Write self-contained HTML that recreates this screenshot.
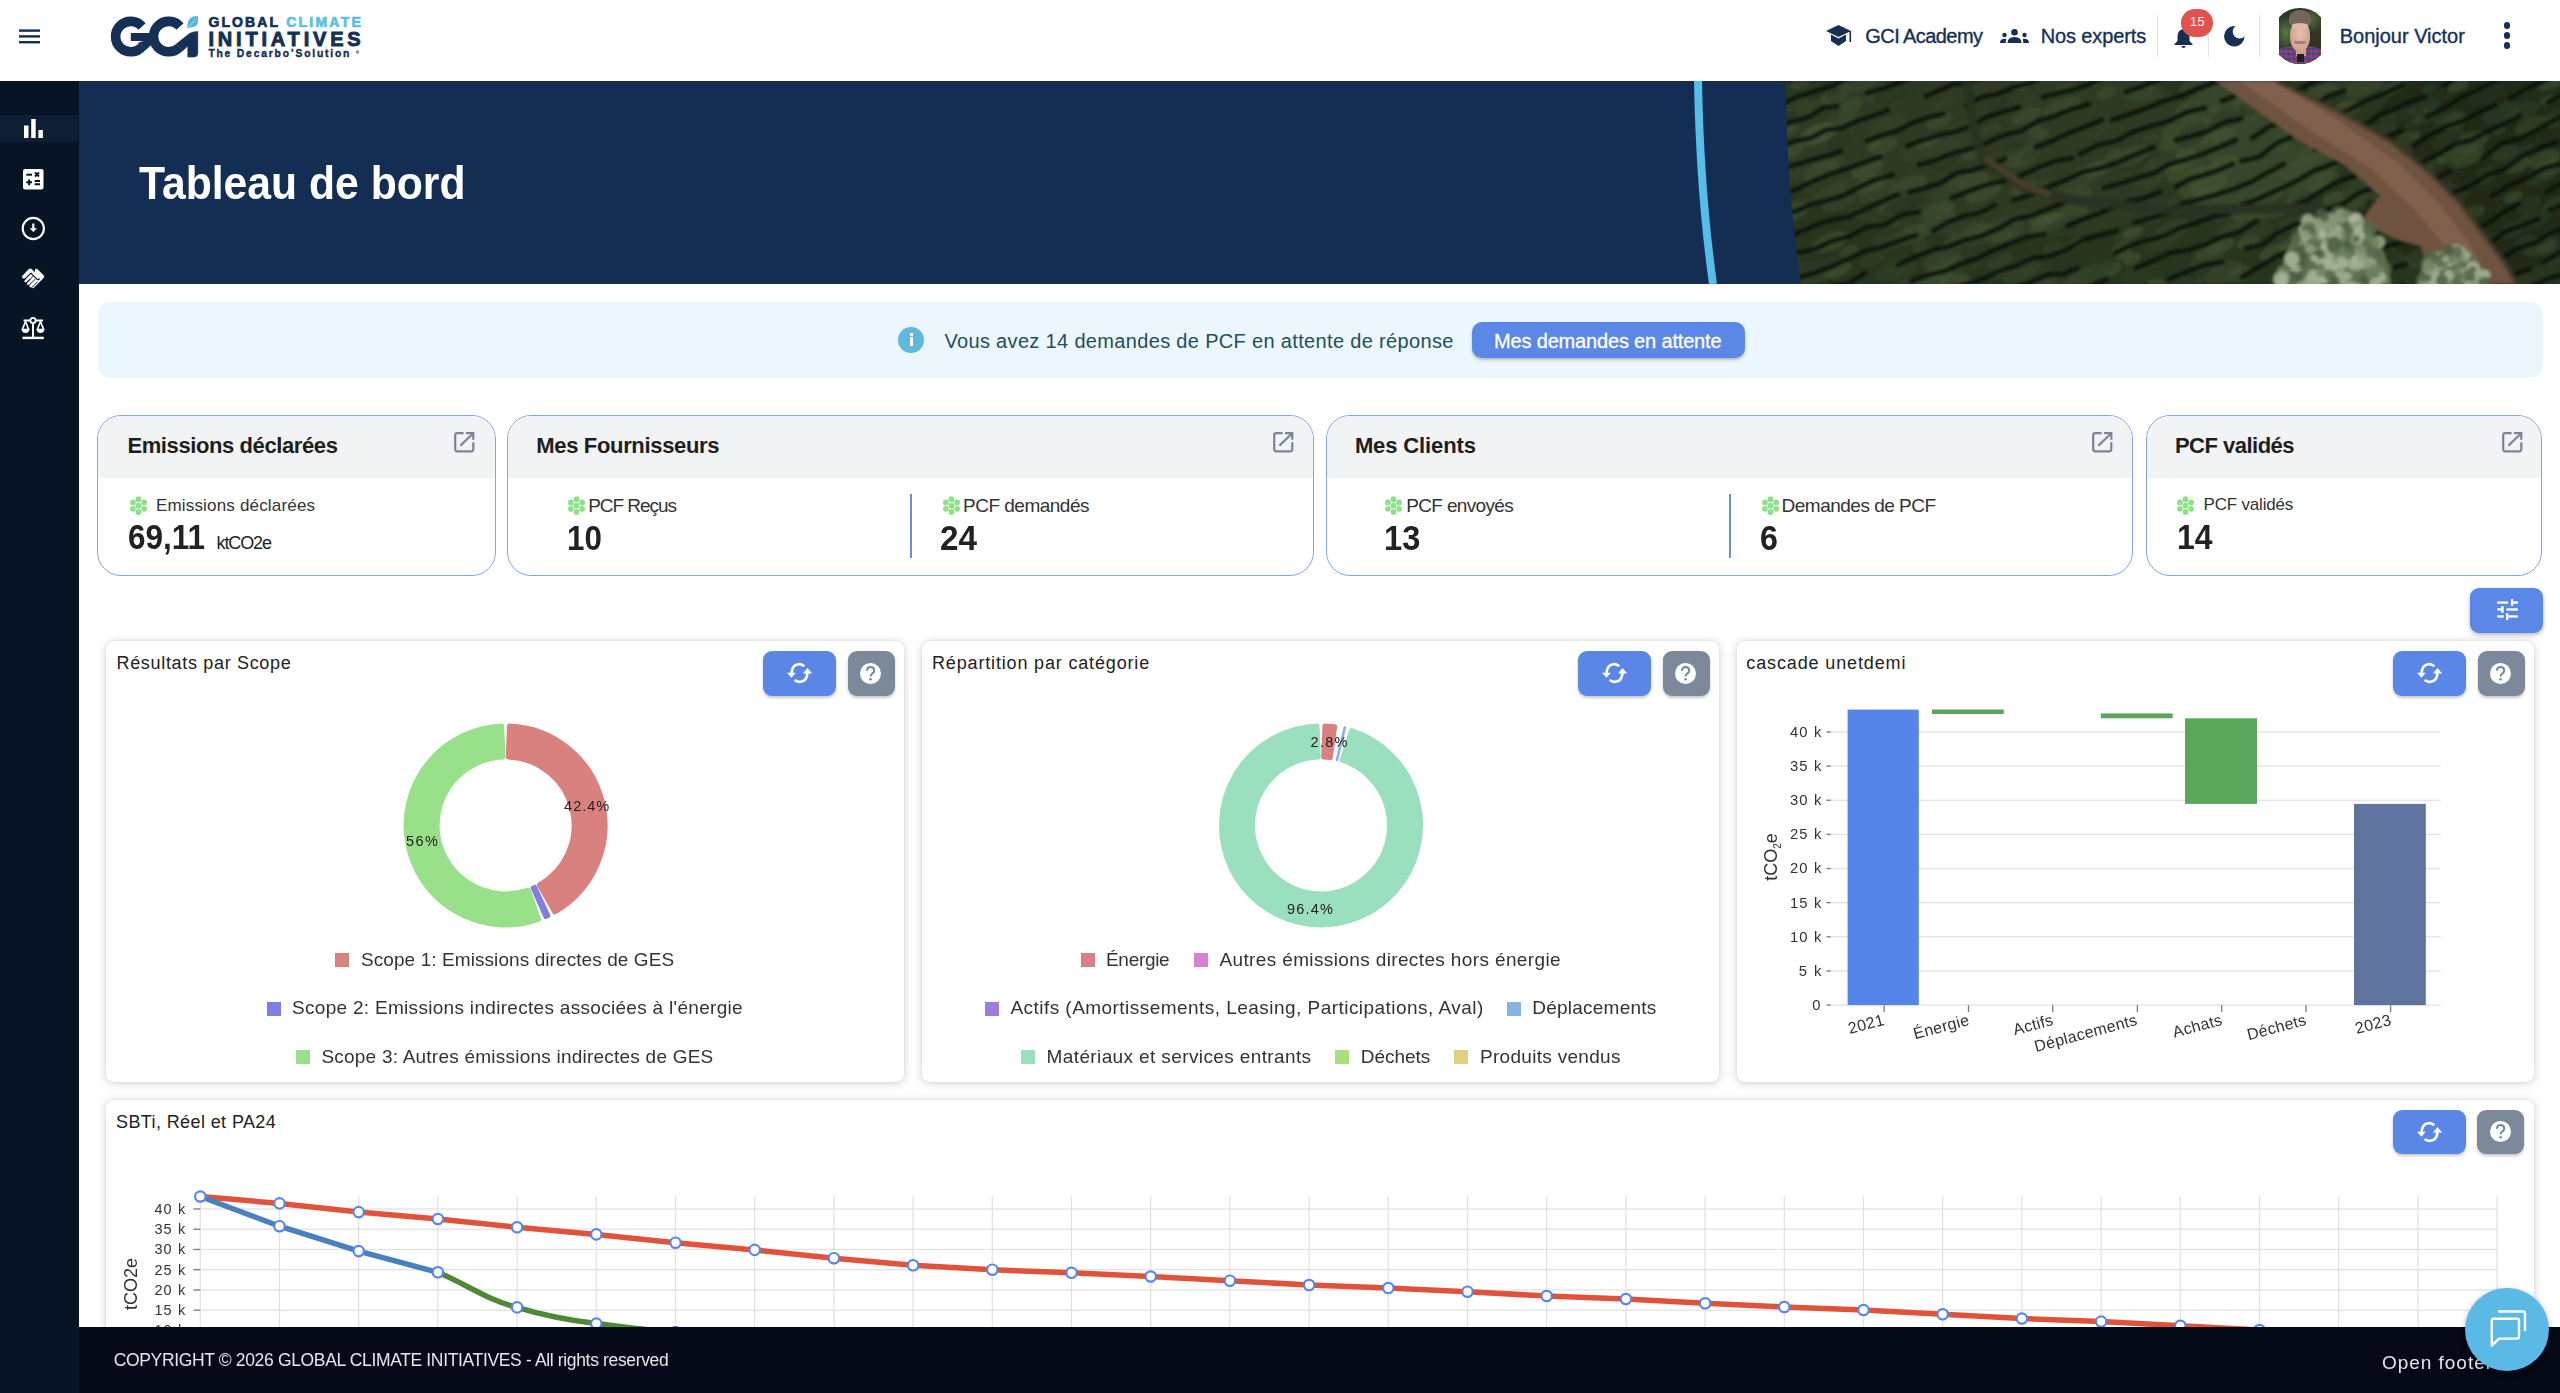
<!DOCTYPE html><html><head><meta charset="utf-8"><style>
*{box-sizing:border-box;margin:0;padding:0}
html,body{width:2560px;height:1393px;overflow:hidden;background:#fff;font-family:"Liberation Sans",sans-serif}
.t{position:absolute;white-space:nowrap;line-height:1}
.a{position:absolute}
svg{position:absolute;overflow:visible}
</style></head><body><div class="a" style="left:0;top:0;width:2560px;height:81px;background:#fff"></div>
<svg style="left:19px;top:29px" width="21" height="15"><rect x="0" y="0.4" width="21" height="2.4" fill="#152f55"/><rect x="0" y="6.2" width="21" height="2.4" fill="#152f55"/><rect x="0" y="12" width="21" height="2.4" fill="#152f55"/></svg>
<svg style="left:105px;top:10px" width="100" height="52" viewBox="0 0 100 52">
<g fill="none" stroke="#152f55" stroke-width="9.6">
<path d="M37.10,16.43 A15.2,15.2 0 1 0 37.44,36.37"/>
<path d="M75.00,16.43 A15.2,15.2 0 1 0 74.45,37.35"/>
</g>
<rect x="25.8" y="23" width="18.5" height="8" fill="#152f55"/>
<path d="M33.5,33 L44.5,29 L45.6,35.2 L41,39.5 Z" fill="#152f55" stroke="#152f55" stroke-width="0.6"/>
<path d="M71.2,34.1 L83.6,24.2 Q87,21.5 92.8,21.5 L92.8,43 Q92.8,47 88.8,47 L82.8,47 L82.8,36 L77.8,40.7 Z" fill="#152f55" stroke="#152f55" stroke-width="0.6" stroke-linejoin="round"/>
<path d="M82.3,18 Q82,9 88,6.5 L93,6 L93,11 Q93,16.5 88,17 Q85,17.3 82.3,18 Z" fill="#55b6de"/>
<path d="M83.5,17 L90.5,9.5" stroke="#fff" stroke-width="0.7" opacity="0.8"/>
</svg>
<div class="t" style="left:208.4px;top:14.5px;font-size:14px;font-weight:700;color:#152f55;letter-spacing:2.098px;-webkit-text-stroke:0.7px #152f55">GLOBAL</div>
<div class="t" style="left:286.2px;top:14.5px;font-size:14px;font-weight:700;color:#5bbfe6;letter-spacing:2.235px;-webkit-text-stroke:0.7px #5bbfe6">CLIMATE</div>
<div class="t" style="left:208.4px;top:29.0px;font-size:20px;font-weight:700;color:#152f55;letter-spacing:3.821px;-webkit-text-stroke:0.9px #152f55">INITIATIVES</div>
<div class="t" style="left:208.4px;top:49.3px;font-size:10.3px;font-weight:700;color:#152f55;letter-spacing:1.820px;-webkit-text-stroke:0.4px #152f55">The Decarbo’Solution</div>
<div class="a" style="left:355.5px;top:50px;width:3.6px;height:3.6px;border-radius:50%;background:#8a97aa"></div>
<svg style="left:1826px;top:25px" width="26" height="22" viewBox="0 0 26 22">
<path d="M12.5,0 L25,6 L12.5,12 L0,6 Z" fill="#152f55"/>
<path d="M5,9.5 L5,16 L12.5,21 L20,16 L20,9.5 L12.5,13.5 Z" fill="#152f55"/>
<rect x="23.5" y="6" width="1.6" height="11" fill="#152f55"/>
</svg>
<div class="t" style="left:1865.3px;top:26.1px;font-size:20px;font-weight:400;color:#152f55;letter-spacing:-0.569px;-webkit-text-stroke:0.35px #152f55">GCI Academy</div>
<svg style="left:2000px;top:29px" width="29" height="14" viewBox="0 0 29 14">
<circle cx="14.5" cy="3.3" r="3.3" fill="#152f55"/>
<path d="M7.5,14 Q7.5,8 14.5,8 Q21.5,8 21.5,14 Z" fill="#152f55"/>
<circle cx="4.5" cy="6" r="2.2" fill="#152f55"/><path d="M0,14 Q0,9.8 5,9.8 L6.2,10 Q5.6,11.5 5.8,14 Z" fill="#152f55"/>
<circle cx="24.5" cy="6" r="2.2" fill="#152f55"/><path d="M29,14 Q29,9.8 24,9.8 L22.8,10 Q23.4,11.5 23.2,14 Z" fill="#152f55"/>
</svg>
<div class="t" style="left:2040.7px;top:26.1px;font-size:20px;font-weight:400;color:#152f55;letter-spacing:-0.122px;-webkit-text-stroke:0.35px #152f55">Nos experts</div>
<div class="a" style="left:2156.9px;top:15px;width:1.2px;height:42px;background:#e3e3e3"></div>
<div class="a" style="left:2208.2px;top:15px;width:1.2px;height:42px;background:#e3e3e3"></div>
<div class="a" style="left:2259.1px;top:15px;width:1.2px;height:42px;background:#e3e3e3"></div>
<svg style="left:2174px;top:28px" width="19" height="20" viewBox="0 0 19 20">
<path d="M9.5,1 Q15,1.5 15.5,8 L15.5,13 L18.5,16 L18.5,17 L0.5,17 L0.5,16 L3.5,13 L3.5,8 Q4,1.5 9.5,1 Z" fill="#152f55"/>
<path d="M7.3,18 L11.7,18 Q11.5,20 9.5,20 Q7.5,20 7.3,18 Z" fill="#152f55"/>
</svg>
<div class="a" style="left:2181px;top:9px;width:32px;height:28px;border-radius:14px;background:#e0524b"></div>
<div class="t" style="left:2190.0px;top:16.1px;font-size:12.6px;font-weight:400;color:#fff;letter-spacing:0.384px;">15</div>
<svg style="left:2224px;top:26.4px" width="21" height="20.5" viewBox="0 0 21 20.5">
<defs><mask id="mm"><rect x="-2" y="-2" width="25" height="25" fill="#fff"/><circle cx="15.6" cy="5.6" r="6.9" fill="#000"/></mask></defs>
<circle cx="10.3" cy="10.25" r="10.25" fill="#152f55" mask="url(#mm)"/>
</svg>
<div class="a" style="left:2278.9px;top:7.9px;width:42px;height:55.8px;overflow:hidden">
<div class="a" style="left:-6.9px;top:0;width:55.8px;height:55.8px;border-radius:50%;overflow:hidden;background:#2b3a24;filter:blur(0.5px)">
<div class="a" style="left:0;top:0;width:56px;height:56px;background:radial-gradient(ellipse 22% 30% at 25% 45%,#5a7a45 0%,rgba(0,0,0,0) 100%),radial-gradient(ellipse 25% 25% at 70% 20%,#4d6a3a 0%,rgba(0,0,0,0) 100%),radial-gradient(ellipse 25% 40% at 80% 55%,#3a3024 0%,rgba(0,0,0,0) 100%)"></div>
<div class="a" style="left:-2px;top:38px;width:60px;height:22px;border-radius:50% 50% 0 0;background:repeating-linear-gradient(90deg,#8a4562 0 2.5px,#434a8a 2.5px 5px)"></div>
<div class="a" style="left:-2px;top:38px;width:60px;height:22px;border-radius:50% 50% 0 0;background:repeating-linear-gradient(0deg,rgba(170,60,100,0.45) 0 2.5px,rgba(50,60,150,0.45) 2.5px 5px)"></div>
<div class="a" style="left:24px;top:38px;width:10px;height:10px;background:#c9a08c"></div>
<div class="a" style="left:25px;top:46px;width:7px;height:8px;background:#1c1c22"></div>
<div class="a" style="left:17.5px;top:13px;width:20px;height:31px;border-radius:45% 45% 50% 50%;background:radial-gradient(ellipse at 50% 40%,#e4c2b2 0%,#c89c88 85%)"></div>
<div class="a" style="left:16.5px;top:2.5px;width:22px;height:17px;border-radius:50% 50% 30% 30%;background:#74665a"></div><div class="a" style="left:19.5px;top:15px;width:16px;height:5px;border-radius:50% 50% 0 0;background:#ddb9a8"></div>
<div class="a" style="left:21.5px;top:33.5px;width:12px;height:3px;border-radius:0 0 6px 6px;background:#b07a70"></div>
</div></div>
<div class="t" style="left:2339.8px;top:26.3px;font-size:20px;font-weight:400;color:#152f55;letter-spacing:-0.020px;-webkit-text-stroke:0.35px #152f55">Bonjour Victor</div>
<div class="a" style="left:2503.6px;top:22.45px;width:6.7px;height:6.7px;border-radius:50%;background:#152f55"></div>
<div class="a" style="left:2503.6px;top:32.25px;width:6.7px;height:6.7px;border-radius:50%;background:#152f55"></div>
<div class="a" style="left:2503.6px;top:42.05px;width:6.7px;height:6.7px;border-radius:50%;background:#152f55"></div>
<div class="a" style="left:0;top:81px;width:79px;height:1312px;background:#061426"></div>
<div class="a" style="left:0;top:115.3px;width:78px;height:27.2px;background:#0c1f35"></div>
<svg style="left:23.7px;top:119.2px" width="19" height="19"><rect x="0" y="6.5" width="4.5" height="12.5" fill="#fff"/><rect x="7.2" y="0" width="4.5" height="19" fill="#fff"/><rect x="14.4" y="11" width="4.5" height="8" fill="#fff"/></svg>
<svg style="left:22.8px;top:168.7px" width="20.5" height="20.5" viewBox="0 0 20.5 20.5">
<rect x="0" y="0" width="20.5" height="20.5" rx="2" fill="#fff"/>
<g stroke="#061426" stroke-width="2">
<path d="M3.3,5.7 L9,5.7"/><path d="M12,3.5 L16,7.5 M16,3.5 L12,7.5"/>
<path d="M3.3,13.3 L9,13.3 M6.15,10.5 L6.15,16.2"/><path d="M11.7,12 L17,12 M11.7,15.3 L17,15.3"/>
</g></svg>
<svg style="left:21.5px;top:216.6px" width="23.3" height="23" viewBox="0 0 23.3 23">
<circle cx="11.3" cy="11.5" r="10.6" fill="none" stroke="#fff" stroke-width="2.1"/>
<path d="M10.2,6.6 L12.4,6.6 L12.4,11.2 L15,11.2 L11.3,15 L7.6,11.2 L10.2,11.2 Z" fill="#fff"/>
</svg>
<svg style="left:15px;top:260px" width="35" height="35" viewBox="15 260 35 35">
<g fill="#fff">
<path d="M22.6,278.2 Q21.2,276.8 22.6,275.4 L28.9,269.1 Q30.3,267.7 31.7,269.1 L38.9,276.3 Q40.3,277.7 38.9,279.1 L37.5,280.5 Z"/>
<path d="M35,269.3 Q36.3,268 37.6,269.3 L43.6,275.3 Q45,276.7 43.6,278.1 L34.2,287.5 Q32.8,288.9 31.4,287.5 L29,285 Z"/>
</g>
<g stroke="#fff" stroke-width="2.5" stroke-linecap="round">
<path d="M25.6,281.2 L31.6,275.2"/><path d="M28.1,283.7 L34.1,277.7"/><path d="M30.6,286.2 L36.4,280.4"/>
</g>
<g stroke="#061426" fill="none" stroke-linecap="round">
<path d="M24.2,279.8 L30.9,273.1 L36.9,279.1 Q38,280.2 39.2,279" stroke-width="1.2" stroke-linejoin="round"/>
<path d="M26.9,282.5 L32.6,276.8" stroke-width="1"/>
<path d="M29.4,285 L35.1,279.3" stroke-width="1"/>
<path d="M31.9,287.5 L37.5,281.9" stroke-width="1"/>
<path d="M34.4,268.9 L34.4,271.2" stroke-width="1.2"/>
</g>
</svg>
<svg style="left:15px;top:305px" width="35" height="40" viewBox="15 305 35 40">
<g stroke="#fff" fill="none">
<circle cx="33" cy="320.4" r="2.6" stroke-width="1.8"/>
<path d="M23.6,320.6 L30.3,320.6 M35.7,320.6 L43,320.6" stroke-width="2"/>
<path d="M33,323 L33,337" stroke-width="2"/>
<path d="M22.5,337.9 L43.8,337.9" stroke-width="2.4"/>
<path d="M25.5,321.5 L22.3,329.6 L28.7,329.6 Z M40.5,321.5 L37.3,329.6 L43.7,329.6 Z" stroke-width="1.6" stroke-linejoin="round"/>
</g>
<path d="M21.6,329.2 Q21.8,332.9 25.5,332.9 Q29.2,332.9 29.4,329.2 Z M36.6,329.2 Q36.8,332.9 40.5,332.9 Q44.2,332.9 44.4,329.2 Z" fill="#fff"/>
</svg>
<div class="a" style="left:79px;top:81px;width:2481px;height:203px;background:#142d53;overflow:hidden">
<div class="t" style="left:60.0px;top:77.7px;font-size:47px;font-weight:700;color:#fff;letter-spacing:0.000px;transform:scaleX(0.9082);transform-origin:0 0;">Tableau de bord</div>
<svg style="left:0;top:0" width="2481" height="203" viewBox="79 81 2481 203">
<defs><clipPath id="ph"><path d="M1785.6,81 Q1787,191 1801,284 L2560,284 L2560,81 Z"/></clipPath>
<filter id="bl" x="-2%" y="-5%" width="104%" height="110%"><feGaussianBlur stdDeviation="1.4"/></filter></defs>
<g clip-path="url(#ph)"><g filter="url(#bl)"><rect x="1780" y="81" width="780" height="203" fill="#28361f"/><ellipse cx="2000" cy="150" rx="220" ry="90" fill="#333f29" opacity="0.5"/><ellipse cx="2250" cy="150" rx="90" ry="70" fill="#3d5230" opacity="0.6"/><ellipse cx="2480" cy="170" rx="120" ry="110" fill="#1a2716" opacity="0.6"/><ellipse cx="2133" cy="195" rx="20" ry="9" transform="rotate(-22 2133 195)" fill="#2e3b25" opacity="0.45"/><ellipse cx="2132" cy="259" rx="10" ry="5" transform="rotate(-22 2132 259)" fill="#4a5e38" opacity="0.45"/><ellipse cx="2151" cy="207" rx="10" ry="5" transform="rotate(-22 2151 207)" fill="#2e3b25" opacity="0.45"/><ellipse cx="2017" cy="94" rx="18" ry="9" transform="rotate(-22 2017 94)" fill="#25321f" opacity="0.45"/><ellipse cx="2275" cy="203" rx="13" ry="6" transform="rotate(-22 2275 203)" fill="#2e3b25" opacity="0.45"/><ellipse cx="2290" cy="207" rx="10" ry="5" transform="rotate(-22 2290 207)" fill="#3a4a2e" opacity="0.45"/><ellipse cx="2429" cy="89" rx="8" ry="4" transform="rotate(-22 2429 89)" fill="#34432a" opacity="0.45"/><ellipse cx="2248" cy="242" rx="12" ry="6" transform="rotate(-22 2248 242)" fill="#4a5e38" opacity="0.45"/><ellipse cx="2437" cy="187" rx="16" ry="8" transform="rotate(-22 2437 187)" fill="#2e3b25" opacity="0.45"/><ellipse cx="1784" cy="93" rx="16" ry="8" transform="rotate(-22 1784 93)" fill="#2e3b25" opacity="0.45"/><ellipse cx="2558" cy="289" rx="19" ry="9" transform="rotate(-22 2558 289)" fill="#25321f" opacity="0.45"/><ellipse cx="1978" cy="238" rx="15" ry="7" transform="rotate(-22 1978 238)" fill="#3a4a2e" opacity="0.45"/><ellipse cx="1835" cy="240" rx="13" ry="6" transform="rotate(-22 1835 240)" fill="#425433" opacity="0.45"/><ellipse cx="2081" cy="281" rx="19" ry="9" transform="rotate(-22 2081 281)" fill="#3a4a2e" opacity="0.45"/><ellipse cx="1947" cy="274" rx="9" ry="4" transform="rotate(-22 1947 274)" fill="#2e3b25" opacity="0.45"/><ellipse cx="2545" cy="160" rx="9" ry="4" transform="rotate(-22 2545 160)" fill="#25321f" opacity="0.45"/><ellipse cx="1935" cy="220" rx="12" ry="6" transform="rotate(-22 1935 220)" fill="#425433" opacity="0.45"/><ellipse cx="2039" cy="282" rx="18" ry="8" transform="rotate(-22 2039 282)" fill="#3a4a2e" opacity="0.45"/><ellipse cx="1885" cy="227" rx="8" ry="4" transform="rotate(-22 1885 227)" fill="#2e3b25" opacity="0.45"/><ellipse cx="2402" cy="113" rx="15" ry="7" transform="rotate(-22 2402 113)" fill="#2e3b25" opacity="0.45"/><ellipse cx="2177" cy="287" rx="18" ry="8" transform="rotate(-22 2177 287)" fill="#2e3b25" opacity="0.45"/><ellipse cx="2282" cy="100" rx="13" ry="6" transform="rotate(-22 2282 100)" fill="#34432a" opacity="0.45"/><ellipse cx="1780" cy="261" rx="20" ry="10" transform="rotate(-22 1780 261)" fill="#4a5e38" opacity="0.45"/><ellipse cx="2017" cy="265" rx="11" ry="5" transform="rotate(-22 2017 265)" fill="#2e3b25" opacity="0.45"/><ellipse cx="2557" cy="204" rx="15" ry="7" transform="rotate(-22 2557 204)" fill="#3a4a2e" opacity="0.45"/><ellipse cx="2552" cy="121" rx="11" ry="5" transform="rotate(-22 2552 121)" fill="#4a5e38" opacity="0.45"/><ellipse cx="2037" cy="139" rx="9" ry="4" transform="rotate(-22 2037 139)" fill="#3a4a2e" opacity="0.45"/><ellipse cx="1943" cy="212" rx="8" ry="4" transform="rotate(-22 1943 212)" fill="#425433" opacity="0.45"/><ellipse cx="2070" cy="172" rx="20" ry="10" transform="rotate(-22 2070 172)" fill="#2e3b25" opacity="0.45"/><ellipse cx="2429" cy="104" rx="13" ry="6" transform="rotate(-22 2429 104)" fill="#25321f" opacity="0.45"/><ellipse cx="1900" cy="270" rx="18" ry="9" transform="rotate(-22 1900 270)" fill="#34432a" opacity="0.45"/><ellipse cx="2346" cy="109" rx="16" ry="8" transform="rotate(-22 2346 109)" fill="#4a5e38" opacity="0.45"/><ellipse cx="1933" cy="279" rx="19" ry="9" transform="rotate(-22 1933 279)" fill="#4a5e38" opacity="0.45"/><ellipse cx="1841" cy="85" rx="9" ry="4" transform="rotate(-22 1841 85)" fill="#4a5e38" opacity="0.45"/><ellipse cx="2531" cy="126" rx="17" ry="8" transform="rotate(-22 2531 126)" fill="#425433" opacity="0.45"/><ellipse cx="2108" cy="270" rx="14" ry="7" transform="rotate(-22 2108 270)" fill="#4a5e38" opacity="0.45"/><ellipse cx="1917" cy="230" rx="9" ry="4" transform="rotate(-22 1917 230)" fill="#34432a" opacity="0.45"/><ellipse cx="2154" cy="216" rx="16" ry="7" transform="rotate(-22 2154 216)" fill="#3a4a2e" opacity="0.45"/><ellipse cx="1999" cy="272" rx="11" ry="5" transform="rotate(-22 1999 272)" fill="#3a4a2e" opacity="0.45"/><ellipse cx="1834" cy="163" rx="11" ry="5" transform="rotate(-22 1834 163)" fill="#3a4a2e" opacity="0.45"/><ellipse cx="1917" cy="154" rx="15" ry="7" transform="rotate(-22 1917 154)" fill="#34432a" opacity="0.45"/><ellipse cx="1852" cy="105" rx="14" ry="6" transform="rotate(-22 1852 105)" fill="#425433" opacity="0.45"/><ellipse cx="2292" cy="224" rx="15" ry="7" transform="rotate(-22 2292 224)" fill="#34432a" opacity="0.45"/><ellipse cx="2240" cy="274" rx="14" ry="7" transform="rotate(-22 2240 274)" fill="#425433" opacity="0.45"/><ellipse cx="2327" cy="282" rx="8" ry="4" transform="rotate(-22 2327 282)" fill="#25321f" opacity="0.45"/><ellipse cx="1838" cy="89" rx="12" ry="6" transform="rotate(-22 1838 89)" fill="#34432a" opacity="0.45"/><ellipse cx="2559" cy="91" rx="15" ry="7" transform="rotate(-22 2559 91)" fill="#25321f" opacity="0.45"/><ellipse cx="1815" cy="276" rx="17" ry="8" transform="rotate(-22 1815 276)" fill="#34432a" opacity="0.45"/><ellipse cx="2399" cy="272" rx="13" ry="6" transform="rotate(-22 2399 272)" fill="#25321f" opacity="0.45"/><ellipse cx="2149" cy="92" rx="19" ry="9" transform="rotate(-22 2149 92)" fill="#3a4a2e" opacity="0.45"/><ellipse cx="2454" cy="198" rx="16" ry="7" transform="rotate(-22 2454 198)" fill="#2e3b25" opacity="0.45"/><ellipse cx="2076" cy="78" rx="9" ry="4" transform="rotate(-22 2076 78)" fill="#3a4a2e" opacity="0.45"/><ellipse cx="2279" cy="289" rx="19" ry="9" transform="rotate(-22 2279 289)" fill="#25321f" opacity="0.45"/><ellipse cx="2038" cy="276" rx="17" ry="8" transform="rotate(-22 2038 276)" fill="#2e3b25" opacity="0.45"/><ellipse cx="2124" cy="255" rx="9" ry="4" transform="rotate(-22 2124 255)" fill="#4a5e38" opacity="0.45"/><ellipse cx="1803" cy="204" rx="14" ry="7" transform="rotate(-22 1803 204)" fill="#34432a" opacity="0.45"/><ellipse cx="2527" cy="99" rx="18" ry="8" transform="rotate(-22 2527 99)" fill="#25321f" opacity="0.45"/><ellipse cx="2498" cy="130" rx="8" ry="4" transform="rotate(-22 2498 130)" fill="#425433" opacity="0.45"/><ellipse cx="1892" cy="207" rx="15" ry="7" transform="rotate(-22 1892 207)" fill="#425433" opacity="0.45"/><ellipse cx="2295" cy="170" rx="19" ry="9" transform="rotate(-22 2295 170)" fill="#425433" opacity="0.45"/><ellipse cx="2096" cy="129" rx="16" ry="8" transform="rotate(-22 2096 129)" fill="#34432a" opacity="0.45"/><ellipse cx="2467" cy="158" rx="15" ry="7" transform="rotate(-22 2467 158)" fill="#425433" opacity="0.45"/><ellipse cx="1944" cy="104" rx="12" ry="6" transform="rotate(-22 1944 104)" fill="#3a4a2e" opacity="0.45"/><ellipse cx="2335" cy="279" rx="12" ry="5" transform="rotate(-22 2335 279)" fill="#34432a" opacity="0.45"/><ellipse cx="1868" cy="176" rx="20" ry="9" transform="rotate(-22 1868 176)" fill="#2e3b25" opacity="0.45"/><ellipse cx="2078" cy="187" rx="17" ry="8" transform="rotate(-22 2078 187)" fill="#25321f" opacity="0.45"/><ellipse cx="2435" cy="286" rx="14" ry="6" transform="rotate(-22 2435 286)" fill="#3a4a2e" opacity="0.45"/><ellipse cx="2426" cy="135" rx="16" ry="7" transform="rotate(-22 2426 135)" fill="#25321f" opacity="0.45"/><ellipse cx="2333" cy="198" rx="12" ry="6" transform="rotate(-22 2333 198)" fill="#4a5e38" opacity="0.45"/><ellipse cx="1795" cy="104" rx="14" ry="6" transform="rotate(-22 1795 104)" fill="#3a4a2e" opacity="0.45"/><ellipse cx="2380" cy="132" rx="18" ry="8" transform="rotate(-22 2380 132)" fill="#3a4a2e" opacity="0.45"/><ellipse cx="2548" cy="100" rx="9" ry="4" transform="rotate(-22 2548 100)" fill="#4a5e38" opacity="0.45"/><ellipse cx="2291" cy="249" rx="20" ry="10" transform="rotate(-22 2291 249)" fill="#25321f" opacity="0.45"/><ellipse cx="1934" cy="252" rx="11" ry="5" transform="rotate(-22 1934 252)" fill="#25321f" opacity="0.45"/><ellipse cx="1788" cy="177" rx="17" ry="8" transform="rotate(-22 1788 177)" fill="#34432a" opacity="0.45"/><ellipse cx="1957" cy="242" rx="15" ry="7" transform="rotate(-22 1957 242)" fill="#4a5e38" opacity="0.45"/><ellipse cx="2170" cy="289" rx="10" ry="5" transform="rotate(-22 2170 289)" fill="#25321f" opacity="0.45"/><ellipse cx="2487" cy="94" rx="20" ry="9" transform="rotate(-22 2487 94)" fill="#25321f" opacity="0.45"/><ellipse cx="2083" cy="172" rx="11" ry="5" transform="rotate(-22 2083 172)" fill="#3a4a2e" opacity="0.45"/><ellipse cx="2074" cy="197" rx="19" ry="9" transform="rotate(-22 2074 197)" fill="#425433" opacity="0.45"/><ellipse cx="2142" cy="215" rx="11" ry="5" transform="rotate(-22 2142 215)" fill="#25321f" opacity="0.45"/><ellipse cx="2456" cy="247" rx="20" ry="9" transform="rotate(-22 2456 247)" fill="#3a4a2e" opacity="0.45"/><ellipse cx="1946" cy="268" rx="21" ry="10" transform="rotate(-22 1946 268)" fill="#425433" opacity="0.45"/><ellipse cx="2199" cy="245" rx="12" ry="6" transform="rotate(-22 2199 245)" fill="#25321f" opacity="0.45"/><ellipse cx="2448" cy="150" rx="9" ry="4" transform="rotate(-22 2448 150)" fill="#2e3b25" opacity="0.45"/><ellipse cx="2047" cy="166" rx="12" ry="5" transform="rotate(-22 2047 166)" fill="#3a4a2e" opacity="0.45"/><ellipse cx="1950" cy="262" rx="13" ry="6" transform="rotate(-22 1950 262)" fill="#3a4a2e" opacity="0.45"/><ellipse cx="1915" cy="147" rx="18" ry="8" transform="rotate(-22 1915 147)" fill="#34432a" opacity="0.45"/><ellipse cx="2147" cy="290" rx="20" ry="9" transform="rotate(-22 2147 290)" fill="#4a5e38" opacity="0.45"/><ellipse cx="2435" cy="223" rx="20" ry="9" transform="rotate(-22 2435 223)" fill="#2e3b25" opacity="0.45"/><ellipse cx="2232" cy="223" rx="18" ry="8" transform="rotate(-22 2232 223)" fill="#2e3b25" opacity="0.45"/><ellipse cx="2191" cy="137" rx="17" ry="8" transform="rotate(-22 2191 137)" fill="#25321f" opacity="0.45"/><ellipse cx="1908" cy="186" rx="20" ry="9" transform="rotate(-22 1908 186)" fill="#425433" opacity="0.45"/><ellipse cx="2023" cy="157" rx="19" ry="9" transform="rotate(-22 2023 157)" fill="#4a5e38" opacity="0.45"/><ellipse cx="1942" cy="258" rx="20" ry="10" transform="rotate(-22 1942 258)" fill="#4a5e38" opacity="0.45"/><ellipse cx="1993" cy="182" rx="13" ry="6" transform="rotate(-22 1993 182)" fill="#3a4a2e" opacity="0.45"/><ellipse cx="2172" cy="205" rx="8" ry="4" transform="rotate(-22 2172 205)" fill="#3a4a2e" opacity="0.45"/><ellipse cx="2182" cy="161" rx="18" ry="9" transform="rotate(-22 2182 161)" fill="#4a5e38" opacity="0.45"/><ellipse cx="1875" cy="95" rx="10" ry="5" transform="rotate(-22 1875 95)" fill="#4a5e38" opacity="0.45"/><ellipse cx="2138" cy="273" rx="18" ry="9" transform="rotate(-22 2138 273)" fill="#2e3b25" opacity="0.45"/><ellipse cx="1990" cy="177" rx="10" ry="5" transform="rotate(-22 1990 177)" fill="#2e3b25" opacity="0.45"/><ellipse cx="2483" cy="276" rx="20" ry="9" transform="rotate(-22 2483 276)" fill="#4a5e38" opacity="0.45"/><ellipse cx="2027" cy="116" rx="16" ry="7" transform="rotate(-22 2027 116)" fill="#425433" opacity="0.45"/><ellipse cx="1881" cy="243" rx="8" ry="4" transform="rotate(-22 1881 243)" fill="#34432a" opacity="0.45"/><ellipse cx="1901" cy="78" rx="12" ry="5" transform="rotate(-22 1901 78)" fill="#25321f" opacity="0.45"/><ellipse cx="2057" cy="208" rx="9" ry="4" transform="rotate(-22 2057 208)" fill="#25321f" opacity="0.45"/><ellipse cx="2234" cy="258" rx="16" ry="7" transform="rotate(-22 2234 258)" fill="#25321f" opacity="0.45"/><ellipse cx="1934" cy="189" rx="14" ry="6" transform="rotate(-22 1934 189)" fill="#2e3b25" opacity="0.45"/><ellipse cx="2274" cy="252" rx="16" ry="7" transform="rotate(-22 2274 252)" fill="#4a5e38" opacity="0.45"/><ellipse cx="1939" cy="211" rx="16" ry="8" transform="rotate(-22 1939 211)" fill="#4a5e38" opacity="0.45"/><ellipse cx="1949" cy="192" rx="16" ry="7" transform="rotate(-22 1949 192)" fill="#34432a" opacity="0.45"/><ellipse cx="1961" cy="234" rx="18" ry="9" transform="rotate(-22 1961 234)" fill="#34432a" opacity="0.45"/><ellipse cx="2026" cy="143" rx="20" ry="9" transform="rotate(-22 2026 143)" fill="#34432a" opacity="0.45"/><ellipse cx="2387" cy="117" rx="9" ry="4" transform="rotate(-22 2387 117)" fill="#34432a" opacity="0.45"/><ellipse cx="1883" cy="94" rx="13" ry="6" transform="rotate(-22 1883 94)" fill="#2e3b25" opacity="0.45"/><ellipse cx="2429" cy="166" rx="18" ry="8" transform="rotate(-22 2429 166)" fill="#34432a" opacity="0.45"/><ellipse cx="1937" cy="210" rx="18" ry="9" transform="rotate(-22 1937 210)" fill="#3a4a2e" opacity="0.45"/><ellipse cx="1937" cy="222" rx="20" ry="9" transform="rotate(-22 1937 222)" fill="#425433" opacity="0.45"/><ellipse cx="1870" cy="184" rx="18" ry="8" transform="rotate(-22 1870 184)" fill="#4a5e38" opacity="0.45"/><ellipse cx="2559" cy="254" rx="18" ry="9" transform="rotate(-22 2559 254)" fill="#2e3b25" opacity="0.45"/><ellipse cx="1863" cy="83" rx="15" ry="7" transform="rotate(-22 1863 83)" fill="#4a5e38" opacity="0.45"/><ellipse cx="2486" cy="178" rx="10" ry="5" transform="rotate(-22 2486 178)" fill="#3a4a2e" opacity="0.45"/><ellipse cx="1939" cy="256" rx="21" ry="10" transform="rotate(-22 1939 256)" fill="#25321f" opacity="0.45"/><ellipse cx="1854" cy="88" rx="20" ry="9" transform="rotate(-22 1854 88)" fill="#2e3b25" opacity="0.45"/><ellipse cx="1841" cy="96" rx="13" ry="6" transform="rotate(-22 1841 96)" fill="#2e3b25" opacity="0.45"/><ellipse cx="2182" cy="167" rx="16" ry="7" transform="rotate(-22 2182 167)" fill="#3a4a2e" opacity="0.45"/><ellipse cx="2275" cy="84" rx="11" ry="5" transform="rotate(-22 2275 84)" fill="#2e3b25" opacity="0.45"/><ellipse cx="2134" cy="234" rx="13" ry="6" transform="rotate(-22 2134 234)" fill="#34432a" opacity="0.45"/><ellipse cx="2252" cy="95" rx="18" ry="9" transform="rotate(-22 2252 95)" fill="#425433" opacity="0.45"/><ellipse cx="2477" cy="247" rx="17" ry="8" transform="rotate(-22 2477 247)" fill="#25321f" opacity="0.45"/><ellipse cx="2513" cy="197" rx="10" ry="5" transform="rotate(-22 2513 197)" fill="#4a5e38" opacity="0.45"/><ellipse cx="2546" cy="248" rx="11" ry="5" transform="rotate(-22 2546 248)" fill="#3a4a2e" opacity="0.45"/><ellipse cx="2361" cy="242" rx="18" ry="9" transform="rotate(-22 2361 242)" fill="#2e3b25" opacity="0.45"/><ellipse cx="1884" cy="146" rx="15" ry="7" transform="rotate(-22 1884 146)" fill="#425433" opacity="0.45"/><ellipse cx="2378" cy="240" rx="13" ry="6" transform="rotate(-22 2378 240)" fill="#25321f" opacity="0.45"/><ellipse cx="1924" cy="246" rx="12" ry="6" transform="rotate(-22 1924 246)" fill="#3a4a2e" opacity="0.45"/><ellipse cx="1788" cy="151" rx="16" ry="8" transform="rotate(-22 1788 151)" fill="#4a5e38" opacity="0.45"/><ellipse cx="1819" cy="134" rx="20" ry="10" transform="rotate(-22 1819 134)" fill="#425433" opacity="0.45"/><ellipse cx="2043" cy="217" rx="15" ry="7" transform="rotate(-22 2043 217)" fill="#4a5e38" opacity="0.45"/><ellipse cx="1840" cy="186" rx="14" ry="7" transform="rotate(-22 1840 186)" fill="#34432a" opacity="0.45"/><ellipse cx="2327" cy="239" rx="21" ry="10" transform="rotate(-22 2327 239)" fill="#3a4a2e" opacity="0.45"/><ellipse cx="1870" cy="98" rx="11" ry="5" transform="rotate(-22 1870 98)" fill="#2e3b25" opacity="0.45"/><ellipse cx="2093" cy="86" rx="11" ry="5" transform="rotate(-22 2093 86)" fill="#2e3b25" opacity="0.45"/><ellipse cx="1788" cy="131" rx="12" ry="5" transform="rotate(-22 1788 131)" fill="#425433" opacity="0.45"/><ellipse cx="2209" cy="184" rx="20" ry="10" transform="rotate(-22 2209 184)" fill="#4a5e38" opacity="0.45"/><ellipse cx="2440" cy="96" rx="14" ry="6" transform="rotate(-22 2440 96)" fill="#25321f" opacity="0.45"/><ellipse cx="1839" cy="203" rx="18" ry="8" transform="rotate(-22 1839 203)" fill="#3a4a2e" opacity="0.45"/><ellipse cx="2081" cy="277" rx="13" ry="6" transform="rotate(-22 2081 277)" fill="#34432a" opacity="0.45"/><ellipse cx="2447" cy="192" rx="16" ry="7" transform="rotate(-22 2447 192)" fill="#2e3b25" opacity="0.45"/><ellipse cx="2517" cy="165" rx="15" ry="7" transform="rotate(-22 2517 165)" fill="#4a5e38" opacity="0.45"/><ellipse cx="2024" cy="189" rx="14" ry="7" transform="rotate(-22 2024 189)" fill="#425433" opacity="0.45"/><ellipse cx="2217" cy="136" rx="17" ry="8" transform="rotate(-22 2217 136)" fill="#425433" opacity="0.45"/><ellipse cx="1801" cy="241" rx="15" ry="7" transform="rotate(-22 1801 241)" fill="#25321f" opacity="0.45"/><ellipse cx="1902" cy="237" rx="13" ry="6" transform="rotate(-22 1902 237)" fill="#425433" opacity="0.45"/><ellipse cx="2364" cy="86" rx="21" ry="10" transform="rotate(-22 2364 86)" fill="#425433" opacity="0.45"/><ellipse cx="1837" cy="270" rx="13" ry="6" transform="rotate(-22 1837 270)" fill="#2e3b25" opacity="0.45"/><ellipse cx="1976" cy="237" rx="9" ry="4" transform="rotate(-22 1976 237)" fill="#3a4a2e" opacity="0.45"/><ellipse cx="2511" cy="230" rx="14" ry="7" transform="rotate(-22 2511 230)" fill="#34432a" opacity="0.45"/><ellipse cx="2251" cy="100" rx="16" ry="7" transform="rotate(-22 2251 100)" fill="#2e3b25" opacity="0.45"/><ellipse cx="1872" cy="260" rx="13" ry="6" transform="rotate(-22 1872 260)" fill="#34432a" opacity="0.45"/><ellipse cx="1877" cy="170" rx="17" ry="8" transform="rotate(-22 1877 170)" fill="#2e3b25" opacity="0.45"/><ellipse cx="2249" cy="213" rx="17" ry="8" transform="rotate(-22 2249 213)" fill="#425433" opacity="0.45"/><ellipse cx="2387" cy="189" rx="21" ry="10" transform="rotate(-22 2387 189)" fill="#425433" opacity="0.45"/><ellipse cx="2353" cy="126" rx="9" ry="4" transform="rotate(-22 2353 126)" fill="#425433" opacity="0.45"/><ellipse cx="2392" cy="209" rx="13" ry="6" transform="rotate(-22 2392 209)" fill="#425433" opacity="0.45"/><ellipse cx="2256" cy="231" rx="17" ry="8" transform="rotate(-22 2256 231)" fill="#34432a" opacity="0.45"/><ellipse cx="2274" cy="237" rx="10" ry="5" transform="rotate(-22 2274 237)" fill="#34432a" opacity="0.45"/><ellipse cx="2172" cy="215" rx="11" ry="5" transform="rotate(-22 2172 215)" fill="#25321f" opacity="0.45"/><ellipse cx="1811" cy="88" rx="11" ry="5" transform="rotate(-22 1811 88)" fill="#2e3b25" opacity="0.45"/><ellipse cx="1801" cy="83" rx="11" ry="5" transform="rotate(-22 1801 83)" fill="#425433" opacity="0.45"/><ellipse cx="1837" cy="94" rx="17" ry="8" transform="rotate(-22 1837 94)" fill="#4a5e38" opacity="0.45"/><ellipse cx="1963" cy="286" rx="14" ry="7" transform="rotate(-22 1963 286)" fill="#425433" opacity="0.45"/><ellipse cx="1944" cy="149" rx="18" ry="8" transform="rotate(-22 1944 149)" fill="#3a4a2e" opacity="0.45"/><ellipse cx="2406" cy="171" rx="19" ry="9" transform="rotate(-22 2406 171)" fill="#34432a" opacity="0.45"/><ellipse cx="2127" cy="236" rx="13" ry="6" transform="rotate(-22 2127 236)" fill="#34432a" opacity="0.45"/><ellipse cx="2068" cy="216" rx="21" ry="10" transform="rotate(-22 2068 216)" fill="#425433" opacity="0.45"/><ellipse cx="2007" cy="238" rx="19" ry="9" transform="rotate(-22 2007 238)" fill="#34432a" opacity="0.45"/><ellipse cx="2114" cy="154" rx="9" ry="4" transform="rotate(-22 2114 154)" fill="#425433" opacity="0.45"/><ellipse cx="1841" cy="93" rx="15" ry="7" transform="rotate(-22 1841 93)" fill="#2e3b25" opacity="0.45"/><ellipse cx="2416" cy="175" rx="19" ry="9" transform="rotate(-22 2416 175)" fill="#3a4a2e" opacity="0.45"/><ellipse cx="1839" cy="121" rx="16" ry="8" transform="rotate(-22 1839 121)" fill="#3a4a2e" opacity="0.45"/><ellipse cx="2322" cy="181" rx="18" ry="8" transform="rotate(-22 2322 181)" fill="#425433" opacity="0.45"/><ellipse cx="2001" cy="106" rx="13" ry="6" transform="rotate(-22 2001 106)" fill="#25321f" opacity="0.45"/><ellipse cx="2035" cy="270" rx="12" ry="6" transform="rotate(-22 2035 270)" fill="#2e3b25" opacity="0.45"/><ellipse cx="2224" cy="272" rx="20" ry="9" transform="rotate(-22 2224 272)" fill="#425433" opacity="0.45"/><ellipse cx="2122" cy="248" rx="12" ry="6" transform="rotate(-22 2122 248)" fill="#425433" opacity="0.45"/><ellipse cx="1953" cy="283" rx="17" ry="8" transform="rotate(-22 1953 283)" fill="#4a5e38" opacity="0.45"/><ellipse cx="1974" cy="153" rx="13" ry="6" transform="rotate(-22 1974 153)" fill="#425433" opacity="0.45"/><ellipse cx="2308" cy="201" rx="18" ry="9" transform="rotate(-22 2308 201)" fill="#25321f" opacity="0.45"/><ellipse cx="2220" cy="246" rx="15" ry="7" transform="rotate(-22 2220 246)" fill="#4a5e38" opacity="0.45"/><ellipse cx="2219" cy="113" rx="18" ry="8" transform="rotate(-22 2219 113)" fill="#425433" opacity="0.45"/><ellipse cx="2413" cy="123" rx="9" ry="4" transform="rotate(-22 2413 123)" fill="#34432a" opacity="0.45"/><ellipse cx="2223" cy="283" rx="16" ry="8" transform="rotate(-22 2223 283)" fill="#2e3b25" opacity="0.45"/><ellipse cx="1830" cy="193" rx="18" ry="8" transform="rotate(-22 1830 193)" fill="#3a4a2e" opacity="0.45"/><ellipse cx="2041" cy="134" rx="9" ry="4" transform="rotate(-22 2041 134)" fill="#425433" opacity="0.45"/><ellipse cx="1846" cy="211" rx="10" ry="5" transform="rotate(-22 1846 211)" fill="#25321f" opacity="0.45"/><ellipse cx="2417" cy="166" rx="17" ry="8" transform="rotate(-22 2417 166)" fill="#2e3b25" opacity="0.45"/><ellipse cx="2377" cy="187" rx="18" ry="8" transform="rotate(-22 2377 187)" fill="#2e3b25" opacity="0.45"/><ellipse cx="2053" cy="249" rx="12" ry="6" transform="rotate(-22 2053 249)" fill="#34432a" opacity="0.45"/><ellipse cx="2165" cy="191" rx="17" ry="8" transform="rotate(-22 2165 191)" fill="#25321f" opacity="0.45"/><ellipse cx="2262" cy="85" rx="18" ry="8" transform="rotate(-22 2262 85)" fill="#25321f" opacity="0.45"/><ellipse cx="2052" cy="76" rx="13" ry="6" transform="rotate(-22 2052 76)" fill="#3a4a2e" opacity="0.45"/><ellipse cx="2473" cy="281" rx="16" ry="8" transform="rotate(-22 2473 281)" fill="#4a5e38" opacity="0.45"/><ellipse cx="2062" cy="77" rx="9" ry="4" transform="rotate(-22 2062 77)" fill="#2e3b25" opacity="0.45"/><ellipse cx="2494" cy="128" rx="10" ry="5" transform="rotate(-22 2494 128)" fill="#25321f" opacity="0.45"/><ellipse cx="2073" cy="111" rx="11" ry="5" transform="rotate(-22 2073 111)" fill="#2e3b25" opacity="0.45"/><ellipse cx="2193" cy="134" rx="19" ry="9" transform="rotate(-22 2193 134)" fill="#2e3b25" opacity="0.45"/><ellipse cx="2021" cy="100" rx="16" ry="8" transform="rotate(-22 2021 100)" fill="#34432a" opacity="0.45"/><ellipse cx="2492" cy="237" rx="8" ry="4" transform="rotate(-22 2492 237)" fill="#2e3b25" opacity="0.45"/><ellipse cx="2489" cy="83" rx="9" ry="4" transform="rotate(-22 2489 83)" fill="#34432a" opacity="0.45"/><ellipse cx="2060" cy="201" rx="16" ry="7" transform="rotate(-22 2060 201)" fill="#2e3b25" opacity="0.45"/><ellipse cx="2244" cy="123" rx="10" ry="5" transform="rotate(-22 2244 123)" fill="#425433" opacity="0.45"/><ellipse cx="2094" cy="271" rx="20" ry="9" transform="rotate(-22 2094 271)" fill="#25321f" opacity="0.45"/><ellipse cx="2208" cy="251" rx="14" ry="7" transform="rotate(-22 2208 251)" fill="#425433" opacity="0.45"/><ellipse cx="2158" cy="162" rx="20" ry="9" transform="rotate(-22 2158 162)" fill="#25321f" opacity="0.45"/><ellipse cx="2207" cy="281" rx="14" ry="7" transform="rotate(-22 2207 281)" fill="#34432a" opacity="0.45"/><ellipse cx="2092" cy="122" rx="10" ry="5" transform="rotate(-22 2092 122)" fill="#2e3b25" opacity="0.45"/><ellipse cx="2541" cy="246" rx="18" ry="8" transform="rotate(-22 2541 246)" fill="#3a4a2e" opacity="0.45"/><ellipse cx="2293" cy="126" rx="8" ry="4" transform="rotate(-22 2293 126)" fill="#2e3b25" opacity="0.45"/><ellipse cx="2486" cy="172" rx="11" ry="5" transform="rotate(-22 2486 172)" fill="#2e3b25" opacity="0.45"/><ellipse cx="2253" cy="109" rx="10" ry="5" transform="rotate(-22 2253 109)" fill="#425433" opacity="0.45"/><ellipse cx="1893" cy="270" rx="18" ry="9" transform="rotate(-22 1893 270)" fill="#34432a" opacity="0.45"/><ellipse cx="2277" cy="289" rx="11" ry="5" transform="rotate(-22 2277 289)" fill="#4a5e38" opacity="0.45"/><ellipse cx="1821" cy="198" rx="10" ry="5" transform="rotate(-22 1821 198)" fill="#34432a" opacity="0.45"/><ellipse cx="2421" cy="257" rx="19" ry="9" transform="rotate(-22 2421 257)" fill="#3a4a2e" opacity="0.45"/><ellipse cx="2054" cy="207" rx="15" ry="7" transform="rotate(-22 2054 207)" fill="#2e3b25" opacity="0.45"/><ellipse cx="2321" cy="93" rx="18" ry="8" transform="rotate(-22 2321 93)" fill="#4a5e38" opacity="0.45"/><ellipse cx="2449" cy="140" rx="18" ry="8" transform="rotate(-22 2449 140)" fill="#2e3b25" opacity="0.45"/><ellipse cx="1931" cy="222" rx="18" ry="8" transform="rotate(-22 1931 222)" fill="#2e3b25" opacity="0.45"/><ellipse cx="1943" cy="192" rx="15" ry="7" transform="rotate(-22 1943 192)" fill="#34432a" opacity="0.45"/><ellipse cx="2518" cy="282" rx="12" ry="6" transform="rotate(-22 2518 282)" fill="#2e3b25" opacity="0.45"/><ellipse cx="1839" cy="141" rx="14" ry="7" transform="rotate(-22 1839 141)" fill="#25321f" opacity="0.45"/><ellipse cx="1832" cy="91" rx="10" ry="5" transform="rotate(-22 1832 91)" fill="#25321f" opacity="0.45"/><ellipse cx="2088" cy="174" rx="20" ry="10" transform="rotate(-22 2088 174)" fill="#3a4a2e" opacity="0.45"/><ellipse cx="2290" cy="78" rx="13" ry="6" transform="rotate(-22 2290 78)" fill="#25321f" opacity="0.45"/><ellipse cx="2151" cy="138" rx="9" ry="4" transform="rotate(-22 2151 138)" fill="#3a4a2e" opacity="0.45"/><ellipse cx="2448" cy="257" rx="17" ry="8" transform="rotate(-22 2448 257)" fill="#4a5e38" opacity="0.45"/><ellipse cx="1899" cy="210" rx="20" ry="9" transform="rotate(-22 1899 210)" fill="#25321f" opacity="0.45"/><ellipse cx="2013" cy="148" rx="13" ry="6" transform="rotate(-22 2013 148)" fill="#25321f" opacity="0.45"/><ellipse cx="1848" cy="116" rx="13" ry="6" transform="rotate(-22 1848 116)" fill="#3a4a2e" opacity="0.45"/><ellipse cx="2037" cy="278" rx="15" ry="7" transform="rotate(-22 2037 278)" fill="#25321f" opacity="0.45"/><ellipse cx="2279" cy="171" rx="13" ry="6" transform="rotate(-22 2279 171)" fill="#3a4a2e" opacity="0.45"/><ellipse cx="1890" cy="95" rx="17" ry="8" transform="rotate(-22 1890 95)" fill="#25321f" opacity="0.45"/><ellipse cx="1920" cy="117" rx="8" ry="4" transform="rotate(-22 1920 117)" fill="#2e3b25" opacity="0.45"/><ellipse cx="2242" cy="94" rx="11" ry="5" transform="rotate(-22 2242 94)" fill="#34432a" opacity="0.45"/><ellipse cx="2550" cy="168" rx="18" ry="8" transform="rotate(-22 2550 168)" fill="#425433" opacity="0.45"/><ellipse cx="2498" cy="167" rx="15" ry="7" transform="rotate(-22 2498 167)" fill="#25321f" opacity="0.45"/><ellipse cx="1940" cy="107" rx="17" ry="8" transform="rotate(-22 1940 107)" fill="#2e3b25" opacity="0.45"/><ellipse cx="2039" cy="164" rx="8" ry="4" transform="rotate(-22 2039 164)" fill="#2e3b25" opacity="0.45"/><ellipse cx="2258" cy="143" rx="18" ry="8" transform="rotate(-22 2258 143)" fill="#34432a" opacity="0.45"/><ellipse cx="2295" cy="206" rx="8" ry="4" transform="rotate(-22 2295 206)" fill="#425433" opacity="0.45"/><ellipse cx="1927" cy="141" rx="14" ry="6" transform="rotate(-22 1927 141)" fill="#4a5e38" opacity="0.45"/><ellipse cx="2075" cy="185" rx="18" ry="8" transform="rotate(-22 2075 185)" fill="#3a4a2e" opacity="0.45"/><ellipse cx="2257" cy="109" rx="18" ry="8" transform="rotate(-22 2257 109)" fill="#425433" opacity="0.45"/><ellipse cx="2208" cy="151" rx="14" ry="7" transform="rotate(-22 2208 151)" fill="#34432a" opacity="0.45"/><ellipse cx="2228" cy="118" rx="20" ry="9" transform="rotate(-22 2228 118)" fill="#25321f" opacity="0.45"/><ellipse cx="2331" cy="276" rx="15" ry="7" transform="rotate(-22 2331 276)" fill="#3a4a2e" opacity="0.45"/><ellipse cx="2269" cy="118" rx="9" ry="4" transform="rotate(-22 2269 118)" fill="#34432a" opacity="0.45"/><ellipse cx="2153" cy="165" rx="12" ry="6" transform="rotate(-22 2153 165)" fill="#3a4a2e" opacity="0.45"/><ellipse cx="2505" cy="153" rx="14" ry="7" transform="rotate(-22 2505 153)" fill="#3a4a2e" opacity="0.45"/><ellipse cx="2133" cy="232" rx="11" ry="5" transform="rotate(-22 2133 232)" fill="#4a5e38" opacity="0.45"/><ellipse cx="2204" cy="196" rx="15" ry="7" transform="rotate(-22 2204 196)" fill="#425433" opacity="0.45"/><ellipse cx="1911" cy="235" rx="19" ry="9" transform="rotate(-22 1911 235)" fill="#425433" opacity="0.45"/><ellipse cx="2249" cy="101" rx="19" ry="9" transform="rotate(-22 2249 101)" fill="#425433" opacity="0.45"/><ellipse cx="2314" cy="153" rx="18" ry="8" transform="rotate(-22 2314 153)" fill="#425433" opacity="0.45"/><ellipse cx="2428" cy="115" rx="15" ry="7" transform="rotate(-22 2428 115)" fill="#3a4a2e" opacity="0.45"/><ellipse cx="2134" cy="162" rx="18" ry="8" transform="rotate(-22 2134 162)" fill="#25321f" opacity="0.45"/><ellipse cx="1888" cy="238" rx="19" ry="9" transform="rotate(-22 1888 238)" fill="#2e3b25" opacity="0.45"/><ellipse cx="2260" cy="213" rx="18" ry="8" transform="rotate(-22 2260 213)" fill="#34432a" opacity="0.45"/><ellipse cx="1936" cy="176" rx="10" ry="5" transform="rotate(-22 1936 176)" fill="#2e3b25" opacity="0.45"/><ellipse cx="1872" cy="162" rx="12" ry="6" transform="rotate(-22 1872 162)" fill="#34432a" opacity="0.45"/><ellipse cx="1986" cy="197" rx="12" ry="6" transform="rotate(-22 1986 197)" fill="#25321f" opacity="0.45"/><ellipse cx="2392" cy="230" rx="18" ry="8" transform="rotate(-22 2392 230)" fill="#2e3b25" opacity="0.45"/><ellipse cx="2528" cy="204" rx="14" ry="7" transform="rotate(-22 2528 204)" fill="#2e3b25" opacity="0.45"/><ellipse cx="2479" cy="271" rx="15" ry="7" transform="rotate(-22 2479 271)" fill="#2e3b25" opacity="0.45"/><ellipse cx="2366" cy="179" rx="21" ry="10" transform="rotate(-22 2366 179)" fill="#25321f" opacity="0.45"/><ellipse cx="2099" cy="168" rx="15" ry="7" transform="rotate(-22 2099 168)" fill="#4a5e38" opacity="0.45"/><ellipse cx="2038" cy="187" rx="13" ry="6" transform="rotate(-22 2038 187)" fill="#3a4a2e" opacity="0.45"/><ellipse cx="2030" cy="87" rx="17" ry="8" transform="rotate(-22 2030 87)" fill="#2e3b25" opacity="0.45"/><ellipse cx="2351" cy="203" rx="18" ry="8" transform="rotate(-22 2351 203)" fill="#425433" opacity="0.45"/><ellipse cx="2468" cy="264" rx="11" ry="5" transform="rotate(-22 2468 264)" fill="#2e3b25" opacity="0.45"/><ellipse cx="1969" cy="263" rx="20" ry="10" transform="rotate(-22 1969 263)" fill="#2e3b25" opacity="0.45"/><ellipse cx="2322" cy="188" rx="11" ry="5" transform="rotate(-22 2322 188)" fill="#425433" opacity="0.45"/><ellipse cx="2292" cy="277" rx="19" ry="9" transform="rotate(-22 2292 277)" fill="#25321f" opacity="0.45"/><ellipse cx="2534" cy="218" rx="19" ry="9" transform="rotate(-22 2534 218)" fill="#2e3b25" opacity="0.45"/><ellipse cx="2220" cy="110" rx="16" ry="8" transform="rotate(-22 2220 110)" fill="#2e3b25" opacity="0.45"/><ellipse cx="2222" cy="269" rx="9" ry="4" transform="rotate(-22 2222 269)" fill="#34432a" opacity="0.45"/><ellipse cx="1877" cy="191" rx="20" ry="9" transform="rotate(-22 1877 191)" fill="#3a4a2e" opacity="0.45"/><ellipse cx="2011" cy="232" rx="8" ry="4" transform="rotate(-22 2011 232)" fill="#34432a" opacity="0.45"/><ellipse cx="1829" cy="267" rx="18" ry="9" transform="rotate(-22 1829 267)" fill="#2e3b25" opacity="0.45"/><ellipse cx="1890" cy="224" rx="11" ry="5" transform="rotate(-22 1890 224)" fill="#425433" opacity="0.45"/><ellipse cx="1804" cy="268" rx="12" ry="6" transform="rotate(-22 1804 268)" fill="#2e3b25" opacity="0.45"/><ellipse cx="1892" cy="242" rx="18" ry="8" transform="rotate(-22 1892 242)" fill="#34432a" opacity="0.45"/><ellipse cx="1938" cy="260" rx="17" ry="8" transform="rotate(-22 1938 260)" fill="#3a4a2e" opacity="0.45"/><ellipse cx="1932" cy="255" rx="13" ry="6" transform="rotate(-22 1932 255)" fill="#2e3b25" opacity="0.45"/><ellipse cx="1793" cy="212" rx="17" ry="8" transform="rotate(-22 1793 212)" fill="#4a5e38" opacity="0.45"/><ellipse cx="1938" cy="211" rx="10" ry="5" transform="rotate(-22 1938 211)" fill="#3a4a2e" opacity="0.45"/><ellipse cx="2287" cy="141" rx="18" ry="9" transform="rotate(-22 2287 141)" fill="#425433" opacity="0.45"/><ellipse cx="2458" cy="228" rx="10" ry="5" transform="rotate(-22 2458 228)" fill="#25321f" opacity="0.45"/><ellipse cx="2526" cy="242" rx="13" ry="6" transform="rotate(-22 2526 242)" fill="#34432a" opacity="0.45"/><ellipse cx="1954" cy="141" rx="17" ry="8" transform="rotate(-22 1954 141)" fill="#34432a" opacity="0.45"/><ellipse cx="1990" cy="230" rx="14" ry="7" transform="rotate(-22 1990 230)" fill="#425433" opacity="0.45"/><ellipse cx="2397" cy="155" rx="16" ry="8" transform="rotate(-22 2397 155)" fill="#3a4a2e" opacity="0.45"/><ellipse cx="2240" cy="124" rx="12" ry="6" transform="rotate(-22 2240 124)" fill="#34432a" opacity="0.45"/><ellipse cx="2300" cy="135" rx="16" ry="8" transform="rotate(-22 2300 135)" fill="#3a4a2e" opacity="0.45"/><ellipse cx="2141" cy="91" rx="20" ry="9" transform="rotate(-22 2141 91)" fill="#3a4a2e" opacity="0.45"/><ellipse cx="2194" cy="85" rx="16" ry="7" transform="rotate(-22 2194 85)" fill="#425433" opacity="0.45"/><ellipse cx="2199" cy="166" rx="15" ry="7" transform="rotate(-22 2199 166)" fill="#34432a" opacity="0.45"/><ellipse cx="2002" cy="237" rx="11" ry="5" transform="rotate(-22 2002 237)" fill="#425433" opacity="0.45"/><ellipse cx="2353" cy="81" rx="18" ry="8" transform="rotate(-22 2353 81)" fill="#34432a" opacity="0.45"/><ellipse cx="2550" cy="82" rx="14" ry="7" transform="rotate(-22 2550 82)" fill="#4a5e38" opacity="0.45"/><ellipse cx="2080" cy="275" rx="14" ry="7" transform="rotate(-22 2080 275)" fill="#34432a" opacity="0.45"/><ellipse cx="1830" cy="242" rx="20" ry="9" transform="rotate(-22 1830 242)" fill="#425433" opacity="0.45"/><ellipse cx="2293" cy="243" rx="15" ry="7" transform="rotate(-22 2293 243)" fill="#4a5e38" opacity="0.45"/><ellipse cx="2425" cy="211" rx="21" ry="10" transform="rotate(-22 2425 211)" fill="#25321f" opacity="0.45"/><ellipse cx="2522" cy="112" rx="18" ry="8" transform="rotate(-22 2522 112)" fill="#34432a" opacity="0.45"/><ellipse cx="1867" cy="169" rx="17" ry="8" transform="rotate(-22 1867 169)" fill="#4a5e38" opacity="0.45"/><ellipse cx="2383" cy="244" rx="18" ry="8" transform="rotate(-22 2383 244)" fill="#34432a" opacity="0.45"/><ellipse cx="1983" cy="192" rx="19" ry="9" transform="rotate(-22 1983 192)" fill="#4a5e38" opacity="0.45"/><ellipse cx="2169" cy="83" rx="16" ry="7" transform="rotate(-22 2169 83)" fill="#25321f" opacity="0.45"/><ellipse cx="1821" cy="171" rx="19" ry="9" transform="rotate(-22 1821 171)" fill="#425433" opacity="0.45"/><ellipse cx="1898" cy="79" rx="14" ry="7" transform="rotate(-22 1898 79)" fill="#2e3b25" opacity="0.45"/><ellipse cx="2173" cy="230" rx="19" ry="9" transform="rotate(-22 2173 230)" fill="#3a4a2e" opacity="0.45"/><ellipse cx="1837" cy="270" rx="15" ry="7" transform="rotate(-22 1837 270)" fill="#4a5e38" opacity="0.45"/><ellipse cx="2232" cy="230" rx="16" ry="7" transform="rotate(-22 2232 230)" fill="#3a4a2e" opacity="0.45"/><ellipse cx="2023" cy="84" rx="12" ry="6" transform="rotate(-22 2023 84)" fill="#4a5e38" opacity="0.45"/><ellipse cx="2356" cy="243" rx="18" ry="8" transform="rotate(-22 2356 243)" fill="#2e3b25" opacity="0.45"/><ellipse cx="1849" cy="251" rx="10" ry="5" transform="rotate(-22 1849 251)" fill="#425433" opacity="0.45"/><ellipse cx="1974" cy="182" rx="16" ry="8" transform="rotate(-22 1974 182)" fill="#4a5e38" opacity="0.45"/><ellipse cx="2394" cy="88" rx="13" ry="6" transform="rotate(-22 2394 88)" fill="#425433" opacity="0.45"/><ellipse cx="2325" cy="226" rx="20" ry="9" transform="rotate(-22 2325 226)" fill="#34432a" opacity="0.45"/><ellipse cx="2162" cy="239" rx="21" ry="10" transform="rotate(-22 2162 239)" fill="#34432a" opacity="0.45"/><ellipse cx="2361" cy="187" rx="21" ry="10" transform="rotate(-22 2361 187)" fill="#3a4a2e" opacity="0.45"/><ellipse cx="1968" cy="266" rx="10" ry="5" transform="rotate(-22 1968 266)" fill="#2e3b25" opacity="0.45"/><ellipse cx="2214" cy="176" rx="20" ry="9" transform="rotate(-22 2214 176)" fill="#3a4a2e" opacity="0.45"/><ellipse cx="2310" cy="229" rx="20" ry="10" transform="rotate(-22 2310 229)" fill="#4a5e38" opacity="0.45"/><ellipse cx="1959" cy="129" rx="15" ry="7" transform="rotate(-22 1959 129)" fill="#34432a" opacity="0.45"/><ellipse cx="2106" cy="93" rx="11" ry="5" transform="rotate(-22 2106 93)" fill="#425433" opacity="0.45"/><ellipse cx="2043" cy="286" rx="16" ry="7" transform="rotate(-22 2043 286)" fill="#3a4a2e" opacity="0.45"/><ellipse cx="1905" cy="201" rx="21" ry="10" transform="rotate(-22 1905 201)" fill="#25321f" opacity="0.45"/><ellipse cx="2048" cy="224" rx="19" ry="9" transform="rotate(-22 2048 224)" fill="#4a5e38" opacity="0.45"/><ellipse cx="2501" cy="113" rx="19" ry="9" transform="rotate(-22 2501 113)" fill="#34432a" opacity="0.45"/><ellipse cx="2077" cy="243" rx="11" ry="5" transform="rotate(-22 2077 243)" fill="#425433" opacity="0.45"/><ellipse cx="1972" cy="246" rx="18" ry="9" transform="rotate(-22 1972 246)" fill="#2e3b25" opacity="0.45"/><ellipse cx="1939" cy="121" rx="14" ry="7" transform="rotate(-22 1939 121)" fill="#425433" opacity="0.45"/><ellipse cx="2149" cy="180" rx="16" ry="8" transform="rotate(-22 2149 180)" fill="#34432a" opacity="0.45"/><ellipse cx="2453" cy="119" rx="13" ry="6" transform="rotate(-22 2453 119)" fill="#3a4a2e" opacity="0.45"/><ellipse cx="1817" cy="134" rx="20" ry="9" transform="rotate(-22 1817 134)" fill="#4a5e38" opacity="0.45"/><ellipse cx="1794" cy="114" rx="11" ry="5" transform="rotate(-22 1794 114)" fill="#2e3b25" opacity="0.45"/><ellipse cx="2223" cy="215" rx="11" ry="5" transform="rotate(-22 2223 215)" fill="#3a4a2e" opacity="0.45"/><ellipse cx="2062" cy="108" rx="20" ry="9" transform="rotate(-22 2062 108)" fill="#425433" opacity="0.45"/><ellipse cx="1887" cy="127" rx="19" ry="9" transform="rotate(-22 1887 127)" fill="#3a4a2e" opacity="0.45"/><ellipse cx="1796" cy="144" rx="13" ry="6" transform="rotate(-22 1796 144)" fill="#3a4a2e" opacity="0.45"/><ellipse cx="2447" cy="157" rx="11" ry="5" transform="rotate(-22 2447 157)" fill="#4a5e38" opacity="0.45"/><ellipse cx="2302" cy="140" rx="16" ry="7" transform="rotate(-22 2302 140)" fill="#2e3b25" opacity="0.45"/><ellipse cx="1812" cy="107" rx="16" ry="7" transform="rotate(-22 1812 107)" fill="#3a4a2e" opacity="0.45"/><ellipse cx="1943" cy="163" rx="14" ry="7" transform="rotate(-22 1943 163)" fill="#25321f" opacity="0.45"/><ellipse cx="1886" cy="227" rx="11" ry="5" transform="rotate(-22 1886 227)" fill="#25321f" opacity="0.45"/><ellipse cx="2132" cy="156" rx="19" ry="9" transform="rotate(-22 2132 156)" fill="#425433" opacity="0.45"/><ellipse cx="2197" cy="172" rx="10" ry="5" transform="rotate(-22 2197 172)" fill="#4a5e38" opacity="0.45"/><ellipse cx="2455" cy="124" rx="12" ry="6" transform="rotate(-22 2455 124)" fill="#425433" opacity="0.45"/><ellipse cx="2257" cy="105" rx="19" ry="9" transform="rotate(-22 2257 105)" fill="#25321f" opacity="0.45"/><ellipse cx="2272" cy="197" rx="18" ry="9" transform="rotate(-22 2272 197)" fill="#25321f" opacity="0.45"/><ellipse cx="2013" cy="219" rx="20" ry="9" transform="rotate(-22 2013 219)" fill="#34432a" opacity="0.45"/><ellipse cx="2215" cy="151" rx="10" ry="4" transform="rotate(-22 2215 151)" fill="#425433" opacity="0.45"/><ellipse cx="1963" cy="211" rx="9" ry="4" transform="rotate(-22 1963 211)" fill="#2e3b25" opacity="0.45"/><ellipse cx="1873" cy="181" rx="14" ry="7" transform="rotate(-22 1873 181)" fill="#425433" opacity="0.45"/><ellipse cx="2002" cy="226" rx="11" ry="5" transform="rotate(-22 2002 226)" fill="#2e3b25" opacity="0.45"/><ellipse cx="1937" cy="240" rx="12" ry="6" transform="rotate(-22 1937 240)" fill="#25321f" opacity="0.45"/><ellipse cx="1967" cy="95" rx="12" ry="6" transform="rotate(-22 1967 95)" fill="#2e3b25" opacity="0.45"/><ellipse cx="2407" cy="178" rx="11" ry="5" transform="rotate(-22 2407 178)" fill="#4a5e38" opacity="0.45"/><ellipse cx="2021" cy="272" rx="20" ry="9" transform="rotate(-22 2021 272)" fill="#3a4a2e" opacity="0.45"/><ellipse cx="2064" cy="89" rx="13" ry="6" transform="rotate(-22 2064 89)" fill="#3a4a2e" opacity="0.45"/><ellipse cx="2074" cy="257" rx="12" ry="6" transform="rotate(-22 2074 257)" fill="#25321f" opacity="0.45"/><ellipse cx="2034" cy="129" rx="8" ry="4" transform="rotate(-22 2034 129)" fill="#425433" opacity="0.45"/><ellipse cx="2032" cy="155" rx="12" ry="6" transform="rotate(-22 2032 155)" fill="#25321f" opacity="0.45"/><ellipse cx="2472" cy="213" rx="13" ry="6" transform="rotate(-22 2472 213)" fill="#425433" opacity="0.45"/><ellipse cx="2525" cy="153" rx="15" ry="7" transform="rotate(-22 2525 153)" fill="#34432a" opacity="0.45"/><ellipse cx="2382" cy="210" rx="16" ry="7" transform="rotate(-22 2382 210)" fill="#2e3b25" opacity="0.45"/><ellipse cx="2258" cy="89" rx="9" ry="4" transform="rotate(-22 2258 89)" fill="#2e3b25" opacity="0.45"/><ellipse cx="2466" cy="157" rx="20" ry="9" transform="rotate(-22 2466 157)" fill="#3a4a2e" opacity="0.45"/><ellipse cx="2407" cy="222" rx="11" ry="5" transform="rotate(-22 2407 222)" fill="#2e3b25" opacity="0.45"/><ellipse cx="2061" cy="285" rx="10" ry="5" transform="rotate(-22 2061 285)" fill="#34432a" opacity="0.45"/><ellipse cx="1990" cy="131" rx="11" ry="5" transform="rotate(-22 1990 131)" fill="#4a5e38" opacity="0.45"/><ellipse cx="1781" cy="192" rx="13" ry="6" transform="rotate(-22 1781 192)" fill="#34432a" opacity="0.45"/><ellipse cx="2207" cy="258" rx="18" ry="8" transform="rotate(-22 2207 258)" fill="#3a4a2e" opacity="0.45"/><ellipse cx="2267" cy="196" rx="19" ry="9" transform="rotate(-22 2267 196)" fill="#425433" opacity="0.45"/><ellipse cx="1986" cy="97" rx="8" ry="4" transform="rotate(-22 1986 97)" fill="#25321f" opacity="0.45"/><ellipse cx="1942" cy="160" rx="10" ry="5" transform="rotate(-22 1942 160)" fill="#34432a" opacity="0.45"/><ellipse cx="2423" cy="109" rx="16" ry="7" transform="rotate(-22 2423 109)" fill="#2e3b25" opacity="0.45"/><ellipse cx="2408" cy="138" rx="13" ry="6" transform="rotate(-22 2408 138)" fill="#425433" opacity="0.45"/><ellipse cx="2364" cy="190" rx="11" ry="5" transform="rotate(-22 2364 190)" fill="#34432a" opacity="0.45"/><ellipse cx="2063" cy="227" rx="20" ry="9" transform="rotate(-22 2063 227)" fill="#25321f" opacity="0.45"/><ellipse cx="1878" cy="89" rx="9" ry="4" transform="rotate(-22 1878 89)" fill="#3a4a2e" opacity="0.45"/><ellipse cx="2471" cy="142" rx="19" ry="9" transform="rotate(-22 2471 142)" fill="#4a5e38" opacity="0.45"/><ellipse cx="2382" cy="178" rx="10" ry="5" transform="rotate(-22 2382 178)" fill="#2e3b25" opacity="0.45"/><ellipse cx="2458" cy="86" rx="11" ry="5" transform="rotate(-22 2458 86)" fill="#4a5e38" opacity="0.45"/><ellipse cx="2357" cy="224" rx="11" ry="5" transform="rotate(-22 2357 224)" fill="#25321f" opacity="0.45"/><ellipse cx="1976" cy="229" rx="12" ry="6" transform="rotate(-22 1976 229)" fill="#425433" opacity="0.45"/><ellipse cx="2448" cy="119" rx="15" ry="7" transform="rotate(-22 2448 119)" fill="#34432a" opacity="0.45"/><ellipse cx="2223" cy="165" rx="17" ry="8" transform="rotate(-22 2223 165)" fill="#4a5e38" opacity="0.45"/><ellipse cx="2357" cy="133" rx="10" ry="5" transform="rotate(-22 2357 133)" fill="#34432a" opacity="0.45"/><ellipse cx="2074" cy="219" rx="11" ry="5" transform="rotate(-22 2074 219)" fill="#34432a" opacity="0.45"/><ellipse cx="2540" cy="176" rx="17" ry="8" transform="rotate(-22 2540 176)" fill="#34432a" opacity="0.45"/><ellipse cx="1989" cy="133" rx="11" ry="5" transform="rotate(-22 1989 133)" fill="#25321f" opacity="0.45"/><ellipse cx="2089" cy="276" rx="21" ry="10" transform="rotate(-22 2089 276)" fill="#3a4a2e" opacity="0.45"/><ellipse cx="1903" cy="289" rx="19" ry="9" transform="rotate(-22 1903 289)" fill="#34432a" opacity="0.45"/><ellipse cx="2003" cy="232" rx="21" ry="10" transform="rotate(-22 2003 232)" fill="#3a4a2e" opacity="0.45"/><ellipse cx="2096" cy="270" rx="19" ry="9" transform="rotate(-22 2096 270)" fill="#2e3b25" opacity="0.45"/><ellipse cx="1914" cy="89" rx="14" ry="6" transform="rotate(-22 1914 89)" fill="#25321f" opacity="0.45"/><ellipse cx="2001" cy="159" rx="16" ry="7" transform="rotate(-22 2001 159)" fill="#34432a" opacity="0.45"/><ellipse cx="2545" cy="159" rx="17" ry="8" transform="rotate(-22 2545 159)" fill="#4a5e38" opacity="0.45"/><ellipse cx="2000" cy="261" rx="14" ry="6" transform="rotate(-22 2000 261)" fill="#3a4a2e" opacity="0.45"/><ellipse cx="2214" cy="268" rx="19" ry="9" transform="rotate(-22 2214 268)" fill="#2e3b25" opacity="0.45"/><ellipse cx="1874" cy="145" rx="8" ry="4" transform="rotate(-22 1874 145)" fill="#4a5e38" opacity="0.45"/><ellipse cx="2224" cy="134" rx="13" ry="6" transform="rotate(-22 2224 134)" fill="#425433" opacity="0.45"/><ellipse cx="1957" cy="179" rx="13" ry="6" transform="rotate(-22 1957 179)" fill="#425433" opacity="0.45"/><ellipse cx="2216" cy="108" rx="8" ry="4" transform="rotate(-22 2216 108)" fill="#425433" opacity="0.45"/><ellipse cx="2303" cy="76" rx="12" ry="6" transform="rotate(-22 2303 76)" fill="#34432a" opacity="0.45"/><ellipse cx="2558" cy="118" rx="19" ry="9" transform="rotate(-22 2558 118)" fill="#2e3b25" opacity="0.45"/><g fill="none" stroke="#0b120a" stroke-width="5.2" stroke-linecap="round" opacity="0.9"><path d="M1780,-595 L1798,-600 L1816,-607 L1834,-615"/><path d="M1862,-625 L1878,-631 L1895,-636 L1911,-643 L1928,-646 L1945,-653 L1961,-657 L1978,-667 L1994,-669 L2011,-675"/><path d="M2036,-687 L2052,-694 L2069,-698 L2085,-706 L2102,-710 L2118,-714 L2134,-724 L2151,-728 L2167,-732"/><path d="M2184,-737 L2199,-745 L2215,-752 L2231,-756 L2247,-761 L2263,-768"/><path d="M2296,-786 L2312,-792 L2328,-803 L2344,-808 L2360,-818 L2377,-829 L2393,-836 L2409,-844 L2425,-850 L2442,-859 L2458,-868"/><path d="M2498,-887 L2516,-897 L2533,-907 L2551,-913 L2569,-922 L2587,-933 L2605,-942 L2623,-951"/><path d="M1780,-572 L1796,-579 L1813,-584 L1829,-591 L1846,-596"/><path d="M1860,-601 L1877,-609 L1895,-615 L1912,-617"/><path d="M1947,-634 L1965,-640 L1982,-647 L2000,-650 L2018,-657 L2035,-664 L2053,-670 L2071,-674 L2088,-683"/><path d="M2121,-693 L2139,-703 L2156,-707 L2174,-711 L2191,-718 L2208,-724 L2226,-732 L2243,-741 L2261,-745 L2278,-754"/><path d="M2315,-773 L2329,-781 L2343,-788 L2358,-793 L2372,-802"/><path d="M2411,-823 L2429,-829 L2447,-838 L2464,-848 L2482,-857 L2500,-864 L2518,-875 L2536,-884 L2554,-892 L2572,-904"/><path d="M1780,-549 L1796,-556 L1812,-563 L1829,-569 L1845,-573 L1861,-578 L1877,-585 L1893,-591"/><path d="M1921,-600 L1936,-605 L1950,-613 L1965,-613 L1979,-620 L1994,-624"/><path d="M2005,-628 L2020,-634 L2034,-642 L2049,-648 L2063,-653 L2078,-657"/><path d="M2094,-664 L2109,-668 L2123,-672 L2138,-678 L2152,-684 L2166,-691"/><path d="M2188,-694 L2204,-703 L2219,-709 L2235,-713 L2250,-717 L2266,-724 L2281,-736 L2297,-742"/><path d="M2307,-744 L2324,-757 L2341,-761 L2358,-771 L2375,-782 L2392,-790 L2410,-796 L2427,-804 L2444,-817 L2461,-825"/><path d="M2482,-837 L2500,-842 L2518,-852 L2535,-861 L2553,-872 L2571,-878 L2588,-887 L2606,-897"/><path d="M1780,-526 L1797,-530 L1813,-539 L1830,-543 L1847,-549 L1863,-555 L1880,-560 L1896,-568 L1913,-576 L1930,-582 L1946,-585"/><path d="M1960,-594 L1977,-599 L1994,-605 L2011,-611 L2028,-615 L2045,-623 L2062,-631 L2080,-637"/><path d="M2094,-638 L2111,-644 L2128,-653 L2145,-660 L2162,-665 L2179,-671 L2196,-676 L2213,-684 L2230,-690"/><path d="M2242,-693 L2258,-700 L2273,-707 L2288,-717 L2304,-724"/><path d="M2340,-743 L2356,-748 L2373,-758 L2389,-765 L2405,-775 L2422,-782 L2438,-791 L2455,-797 L2471,-807 L2488,-815 L2504,-822"/><path d="M2533,-836 L2549,-848 L2566,-853 L2582,-864 L2599,-871 L2615,-878"/><path d="M1780,-505 L1796,-512 L1812,-514 L1828,-520 L1844,-529 L1860,-532 L1877,-539"/><path d="M1891,-546 L1907,-552 L1923,-555 L1940,-560 L1956,-565 L1972,-571 L1988,-577 L2004,-584 L2020,-592 L2036,-598"/><path d="M2050,-601 L2065,-606 L2081,-615 L2097,-619 L2113,-626 L2129,-628 L2144,-636 L2160,-642"/><path d="M2186,-652 L2201,-653 L2217,-661 L2233,-666 L2249,-671"/><path d="M2273,-685 L2290,-692 L2308,-702 L2325,-713 L2342,-718 L2359,-730 L2376,-734 L2393,-744"/><path d="M2427,-761 L2444,-768 L2462,-779 L2480,-786 L2497,-797 L2515,-807 L2532,-815 L2550,-824 L2568,-830 L2585,-839"/><path d="M1780,-481 L1797,-485 L1813,-492 L1830,-501 L1846,-503 L1863,-511 L1880,-520"/><path d="M1895,-523 L1911,-530 L1928,-535 L1944,-542 L1960,-546 L1976,-552 L1992,-555 L2008,-563 L2025,-571"/><path d="M2036,-572 L2053,-578 L2069,-586 L2086,-593 L2103,-597"/><path d="M2116,-600 L2134,-608 L2152,-617 L2169,-620 L2187,-629 L2205,-633 L2223,-643 L2240,-646"/><path d="M2260,-655 L2277,-665 L2294,-673 L2311,-679 L2329,-690 L2346,-697"/><path d="M2378,-716 L2395,-724 L2411,-731 L2427,-738 L2443,-748 L2459,-753 L2475,-765"/><path d="M2515,-785 L2532,-789 L2548,-798 L2565,-810 L2582,-816 L2599,-826 L2615,-833 L2632,-843"/><path d="M1780,-460 L1796,-464 L1812,-471 L1828,-478 L1844,-483 L1861,-488 L1877,-495 L1893,-500 L1909,-506 L1925,-510"/><path d="M1955,-524 L1972,-529 L1988,-532 L2005,-540 L2022,-546 L2039,-551 L2056,-559 L2073,-564 L2090,-573"/><path d="M2120,-583 L2136,-585 L2151,-592 L2167,-596 L2182,-605 L2198,-608 L2213,-617"/><path d="M2227,-619 L2243,-626 L2259,-631 L2275,-642 L2291,-648"/><path d="M2325,-665 L2341,-674 L2358,-684 L2374,-690 L2390,-700 L2407,-707 L2423,-716 L2439,-724 L2456,-733 L2472,-741 L2488,-749"/><path d="M2505,-753 L2522,-764 L2539,-773 L2556,-783 L2572,-791 L2589,-799"/><path d="M1780,-436 L1798,-444 L1815,-449 L1833,-454 L1851,-462 L1869,-469 L1886,-474 L1904,-479"/><path d="M1938,-496 L1956,-499 L1974,-508 L1991,-511 L2009,-518"/><path d="M2043,-529 L2060,-536 L2077,-542 L2094,-547 L2112,-557 L2129,-560 L2146,-567"/><path d="M2177,-578 L2193,-584 L2209,-593 L2225,-595 L2242,-605 L2258,-611 L2274,-620"/><path d="M2313,-638 L2330,-646 L2347,-652 L2364,-661 L2381,-673"/><path d="M2412,-687 L2427,-693 L2443,-702 L2458,-710 L2474,-718 L2490,-724 L2505,-732 L2521,-742"/><path d="M2529,-745 L2546,-754 L2562,-760 L2579,-769 L2596,-779 L2612,-786 L2629,-795 L2645,-802 L2662,-813 L2678,-819"/><path d="M1780,-414 L1795,-419 L1810,-426 L1826,-431 L1841,-438"/><path d="M1878,-451 L1895,-457 L1911,-463 L1927,-465 L1943,-475 L1960,-480 L1976,-485 L1992,-490 L2008,-497 L2025,-504"/><path d="M2039,-506 L2056,-513 L2074,-522 L2092,-524 L2110,-533 L2127,-541 L2145,-546 L2163,-552"/><path d="M2185,-561 L2202,-567 L2219,-573 L2235,-580 L2252,-582 L2269,-591 L2285,-600 L2302,-610 L2319,-619 L2335,-627 L2352,-636"/><path d="M2392,-655 L2407,-664 L2423,-668 L2439,-676 L2455,-685 L2470,-692 L2486,-699"/><path d="M2497,-709 L2513,-713 L2528,-722 L2544,-731 L2559,-738 L2575,-747 L2590,-756"/><path d="M1780,-389 L1796,-399 L1812,-404 L1828,-407 L1845,-415 L1861,-422 L1877,-428 L1893,-431 L1909,-440 L1925,-443"/><path d="M1956,-454 L1973,-462 L1990,-468 L2007,-472 L2025,-479 L2042,-486 L2059,-492 L2076,-497"/><path d="M2095,-504 L2111,-512 L2126,-515 L2141,-520 L2156,-529 L2171,-532"/><path d="M2198,-541 L2216,-549 L2234,-557 L2252,-559 L2269,-568 L2287,-581 L2305,-589 L2323,-598 L2341,-608 L2359,-613"/><path d="M2388,-630 L2405,-640 L2422,-645 L2438,-653 L2455,-661"/><path d="M2493,-682 L2509,-689 L2525,-701 L2542,-706 L2558,-714 L2575,-721 L2591,-729 L2608,-742"/><path d="M1780,-368 L1795,-377 L1809,-377 L1824,-383 L1839,-392 L1853,-393"/><path d="M1869,-402 L1885,-408 L1900,-412 L1915,-416 L1930,-425 L1946,-429"/><path d="M1979,-439 L1997,-445 L2014,-453 L2032,-458 L2049,-467 L2067,-474 L2085,-477 L2102,-487"/><path d="M2139,-499 L2155,-505 L2171,-507 L2187,-516 L2202,-523"/><path d="M2216,-524 L2234,-531 L2251,-538 L2269,-550 L2286,-557 L2304,-563 L2321,-575 L2339,-583"/><path d="M2354,-592 L2370,-599 L2385,-604 L2400,-615 L2416,-623 L2431,-629 L2446,-635"/><path d="M2471,-648 L2487,-654 L2502,-665 L2517,-673 L2533,-681 L2548,-687 L2563,-696"/><path d="M1780,-346 L1794,-351 L1809,-356 L1823,-362 L1838,-367 L1852,-375"/><path d="M1870,-379 L1885,-383 L1899,-391 L1914,-397 L1928,-401"/><path d="M1939,-404 L1956,-410 L1972,-418 L1989,-421 L2005,-429 L2022,-433 L2038,-442 L2055,-448 L2071,-450"/><path d="M2111,-465 L2128,-473 L2145,-475 L2161,-485 L2178,-488 L2195,-495 L2211,-500"/><path d="M2222,-503 L2238,-514 L2255,-521 L2272,-524 L2288,-535 L2305,-545 L2322,-554 L2338,-562 L2355,-568 L2372,-578 L2389,-586"/><path d="M2401,-590 L2418,-600 L2434,-610 L2451,-617 L2467,-623"/><path d="M2483,-630 L2500,-640 L2517,-650 L2534,-656 L2550,-664 L2567,-676 L2584,-681 L2601,-689 L2618,-699 L2635,-707"/><path d="M1780,-324 L1798,-332 L1815,-337 L1833,-342 L1851,-350 L1869,-354"/><path d="M1885,-361 L1900,-370 L1915,-371 L1931,-376 L1946,-382"/><path d="M1976,-392 L1990,-399 L2005,-407 L2019,-410 L2034,-413 L2048,-420"/><path d="M2067,-427 L2084,-436 L2101,-441 L2118,-446 L2135,-451 L2152,-458 L2169,-464 L2186,-470 L2203,-477 L2220,-485 L2237,-489"/><path d="M2271,-506 L2288,-512 L2304,-518 L2321,-528 L2337,-539 L2354,-548 L2370,-554 L2387,-563 L2403,-568 L2420,-579 L2437,-585"/><path d="M2463,-601 L2479,-607 L2496,-618 L2512,-626 L2529,-632 L2545,-640 L2562,-650 L2578,-657 L2595,-667"/><path d="M1780,-301 L1796,-306 L1811,-311 L1827,-318 L1842,-324 L1858,-329 L1873,-333 L1889,-339"/><path d="M1927,-354 L1944,-361 L1962,-366 L1979,-374 L1997,-379 L2014,-385"/><path d="M2023,-391 L2041,-394 L2058,-400 L2076,-407 L2094,-414 L2112,-420 L2130,-428"/><path d="M2154,-436 L2171,-444 L2188,-449 L2205,-454 L2221,-463 L2238,-468 L2255,-476 L2272,-481 L2289,-492 L2306,-500"/><path d="M2315,-504 L2332,-514 L2350,-522 L2367,-528 L2384,-540 L2401,-547 L2418,-557 L2435,-565"/><path d="M2471,-582 L2488,-589 L2505,-598 L2522,-605 L2539,-614"/><path d="M1780,-280 L1797,-284 L1815,-293 L1832,-299 L1849,-303 L1866,-311 L1884,-317"/><path d="M1920,-329 L1936,-334 L1952,-343 L1968,-345 L1984,-350"/><path d="M2013,-362 L2031,-368 L2048,-376 L2066,-380 L2084,-387 L2102,-392 L2119,-403"/><path d="M2136,-408 L2153,-414 L2170,-419 L2186,-424 L2203,-433 L2220,-436"/><path d="M2249,-447 L2267,-457 L2284,-466 L2302,-474 L2319,-481 L2336,-494 L2354,-501 L2371,-509 L2389,-516"/><path d="M2404,-528 L2421,-532 L2438,-542 L2455,-548 L2472,-560 L2489,-567 L2506,-578 L2523,-586 L2539,-593"/><path d="M1780,-259 L1797,-264 L1813,-267 L1830,-276 L1846,-281 L1863,-289 L1880,-295 L1896,-298 L1913,-304"/><path d="M1931,-313 L1948,-319 L1966,-325 L1983,-327 L2001,-338 L2019,-344 L2036,-348"/><path d="M2046,-352 L2064,-360 L2081,-363 L2099,-372 L2116,-378 L2134,-384 L2151,-391 L2169,-394 L2187,-404"/><path d="M2222,-416 L2239,-423 L2256,-427 L2273,-436 L2290,-444 L2307,-456 L2324,-463 L2341,-471 L2358,-480 L2375,-488"/><path d="M2409,-505 L2427,-512 L2445,-523 L2463,-532 L2480,-543 L2498,-552 L2516,-560 L2534,-565 L2552,-576 L2570,-587"/><path d="M1780,-234 L1796,-238 L1812,-247 L1828,-250 L1844,-259 L1860,-265 L1876,-271 L1892,-272 L1908,-278 L1924,-288"/><path d="M1941,-292 L1958,-301 L1976,-305 L1993,-310 L2011,-315 L2029,-321 L2046,-330 L2064,-335 L2081,-344 L2099,-347"/><path d="M2115,-355 L2132,-363 L2149,-366 L2166,-374 L2183,-379 L2200,-386 L2217,-392 L2234,-396 L2251,-403 L2268,-412"/><path d="M2283,-419 L2299,-425 L2315,-434 L2331,-441 L2347,-451 L2362,-460"/><path d="M2371,-463 L2388,-472 L2405,-479 L2421,-487 L2438,-499 L2455,-508 L2471,-516 L2488,-523 L2505,-532 L2521,-538"/><path d="M2536,-548 L2553,-557 L2570,-561 L2587,-571 L2604,-582 L2621,-588 L2638,-597"/><path d="M1780,-211 L1796,-217 L1812,-222 L1828,-227 L1845,-233 L1861,-243 L1877,-248 L1893,-254 L1909,-257"/><path d="M1936,-268 L1953,-275 L1970,-281 L1987,-286 L2004,-294 L2021,-298 L2038,-303 L2055,-310 L2072,-317 L2089,-321 L2106,-330"/><path d="M2127,-337 L2143,-340 L2158,-349 L2173,-351 L2188,-357"/><path d="M2210,-369 L2226,-373 L2242,-377 L2257,-386 L2273,-390 L2289,-399 L2304,-409 L2320,-416"/><path d="M2343,-426 L2359,-436 L2376,-445 L2392,-454 L2408,-458 L2424,-467"/><path d="M2458,-487 L2474,-491 L2490,-501 L2506,-506 L2521,-517 L2537,-522 L2553,-531 L2569,-540"/><path d="M1780,-187 L1798,-194 L1815,-204 L1833,-210 L1851,-215 L1868,-220 L1886,-227 L1903,-236 L1921,-241 L1939,-246"/><path d="M1948,-249 L1965,-257 L1982,-263 L1999,-269"/><path d="M2030,-279 L2047,-285 L2064,-291 L2081,-298 L2098,-304"/><path d="M2131,-314 L2149,-321 L2167,-330 L2184,-337 L2202,-339 L2220,-347 L2238,-356 L2256,-363"/><path d="M2265,-365 L2279,-372 L2293,-381 L2307,-388 L2322,-393"/><path d="M2341,-402 L2359,-411 L2377,-420 L2394,-429 L2412,-442 L2430,-446"/><path d="M2463,-465 L2480,-474 L2497,-481 L2513,-489 L2530,-499 L2547,-506"/><path d="M1780,-165 L1796,-174 L1812,-180 L1828,-183 L1844,-188 L1860,-196 L1876,-201 L1892,-208 L1908,-211 L1925,-219"/><path d="M1960,-233 L1978,-238 L1996,-243 L2014,-249 L2032,-256 L2049,-262 L2067,-269"/><path d="M2105,-285 L2123,-290 L2141,-295 L2158,-303"/><path d="M2183,-310 L2200,-318 L2216,-321 L2232,-329 L2248,-335 L2264,-345 L2280,-352"/><path d="M2310,-364 L2324,-374 L2338,-382 L2352,-388 L2366,-396"/><path d="M2404,-415 L2421,-422 L2438,-430 L2455,-440 L2472,-449 L2490,-457"/><path d="M2501,-463 L2517,-469 L2533,-476 L2550,-484 L2566,-492 L2583,-502 L2599,-509 L2616,-520 L2632,-525"/><path d="M1780,-144 L1796,-150 L1813,-153 L1829,-160 L1845,-166 L1862,-175"/><path d="M1879,-179 L1896,-188 L1912,-192 L1928,-197 L1944,-204 L1960,-207 L1976,-214"/><path d="M1999,-221 L2015,-231 L2031,-234 L2046,-241 L2062,-245 L2078,-250 L2094,-255"/><path d="M2108,-262 L2124,-269 L2140,-274 L2155,-279 L2171,-287"/><path d="M2188,-289 L2204,-296 L2219,-304 L2235,-306 L2250,-312 L2266,-320 L2281,-328"/><path d="M2303,-338 L2320,-348 L2337,-357 L2354,-367 L2371,-373 L2388,-384 L2405,-389 L2422,-400 L2438,-407 L2455,-414 L2472,-424"/><path d="M2506,-439 L2523,-449 L2540,-461 L2557,-466 L2574,-473 L2591,-483 L2607,-493 L2624,-501 L2641,-510 L2658,-515 L2675,-526"/><path d="M1780,-123 L1794,-125 L1809,-133 L1823,-139 L1838,-143 L1852,-146"/><path d="M1883,-158 L1899,-163 L1915,-168 L1931,-175 L1947,-179 L1963,-186 L1980,-191 L1996,-198 L2012,-206 L2028,-213"/><path d="M2036,-212 L2053,-221 L2069,-224 L2086,-231 L2102,-238 L2119,-243 L2135,-250 L2152,-255 L2168,-264"/><path d="M2195,-272 L2212,-279 L2228,-284 L2245,-288 L2261,-297 L2278,-302"/><path d="M2307,-318 L2323,-326 L2339,-334 L2355,-341 L2371,-352"/><path d="M2380,-355 L2396,-366 L2413,-373 L2429,-382 L2446,-389 L2462,-396 L2479,-405"/><path d="M2499,-415 L2516,-423 L2532,-433 L2548,-442 L2564,-447 L2581,-455 L2597,-464 L2613,-473 L2630,-481 L2646,-491 L2662,-497"/><path d="M1780,-100 L1796,-106 L1813,-111 L1829,-117 L1846,-124"/><path d="M1865,-130 L1882,-138 L1900,-143 L1917,-148 L1934,-153 L1951,-162 L1969,-166 L1986,-175 L2003,-178 L2020,-187"/><path d="M2039,-191 L2056,-198 L2073,-206 L2090,-212 L2107,-217 L2124,-223 L2140,-231 L2157,-235 L2174,-243 L2191,-245 L2208,-252"/><path d="M2229,-259 L2245,-268 L2261,-276 L2277,-282 L2293,-287 L2308,-300 L2324,-304"/><path d="M2362,-323 L2379,-331 L2396,-342 L2413,-351 L2429,-357 L2446,-368 L2463,-373"/><path d="M2499,-395 L2517,-401 L2535,-412 L2553,-421 L2571,-430 L2589,-435 L2607,-448 L2624,-454 L2642,-464 L2660,-473"/><path d="M1780,-78 L1795,-82 L1810,-89 L1826,-93 L1841,-97 L1856,-103 L1871,-108"/><path d="M1897,-117 L1915,-126 L1932,-133 L1949,-138 L1967,-145 L1984,-150 L2001,-157 L2019,-162 L2036,-171 L2053,-173"/><path d="M2082,-185 L2099,-193 L2116,-195 L2133,-204 L2150,-211 L2167,-215 L2184,-220"/><path d="M2193,-225 L2208,-230 L2222,-235 L2237,-242 L2251,-247 L2266,-253"/><path d="M2297,-268 L2313,-277 L2329,-285 L2345,-293 L2361,-301"/><path d="M2370,-304 L2387,-313 L2404,-324 L2421,-331 L2438,-340 L2455,-347 L2472,-358"/><path d="M2498,-368 L2513,-376 L2529,-385 L2545,-393 L2561,-399 L2576,-408"/><path d="M1780,-54 L1796,-59 L1813,-66 L1829,-70 L1845,-77"/><path d="M1859,-83 L1876,-88 L1892,-95 L1908,-98 L1925,-108 L1941,-111 L1957,-119 L1974,-125 L1990,-130"/><path d="M2025,-144 L2041,-147 L2057,-154 L2074,-162 L2090,-165 L2106,-170 L2123,-179 L2139,-184 L2155,-191 L2171,-194 L2188,-199"/><path d="M2225,-214 L2241,-221 L2257,-227 L2273,-234 L2288,-244 L2304,-252 L2320,-258"/><path d="M2338,-268 L2356,-276 L2373,-286 L2390,-294 L2407,-300 L2424,-311 L2442,-317"/><path d="M2455,-325 L2471,-334 L2487,-343 L2504,-352 L2520,-356 L2537,-365"/><path d="M2547,-372 L2565,-382 L2582,-387 L2600,-397 L2617,-405 L2635,-415 L2652,-423 L2670,-435"/><path d="M1780,-31 L1797,-35 L1814,-41 L1830,-50 L1847,-55 L1864,-64 L1881,-69 L1897,-76 L1914,-79"/><path d="M1932,-84 L1948,-91 L1964,-100 L1980,-105 L1996,-111 L2012,-117 L2028,-123"/><path d="M2064,-134 L2082,-142 L2099,-147 L2116,-154 L2133,-156 L2151,-166 L2168,-173 L2185,-176 L2202,-184"/><path d="M2213,-185 L2229,-194 L2246,-200 L2263,-205 L2279,-214 L2296,-222 L2312,-230 L2329,-242"/><path d="M2353,-253 L2370,-259 L2388,-267 L2405,-279 L2422,-289 L2440,-296"/><path d="M2453,-303 L2468,-307 L2482,-314 L2496,-322 L2511,-332"/><path d="M2546,-348 L2562,-358 L2578,-366 L2594,-372 L2610,-379 L2626,-388 L2642,-398 L2658,-406"/><path d="M1780,-7 L1797,-17 L1814,-24 L1831,-27 L1849,-35 L1866,-41 L1883,-46 L1900,-50 L1917,-58 L1934,-66"/><path d="M1945,-68 L1960,-75 L1976,-81 L1991,-85 L2006,-90 L2022,-94"/><path d="M2056,-107 L2072,-115 L2089,-121 L2105,-123 L2121,-130 L2137,-136 L2153,-145 L2169,-150 L2185,-155 L2201,-160"/><path d="M2218,-168 L2235,-174 L2251,-178 L2268,-189 L2284,-196 L2301,-203 L2318,-210 L2334,-222 L2351,-226"/><path d="M2378,-241 L2393,-248 L2409,-258 L2425,-265 L2441,-273 L2457,-280 L2472,-289 L2488,-299 L2504,-307"/><path d="M2534,-319 L2551,-326 L2567,-335 L2583,-346 L2600,-353 L2616,-363 L2632,-369 L2649,-376 L2665,-386 L2681,-396 L2697,-402"/><path d="M1780,14 L1797,6 L1815,1 L1832,-5 L1850,-13 L1867,-18 L1885,-25 L1902,-32 L1920,-39"/><path d="M1948,-46 L1965,-55 L1983,-60 L2001,-65 L2018,-74 L2036,-78 L2053,-85 L2071,-93 L2089,-97"/><path d="M2106,-105 L2124,-111 L2141,-119 L2159,-123 L2177,-132 L2194,-137"/><path d="M2212,-142 L2228,-146 L2244,-152 L2260,-160 L2277,-167"/><path d="M2304,-181 L2321,-191 L2337,-198 L2354,-206 L2370,-214 L2387,-222 L2403,-231 L2420,-242 L2436,-251 L2453,-259"/><path d="M2479,-270 L2497,-281 L2515,-289 L2533,-297 L2551,-306 L2569,-316 L2586,-322 L2604,-334"/><path d="M1780,37 L1796,32 L1812,23 L1828,18 L1844,14 L1860,7 L1876,-1 L1892,-6 L1908,-10"/><path d="M1933,-19 L1951,-25 L1968,-32 L1985,-36 L2003,-46 L2020,-50 L2037,-56 L2055,-63"/><path d="M2084,-72 L2101,-78 L2118,-86 L2135,-92 L2153,-97 L2170,-105 L2187,-111"/><path d="M2224,-126 L2239,-128 L2254,-133 L2270,-145 L2285,-152"/><path d="M2320,-169 L2336,-174 L2353,-187 L2369,-191 L2385,-199 L2402,-209 L2418,-215 L2434,-224"/><path d="M2474,-247 L2490,-253 L2507,-261 L2524,-268 L2540,-278 L2557,-285 L2574,-294 L2591,-305 L2607,-313"/><path d="M1780,57 L1795,54 L1811,45 L1826,43 L1841,37 L1857,30"/><path d="M1871,26 L1886,22 L1901,13 L1916,11 L1931,6 L1947,-3 L1962,-8"/><path d="M1985,-14 L2000,-23 L2015,-26 L2030,-34 L2046,-39"/><path d="M2085,-53 L2101,-58 L2117,-64 L2133,-69 L2149,-77 L2166,-79 L2182,-87 L2198,-90 L2214,-99 L2230,-104 L2247,-107"/><path d="M2257,-115 L2274,-125 L2292,-132 L2309,-139 L2326,-151 L2343,-158 L2360,-164 L2378,-173"/><path d="M2398,-183 L2413,-193 L2428,-200 L2443,-208 L2458,-214"/><path d="M2480,-224 L2495,-234 L2511,-242 L2527,-250 L2542,-255 L2558,-265 L2574,-273 L2590,-281"/><path d="M1780,82 L1797,73 L1814,69 L1831,60 L1848,58 L1866,48 L1883,43 L1900,39"/><path d="M1927,26 L1944,19 L1961,16 L1979,8 L1996,3 L2013,-3 L2030,-7 L2048,-15 L2065,-24"/><path d="M2085,-29 L2102,-32 L2118,-40 L2135,-45 L2151,-54 L2168,-60"/><path d="M2206,-71 L2224,-79 L2241,-83 L2259,-91 L2276,-100 L2294,-109 L2311,-119 L2329,-127 L2346,-134 L2364,-145"/><path d="M2376,-151 L2393,-158 L2410,-169 L2427,-175"/><path d="M2459,-192 L2475,-199 L2491,-209 L2507,-218 L2523,-223"/><path d="M2543,-233 L2560,-241 L2576,-252 L2593,-260 L2610,-266 L2626,-276 L2643,-284 L2659,-295 L2676,-302"/><path d="M1780,104 L1798,97 L1815,91 L1833,86 L1850,76"/><path d="M1876,67 L1892,63 L1908,58 L1923,52 L1939,44 L1955,40 L1971,32 L1986,30"/><path d="M2022,18 L2038,9 L2054,7 L2070,-1 L2087,-6 L2103,-12 L2119,-20 L2135,-24"/><path d="M2148,-26 L2165,-33 L2183,-40 L2201,-47 L2219,-57 L2237,-63 L2255,-71 L2273,-76 L2291,-86 L2309,-96"/><path d="M2326,-103 L2344,-115 L2362,-122 L2379,-128 L2397,-138 L2414,-146 L2432,-156 L2450,-165 L2467,-173 L2485,-185"/><path d="M2501,-193 L2518,-198 L2534,-210 L2551,-218 L2567,-223 L2583,-233 L2600,-240 L2616,-250 L2633,-256 L2649,-263 L2665,-271"/><path d="M1780,125 L1794,121 L1809,117 L1823,108 L1837,106"/><path d="M1867,93 L1884,88 L1901,82 L1918,74 L1935,73 L1952,65 L1969,57 L1986,53 L2003,45 L2020,42"/><path d="M2032,37 L2050,30 L2067,21 L2084,19 L2101,12 L2118,6 L2135,-4"/><path d="M2174,-16 L2191,-24 L2207,-26 L2224,-33 L2240,-39 L2257,-48 L2273,-56 L2290,-65 L2306,-73 L2323,-79"/><path d="M2342,-87 L2359,-97 L2376,-108 L2393,-115 L2410,-123 L2426,-134 L2443,-138 L2460,-147 L2477,-157 L2494,-164 L2511,-173"/><path d="M2538,-186 L2556,-197 L2573,-207 L2591,-213 L2608,-223"/><path d="M1780,147 L1795,141 L1811,138 L1826,130 L1842,128 L1857,121 L1873,116 L1888,110"/><path d="M1926,96 L1940,90 L1954,84 L1968,83 L1983,76"/><path d="M2015,62 L2032,58 L2049,51 L2067,43 L2084,40 L2102,34 L2119,27 L2137,19 L2154,13"/><path d="M2179,6 L2195,-2 L2212,-5 L2229,-12 L2245,-18 L2262,-27 L2279,-35"/><path d="M2315,-52 L2332,-60 L2348,-67 L2365,-80 L2381,-87 L2397,-95 L2414,-103 L2430,-112 L2447,-121 L2463,-126 L2479,-135"/><path d="M2507,-151 L2524,-158 L2540,-166 L2557,-175 L2574,-183 L2590,-188 L2607,-201 L2623,-208 L2640,-214 L2656,-223"/><path d="M1780,169 L1795,165 L1811,160 L1826,156 L1841,151"/><path d="M1867,141 L1882,135 L1897,131 L1912,123 L1927,118 L1943,114"/><path d="M1966,105 L1982,97 L1998,94 L2014,87 L2030,83 L2046,74 L2062,71 L2077,65"/><path d="M2109,53 L2126,46 L2143,39 L2160,35 L2177,26 L2194,22 L2211,18 L2228,9 L2245,2 L2262,-5"/><path d="M2293,-21 L2310,-28 L2326,-35 L2343,-43 L2360,-52 L2377,-63 L2393,-72 L2410,-79 L2427,-88 L2444,-93"/><path d="M2455,-98 L2470,-107 L2485,-116 L2501,-124 L2516,-129"/><path d="M2546,-147 L2562,-151 L2577,-163 L2592,-171 L2607,-179 L2622,-182 L2637,-193"/><path d="M1780,194 L1797,189 L1813,181 L1830,174 L1846,169 L1863,163 L1880,157"/><path d="M1907,146 L1923,140 L1939,135 L1955,132 L1971,126 L1987,117 L2003,112 L2019,107"/><path d="M2043,97 L2059,93 L2075,89 L2090,84 L2106,75"/><path d="M2119,69 L2136,67 L2152,61 L2169,55 L2185,45 L2202,44 L2218,34 L2235,32 L2251,22"/><path d="M2271,12 L2288,3 L2305,-2 L2322,-12 L2339,-22 L2357,-29"/><path d="M2391,-46 L2407,-55 L2424,-64 L2440,-71 L2456,-81 L2473,-87"/><path d="M2512,-105 L2528,-116 L2545,-121 L2561,-131 L2577,-140"/><path d="M1780,214 L1796,211 L1812,204 L1829,200 L1845,195 L1861,186 L1877,179 L1893,175"/><path d="M1919,165 L1936,160 L1953,153 L1970,149 L1987,143 L2004,135 L2021,131 L2038,121 L2055,116 L2072,109 L2089,104"/><path d="M2126,92 L2143,86 L2160,79 L2177,73 L2194,67 L2211,62 L2228,53 L2245,51 L2262,42 L2279,34 L2296,22"/><path d="M2320,14 L2337,2 L2354,-7 L2371,-14 L2388,-23 L2406,-31 L2423,-41 L2440,-49 L2457,-55"/><path d="M2496,-78 L2513,-83 L2530,-91 L2547,-103 L2564,-110 L2581,-116"/><path d="M1780,239 L1797,233 L1814,226 L1831,220 L1848,217 L1865,209 L1881,202 L1898,194"/><path d="M1909,192 L1925,188 L1941,183 L1957,173 L1973,170 L1989,165 L2005,159"/><path d="M2036,147 L2052,141 L2069,133 L2085,127 L2102,120"/><path d="M2112,120 L2130,114 L2147,108 L2164,101 L2181,96 L2199,88 L2216,82"/><path d="M2225,76 L2240,74 L2255,65 L2270,57 L2286,50 L2301,42 L2316,35"/><path d="M2351,19 L2367,9 L2383,2 L2399,-7 L2415,-12 L2431,-22 L2447,-28 L2463,-38"/><path d="M2482,-48 L2496,-51 L2511,-61 L2525,-67 L2540,-75 L2554,-84"/><path d="M1780,263 L1797,253 L1815,249 L1832,241 L1850,236 L1867,227 L1884,225 L1902,215 L1919,212"/><path d="M1952,198 L1969,191 L1986,185 L2003,181 L2020,176 L2037,168 L2055,161 L2072,158"/><path d="M2080,154 L2098,145 L2116,141 L2133,132 L2151,126 L2169,121 L2187,112 L2205,108"/><path d="M2222,101 L2239,94 L2256,91 L2273,81 L2290,71 L2307,62 L2323,53 L2340,48 L2357,37 L2374,32 L2391,23"/><path d="M2400,18 L2418,8 L2435,-2 L2453,-9 L2471,-20"/><path d="M2482,-27 L2498,-33 L2515,-38 L2531,-49 L2547,-54 L2563,-64 L2580,-72 L2596,-80 L2612,-88 L2628,-100 L2645,-105"/><path d="M1780,284 L1797,278 L1814,273 L1831,267 L1848,259 L1865,251 L1882,247 L1899,241 L1916,235"/><path d="M1933,231 L1948,222 L1964,216 L1979,213 L1995,205"/><path d="M2013,200 L2030,195 L2048,187 L2066,180 L2083,172 L2101,168 L2119,162 L2137,154 L2154,147"/><path d="M2176,140 L2192,136 L2208,131 L2225,122 L2241,119"/><path d="M2280,101 L2296,92 L2311,83 L2327,78 L2342,67 L2358,62 L2373,53 L2389,43"/><path d="M2412,34 L2429,24 L2446,17 L2464,6 L2481,-3 L2498,-11 L2515,-17 L2532,-28 L2549,-35"/><path d="M1780,307 L1797,300 L1814,294 L1831,286 L1848,284 L1865,273"/><path d="M1898,265 L1915,257 L1932,250 L1948,247 L1965,240 L1981,236 L1998,229 L2015,219 L2031,216 L2048,209 L2065,202"/><path d="M2104,188 L2121,183 L2137,178 L2154,173 L2170,164 L2187,159 L2203,154 L2220,147 L2236,140"/><path d="M2252,138 L2267,128 L2282,121 L2298,114 L2313,107 L2328,96 L2344,91"/><path d="M2374,74 L2390,66 L2407,61 L2424,50 L2441,44 L2458,33 L2475,25 L2492,15 L2508,10"/><path d="M2529,-4 L2546,-9 L2563,-20 L2579,-29 L2596,-38 L2613,-46 L2630,-54"/><path d="M1780,330 L1796,325 L1812,319 L1829,312 L1845,307 L1861,297 L1877,293 L1893,290"/><path d="M1912,281 L1928,275 L1945,271 L1961,264 L1978,258 L1994,250 L2011,243 L2027,237 L2044,234"/><path d="M2067,226 L2083,219 L2098,214 L2114,207 L2129,201 L2145,198 L2160,192"/><path d="M2176,187 L2190,179 L2204,175 L2219,170 L2233,164"/><path d="M2241,161 L2259,157 L2277,143 L2295,135 L2313,128 L2331,117 L2349,110 L2367,100 L2385,93 L2403,85"/><path d="M2438,63 L2454,55 L2470,51 L2486,43 L2501,34"/><path d="M2520,26 L2537,16 L2555,5 L2573,-1 L2590,-12 L2608,-18 L2625,-29"/><path d="M1780,353 L1797,347 L1815,336 L1832,331"/><path d="M1860,320 L1876,316 L1892,313 L1908,306 L1925,300 L1941,292"/><path d="M1949,289 L1966,284 L1983,279 L1999,271 L2016,266 L2033,258 L2050,256 L2066,250 L2083,240 L2100,235 L2117,231"/><path d="M2134,223 L2151,218 L2168,213 L2184,203 L2201,199 L2218,194 L2234,189 L2251,182 L2267,173 L2284,164"/><path d="M2315,150 L2330,143 L2346,133 L2362,127 L2377,116 L2393,110 L2408,103 L2424,97"/><path d="M2444,86 L2461,74 L2478,68 L2495,58 L2512,52 L2529,44 L2545,34 L2562,24 L2579,17 L2596,9"/><path d="M1780,374 L1797,369 L1815,361 L1832,352"/><path d="M1859,345 L1873,339 L1887,336 L1902,329 L1916,326 L1931,319"/><path d="M1952,312 L1968,306 L1984,300 L2000,296 L2015,288 L2031,282 L2047,275 L2063,274 L2078,268"/><path d="M2115,253 L2132,245 L2148,240 L2164,236 L2180,228 L2196,223 L2213,217 L2229,214"/><path d="M2242,205 L2260,198 L2277,190 L2295,182 L2313,171 L2330,165 L2348,157 L2365,144 L2383,138 L2401,131"/><path d="M2427,117 L2444,108 L2460,98 L2477,90 L2493,82 L2510,73 L2526,68"/><path d="M2548,57 L2565,48 L2581,39 L2598,32 L2615,20 L2632,16"/><path d="M1780,397 L1796,391 L1813,382 L1829,380 L1846,372 L1862,367 L1879,361 L1895,355 L1912,351"/><path d="M1949,337 L1966,328 L1984,322 L2001,317 L2019,311 L2037,306 L2054,297 L2072,292 L2089,287 L2107,279"/><path d="M2136,268 L2153,261 L2170,253 L2188,250 L2205,245 L2222,237 L2239,232 L2257,221"/><path d="M2292,206 L2308,200 L2324,189 L2339,181 L2355,176 L2371,166 L2387,157"/><path d="M2414,145 L2430,135 L2447,126 L2463,121 L2479,112 L2496,105"/><path d="M2510,98 L2526,89 L2542,82 L2558,74 L2574,63 L2590,56 L2607,48"/><path d="M1780,420 L1797,413 L1814,405 L1831,400 L1848,394 L1864,386 L1881,380 L1898,375 L1915,369 L1932,363 L1949,357"/><path d="M1965,353 L1982,345 L1999,341 L2016,332 L2034,326"/><path d="M2071,312 L2086,308 L2101,302 L2116,297 L2131,292 L2146,285"/><path d="M2169,279 L2186,272 L2204,265 L2222,262"/><path d="M2246,248 L2262,245 L2278,233 L2294,225 L2310,221 L2326,210 L2343,204 L2359,193 L2375,187 L2391,180"/><path d="M2407,173 L2423,162 L2439,154 L2455,144 L2471,140 L2488,131 L2504,124 L2520,116"/><path d="M2548,102 L2566,92 L2584,84 L2602,74 L2620,65 L2638,55 L2656,45 L2674,37 L2692,29"/><path d="M1780,442 L1796,437 L1813,430 L1829,425 L1846,417 L1862,412 L1879,406 L1895,398 L1911,393"/><path d="M1936,384 L1952,378 L1969,374 L1986,365 L2002,359 L2019,357 L2035,350 L2052,343 L2068,339"/><path d="M2099,328 L2117,319 L2134,313 L2152,305 L2169,300 L2186,293 L2204,286"/><path d="M2242,277 L2259,267 L2277,256 L2294,250 L2312,242 L2329,232 L2347,223"/><path d="M2362,217 L2380,206 L2398,198 L2415,189 L2433,181 L2450,171"/><path d="M2483,158 L2501,144 L2518,139 L2535,131 L2552,121 L2570,113"/><path d="M1780,466 L1795,458 L1811,453 L1826,448 L1842,441"/><path d="M1857,437 L1874,431 L1891,424 L1907,420 L1924,414 L1941,407 L1957,399 L1974,394 L1991,388 L2008,383"/><path d="M2028,374 L2045,369 L2063,360 L2080,357 L2098,350 L2116,341 L2133,334 L2151,331 L2168,323"/><path d="M2205,312 L2218,307 L2232,300 L2246,293 L2260,291"/><path d="M2278,280 L2296,274 L2314,264 L2331,255 L2349,244 L2367,238 L2384,227 L2402,216 L2420,211 L2438,199"/><path d="M2452,193 L2470,186 L2487,175 L2505,169 L2522,156 L2540,148 L2557,142"/><path d="M1780,484 L1798,478 L1816,473 L1834,469 L1852,461 L1870,455 L1888,450 L1905,440 L1923,432 L1941,429"/><path d="M1951,423 L1966,417 L1980,415 L1994,407 L2009,405 L2023,401"/><path d="M2054,388 L2071,381 L2088,373 L2105,370 L2122,364 L2139,356 L2155,352 L2172,347"/><path d="M2193,337 L2209,332 L2225,327 L2241,322 L2258,315 L2274,307 L2290,298 L2307,288 L2323,279 L2339,272"/><path d="M2352,264 L2370,256 L2387,246 L2405,241 L2422,231 L2440,223 L2457,214"/><path d="M2492,196 L2509,185 L2527,178 L2544,168 L2561,164 L2579,152 L2596,144"/><path d="M1780,508 L1797,504 L1814,498 L1831,489 L1848,484 L1866,480 L1883,472"/><path d="M1921,456 L1937,454 L1953,447 L1969,443 L1985,436 L2002,431 L2018,425 L2034,416"/><path d="M2045,415 L2061,408 L2077,404 L2094,394 L2110,391 L2126,385 L2143,380 L2159,370 L2176,366 L2192,362 L2208,355"/><path d="M2228,346 L2245,342 L2262,334 L2279,325 L2296,319 L2313,308 L2330,299"/><path d="M2341,294 L2357,286 L2374,276 L2390,269 L2406,264"/><path d="M2446,241 L2460,234 L2475,229 L2490,222 L2504,212 L2519,204"/><path d="M2547,192 L2565,181 L2582,172 L2600,162 L2617,155 L2635,145 L2653,140 L2670,131"/><path d="M1780,532 L1796,525 L1813,521 L1829,513 L1846,507 L1862,504 L1878,494 L1895,489 L1911,483 L1928,478 L1944,472"/><path d="M1962,464 L1979,461 L1995,455 L2012,446 L2029,439 L2046,434 L2062,432 L2079,426"/><path d="M2090,420 L2108,414 L2125,406 L2143,399 L2161,395 L2179,389 L2196,380 L2214,374"/><path d="M2226,369 L2241,365 L2255,361 L2270,352 L2285,345"/><path d="M2305,335 L2322,327 L2338,317 L2354,308 L2371,299 L2387,293 L2403,285"/><path d="M2419,276 L2436,267 L2453,262 L2470,252 L2487,246 L2504,232 L2521,226 L2538,219"/><path d="M2549,210 L2566,204 L2584,194 L2602,185 L2620,175 L2638,169 L2656,158 L2674,149"/><path d="M1780,554 L1797,547 L1814,543 L1830,535 L1847,531 L1864,523 L1881,518 L1897,509 L1914,505"/><path d="M1953,492 L1966,486 L1980,482 L1994,479 L2007,472"/><path d="M2021,467 L2039,462 L2056,453 L2074,448 L2092,442 L2109,433 L2127,427 L2144,423"/><path d="M2170,412 L2186,408 L2203,404 L2219,397 L2236,390"/><path d="M2262,377 L2277,373 L2293,362 L2309,355 L2325,346 L2341,338 L2357,331 L2372,324"/><path d="M2385,317 L2402,308 L2419,300 L2435,291 L2452,283 L2469,273"/><path d="M2501,259 L2518,248 L2535,243 L2551,233 L2568,226 L2585,217 L2602,207 L2618,203 L2635,192 L2652,186"/><path d="M1780,574 L1796,568 L1812,566 L1828,560 L1844,553"/><path d="M1861,547 L1879,542 L1897,532 L1915,528"/><path d="M1927,523 L1942,515 L1958,512 L1974,508 L1990,502 L2005,497 L2021,489"/><path d="M2041,481 L2057,474 L2073,471 L2089,463 L2106,458 L2122,453 L2138,446 L2154,440"/><path d="M2188,430 L2203,423 L2219,420 L2235,412 L2250,406 L2266,399 L2282,391 L2298,385"/><path d="M2311,375 L2329,368 L2346,361 L2364,348 L2382,342 L2400,332 L2418,325 L2436,316"/><path d="M2476,293 L2489,288 L2503,282 L2516,274 L2530,269"/><path d="M2543,262 L2559,253 L2574,245 L2589,235 L2604,227 L2620,220"/><path d="M1780,599 L1795,592 L1811,586 L1826,580 L1842,576 L1857,572 L1873,564 L1888,558"/><path d="M1913,550 L1931,547 L1948,537 L1966,532 L1984,526 L2001,518 L2019,510 L2037,505 L2055,499"/><path d="M2069,492 L2086,487 L2104,480 L2121,477 L2138,468 L2155,465 L2172,458 L2189,452 L2206,447 L2223,437"/><path d="M2260,424 L2276,418 L2292,410 L2308,402 L2324,393 L2340,387 L2355,374 L2371,367"/><path d="M2389,360 L2405,350 L2421,343 L2438,336 L2454,329 L2471,317 L2487,309 L2503,305"/><path d="M2530,287 L2547,279 L2564,274 L2581,264 L2598,258 L2616,247 L2633,239 L2650,228"/><path d="M1780,623 L1797,613 L1814,610 L1831,601 L1848,595 L1865,593 L1882,587 L1899,576 L1915,574 L1932,567"/><path d="M1954,557 L1971,551 L1988,546 L2005,538 L2022,535 L2039,530 L2056,524 L2073,515"/><path d="M2083,510 L2100,508 L2116,500 L2132,494 L2148,490 L2164,482 L2180,478 L2197,471"/><path d="M2212,463 L2228,457 L2244,453 L2260,446 L2277,439 L2293,431 L2309,421 L2325,413 L2341,408 L2357,400"/><path d="M2379,388 L2395,378 L2411,369 L2427,361 L2443,353 L2459,346"/><path d="M2480,339 L2495,330 L2510,323 L2525,312 L2541,309 L2556,296"/><path d="M1780,644 L1797,637 L1814,630 L1831,627"/><path d="M1841,624 L1856,615 L1870,610 L1884,605 L1898,602"/><path d="M1907,597 L1923,590 L1940,586 L1957,579 L1974,573 L1991,567 L2008,563 L2025,553"/><path d="M2037,552 L2055,542 L2072,541 L2090,532 L2107,527 L2125,519"/><path d="M2146,511 L2162,504 L2178,501 L2193,495 L2209,487"/><path d="M2218,488 L2233,481 L2248,477 L2263,469 L2279,459"/><path d="M2308,446 L2325,436 L2342,430 L2359,420 L2376,409 L2393,405 L2409,396 L2426,384 L2443,378 L2460,368 L2477,363"/><path d="M2508,347 L2526,337 L2543,329 L2560,319 L2577,312 L2595,300 L2612,296 L2629,286 L2646,278"/><path d="M1780,668 L1796,661 L1813,654 L1829,650 L1846,641 L1862,638 L1879,630"/><path d="M1915,618 L1931,613 L1948,604 L1964,602 L1981,593 L1998,588 L2014,580 L2031,576 L2048,571"/><path d="M2085,556 L2100,553 L2116,545 L2132,540 L2147,533 L2163,527 L2179,521 L2194,518"/><path d="M2234,502 L2251,495 L2267,486 L2284,479 L2300,470"/><path d="M2333,458 L2350,448 L2367,436 L2384,430 L2401,421 L2418,414 L2435,403 L2452,394"/><path d="M2476,382 L2492,376 L2509,368 L2526,359 L2542,351"/><path d="M2557,342 L2574,334 L2590,329 L2607,319 L2624,308 L2640,303 L2657,296 L2673,283 L2690,275 L2706,271 L2723,258"/><path d="M1780,686 L1795,681 L1811,679 L1826,672 L1842,664 L1857,660 L1873,657"/><path d="M1886,649 L1902,645 L1918,640 L1934,633 L1950,629 L1966,623"/><path d="M1977,618 L1994,613 L2011,604 L2028,597 L2045,595 L2062,588 L2078,580 L2095,576 L2112,569"/><path d="M2128,563 L2145,558 L2163,551 L2180,544 L2198,541"/><path d="M2235,525 L2251,521 L2268,513 L2284,500 L2301,496 L2318,486 L2334,477 L2351,468 L2368,461 L2384,453"/><path d="M2414,435 L2432,428 L2450,420 L2468,410 L2485,403 L2503,395 L2521,386 L2538,373"/><path d="M1780,710 L1796,704 L1813,700 L1829,691 L1845,688 L1861,680 L1878,674 L1894,671 L1910,665 L1926,659 L1943,655"/><path d="M1955,647 L1973,641 L1990,638 L2007,627 L2024,624 L2041,615 L2059,611 L2076,607 L2093,599 L2110,593"/><path d="M2144,580 L2161,573 L2177,567 L2193,564 L2209,559"/><path d="M2245,544 L2263,537 L2280,527 L2298,520 L2316,509 L2334,498"/><path d="M2355,487 L2373,482 L2391,473 L2408,464 L2426,454 L2444,443 L2462,437 L2479,425 L2497,418"/><path d="M2506,412 L2523,406 L2540,398 L2557,389"/><path d="M1780,735 L1796,728 L1812,722 L1828,718 L1844,711 L1859,707"/><path d="M1870,700 L1887,693 L1903,690 L1920,684 L1937,678 L1954,669 L1970,666 L1987,661"/><path d="M2009,650 L2023,647 L2037,642 L2050,635 L2064,631"/><path d="M2085,625 L2103,620 L2120,613 L2137,605 L2155,597 L2172,590 L2189,584 L2207,578 L2224,574 L2242,566"/><path d="M2270,556 L2286,544 L2302,539 L2318,532 L2335,524"/><path d="M2360,509 L2378,498 L2395,492 L2413,483 L2430,476 L2448,467 L2465,458 L2483,446 L2500,441"/><path d="M2519,432 L2536,423 L2553,412 L2569,403 L2586,398 L2603,387 L2620,381 L2636,374 L2653,362 L2670,357 L2686,346"/><path d="M1780,757 L1796,748 L1811,744 L1827,739 L1843,733 L1858,726 L1874,723 L1889,718"/><path d="M1927,704 L1943,698 L1958,693 L1974,684 L1990,679"/><path d="M2020,669 L2034,665 L2048,661 L2063,655 L2077,649"/><path d="M2111,637 L2126,629 L2141,624 L2157,619 L2172,614 L2187,609 L2202,602"/><path d="M2230,593 L2246,589 L2262,581 L2278,572 L2294,564"/><path d="M2323,551 L2338,544 L2353,534 L2369,527 L2384,519"/><path d="M2423,498 L2441,491 L2459,482 L2477,471 L2495,463 L2512,457 L2530,447"/><path d="M2553,437 L2571,425 L2588,417 L2606,410 L2623,401 L2641,394 L2658,385"/><path d="M1780,780 L1797,771 L1814,767 L1830,761 L1847,756 L1864,750 L1881,740 L1897,737 L1914,733 L1931,723"/><path d="M1948,717 L1966,710 L1983,704 L2000,699 L2018,693 L2035,687 L2053,678 L2070,675 L2088,667 L2105,661"/><path d="M2116,659 L2131,653 L2146,649 L2161,643 L2176,638 L2191,630 L2206,624"/><path d="M2214,622 L2229,618 L2244,610 L2259,606 L2274,597 L2289,591"/><path d="M2318,573 L2333,568 L2349,560 L2364,553 L2379,544 L2395,534 L2410,527"/><path d="M2435,517 L2451,508 L2467,501 L2483,493 L2498,483 L2514,479 L2530,469 L2546,463"/><path d="M2554,458 L2571,449 L2588,441 L2604,435 L2621,423 L2637,415 L2654,408 L2671,397"/><path d="M1780,803 L1796,796 L1812,791 L1829,781 L1845,777 L1861,771 L1877,764"/><path d="M1917,751 L1935,746 L1952,738 L1970,734 L1988,727 L2006,721 L2024,715 L2042,707 L2060,701 L2077,693"/><path d="M2099,686 L2115,680 L2132,673 L2149,667 L2165,662 L2182,654 L2199,652 L2215,642 L2232,638 L2249,633 L2265,624"/><path d="M2277,620 L2293,608 L2310,602 L2326,595 L2343,585 L2360,575 L2376,569 L2393,559"/><path d="M2414,548 L2430,540 L2446,535 L2462,524 L2478,519 L2494,511 L2510,502 L2526,495 L2542,487 L2558,478"/><path d="M1780,825 L1795,817 L1810,815 L1825,806 L1840,802"/><path d="M1878,789 L1894,783 L1909,776 L1925,770 L1941,765 L1957,758 L1973,752"/><path d="M1984,751 L2000,745 L2016,741 L2033,733 L2049,725 L2065,720 L2082,716 L2098,709 L2115,701 L2131,697"/><path d="M2165,684 L2182,677 L2198,674 L2214,666 L2231,662 L2247,656 L2263,645 L2280,638 L2296,630"/><path d="M2331,615 L2346,608 L2362,598 L2378,590 L2394,581 L2410,574 L2425,565 L2441,560 L2457,553"/><path d="M2471,545 L2489,533 L2506,526 L2523,516"/><path d="M1780,844 L1797,838 L1814,835 L1830,830 L1847,821"/><path d="M1882,808 L1899,804 L1917,797 L1935,793 L1953,782 L1970,780 L1988,769 L2006,763 L2023,761 L2041,752"/><path d="M2065,745 L2082,739 L2100,728 L2118,723 L2136,718 L2154,711 L2172,704 L2190,698 L2208,692 L2226,687"/><path d="M2240,682 L2258,672 L2276,662 L2294,653"/><path d="M2324,639 L2341,631 L2358,620 L2375,616 L2392,604 L2410,597 L2427,587 L2444,582 L2461,574"/><path d="M2498,551 L2515,545 L2532,534 L2549,529 L2566,518 L2582,510 L2599,503"/><path d="M1780,867 L1796,863 L1813,858 L1829,850 L1846,844 L1862,840"/><path d="M1900,825 L1917,819 L1933,811 L1950,807 L1967,799 L1984,794 L2001,790 L2017,781"/><path d="M2037,774 L2054,771 L2070,763 L2087,756 L2103,754 L2119,747 L2136,739 L2152,735 L2169,729 L2185,723 L2202,717"/><path d="M2233,705 L2249,698 L2266,693 L2282,684 L2299,674 L2315,668 L2331,661 L2348,651 L2364,641"/><path d="M2392,630 L2409,618 L2426,613 L2443,605"/><path d="M2458,596 L2475,586 L2492,580 L2508,570 L2525,563 L2542,554"/><path d="M1780,893 L1795,886 L1810,878 L1825,876 L1840,870 L1856,865 L1871,857"/><path d="M1909,844 L1926,836 L1943,832 L1960,828"/><path d="M1975,823 L1992,817 L2009,808 L2026,803 L2043,794 L2060,791 L2077,786"/><path d="M2100,778 L2117,771 L2135,765 L2152,756"/><path d="M2182,746 L2198,741 L2214,734 L2230,731 L2247,724 L2263,717 L2279,706 L2295,697 L2311,691 L2328,683"/><path d="M2343,674 L2359,666 L2376,660 L2392,652 L2409,643 L2425,632 L2441,626 L2458,617 L2474,608 L2490,599"/><path d="M2516,587 L2531,579 L2546,574 L2561,568 L2576,559"/><path d="M1780,914 L1796,909 L1812,903 L1828,898 L1844,890 L1860,886 L1876,877 L1892,871 L1908,869"/><path d="M1948,855 L1966,847 L1984,842 L2002,835 L2020,829"/><path d="M2032,822 L2049,819 L2065,813 L2082,805 L2098,800 L2114,794 L2131,787 L2147,783 L2163,774 L2180,771"/><path d="M2198,765 L2214,760 L2229,753 L2245,747 L2260,737 L2276,730 L2291,724 L2306,716"/><path d="M2321,707 L2337,703 L2353,694 L2369,686 L2385,678"/><path d="M2418,659 L2435,654 L2452,644 L2469,635 L2486,626 L2503,616 L2520,608 L2537,603 L2554,592 L2571,583"/><path d="M1780,934 L1798,928 L1816,923 L1834,917 L1851,909 L1869,902 L1887,899 L1905,892"/><path d="M1923,885 L1940,878 L1958,870 L1976,864 L1993,861"/><path d="M2013,853 L2030,846 L2047,841 L2064,835 L2081,828 L2099,823 L2116,817 L2133,809"/><path d="M2149,804 L2166,796 L2184,792 L2201,787 L2218,776 L2236,773 L2253,767 L2270,756 L2288,749 L2305,737"/><path d="M2324,729 L2341,723 L2358,714 L2375,706 L2392,696"/><path d="M2422,681 L2437,673 L2453,667 L2468,659 L2484,652"/><path d="M2515,633 L2532,624 L2549,618 L2566,608 L2583,602 L2600,592 L2617,583 L2634,573 L2651,568 L2668,556"/><path d="M1780,959 L1797,955 L1813,946 L1830,940 L1846,937 L1863,930 L1879,921 L1896,917 L1912,912 L1929,905 L1945,898"/><path d="M1954,895 L1972,887 L1990,883 L2007,877 L2025,872 L2043,862"/><path d="M2074,853 L2092,848 L2110,840 L2128,834 L2145,828 L2163,822"/><path d="M2200,810 L2218,799 L2236,797 L2254,786 L2271,777 L2289,769 L2307,759 L2325,750 L2343,745"/><path d="M2377,728 L2395,718 L2413,710 L2431,699 L2449,688 L2467,682 L2485,673 L2503,662 L2521,653 L2538,643"/></g><path d="M1967,81 L1973,126 L1983,159 L2024,187 L2070,200 L2170,210 L2322,208" fill="none" stroke="#2a3122" stroke-width="10" stroke-linejoin="round" opacity="0.9"/><path d="M1985,158 L2024,185 L2050,195" fill="none" stroke="#5a4634" stroke-width="6" opacity="0.6"/><path d="M2215.7,81 L2299.5,141 L2345.2,165.3 L2380.2,195.8 L2360,222 L2398.5,240 L2421.4,246 L2429,284 L2517.3,284 L2505.2,262.8 L2482.3,232.3 L2459.5,201.9 L2429,171.4 L2390.9,141 L2337.6,110.5 L2276.6,81 Z" fill="#6e5240"/><path d="M2240,81 L2310,130 L2370,168 L2410,205 L2440,240 L2465,284 L2490,284 L2470,245 L2440,205 L2400,165 L2345,125 L2275,81 Z" fill="#8c6c58" opacity="0.6"/><path d="M2276.6,81 L2337.6,110.5 L2390.9,141 L2429,171.4 L2459.5,201.9 L2482.3,232.3 L2505.2,262.8 L2517.3,284" fill="none" stroke="#3a3424" stroke-width="6" opacity="0.6"/><ellipse cx="2335" cy="292" rx="56" ry="80" fill="#5c6e50"/><ellipse cx="2452" cy="292" rx="36" ry="43" fill="#5c6e50"/><circle cx="2373" cy="241" r="3.2" fill="#6f8360" opacity="0.85"/><circle cx="2384" cy="280" r="5.0" fill="#6f8360" opacity="0.85"/><circle cx="2367" cy="281" r="7.2" fill="#4a5c40" opacity="0.85"/><circle cx="2355" cy="220" r="7.7" fill="#a0ae90" opacity="0.85"/><circle cx="2377" cy="271" r="6.1" fill="#4a5c40" opacity="0.85"/><circle cx="2352" cy="220" r="4.3" fill="#a9b69a" opacity="0.85"/><circle cx="2354" cy="245" r="3.2" fill="#6f8360" opacity="0.85"/><circle cx="2370" cy="233" r="3.3" fill="#a0ae90" opacity="0.85"/><circle cx="2303" cy="241" r="4.6" fill="#a0ae90" opacity="0.85"/><circle cx="2378" cy="252" r="4.1" fill="#55684a" opacity="0.85"/><circle cx="2312" cy="248" r="7.7" fill="#4a5c40" opacity="0.85"/><circle cx="2297" cy="258" r="7.3" fill="#6f8360" opacity="0.85"/><circle cx="2300" cy="261" r="6.9" fill="#4a5c40" opacity="0.85"/><circle cx="2336" cy="266" r="7.9" fill="#55684a" opacity="0.85"/><circle cx="2385" cy="269" r="7.0" fill="#55684a" opacity="0.85"/><circle cx="2357" cy="220" r="5.8" fill="#a9b69a" opacity="0.85"/><circle cx="2329" cy="286" r="4.6" fill="#55684a" opacity="0.85"/><circle cx="2319" cy="279" r="7.5" fill="#4a5c40" opacity="0.85"/><circle cx="2300" cy="253" r="7.4" fill="#4a5c40" opacity="0.85"/><circle cx="2316" cy="234" r="5.0" fill="#8a9b7a" opacity="0.85"/><circle cx="2321" cy="240" r="5.1" fill="#8a9b7a" opacity="0.85"/><circle cx="2355" cy="241" r="5.2" fill="#4a5c40" opacity="0.85"/><circle cx="2320" cy="249" r="3.9" fill="#4a5c40" opacity="0.85"/><circle cx="2304" cy="230" r="5.7" fill="#a0ae90" opacity="0.85"/><circle cx="2339" cy="252" r="6.5" fill="#6f8360" opacity="0.85"/><circle cx="2342" cy="273" r="7.6" fill="#8a9b7a" opacity="0.85"/><circle cx="2337" cy="225" r="4.5" fill="#a0ae90" opacity="0.85"/><circle cx="2303" cy="231" r="4.1" fill="#8a9b7a" opacity="0.85"/><circle cx="2359" cy="226" r="5.3" fill="#6f8360" opacity="0.85"/><circle cx="2333" cy="273" r="3.9" fill="#55684a" opacity="0.85"/><circle cx="2345" cy="269" r="7.4" fill="#55684a" opacity="0.85"/><circle cx="2322" cy="251" r="4.3" fill="#a9b69a" opacity="0.85"/><circle cx="2349" cy="242" r="6.2" fill="#4a5c40" opacity="0.85"/><circle cx="2370" cy="265" r="7.0" fill="#a0ae90" opacity="0.85"/><circle cx="2298" cy="238" r="3.4" fill="#55684a" opacity="0.85"/><circle cx="2281" cy="270" r="3.7" fill="#6f8360" opacity="0.85"/><circle cx="2350" cy="261" r="3.4" fill="#6f8360" opacity="0.85"/><circle cx="2343" cy="237" r="4.7" fill="#6f8360" opacity="0.85"/><circle cx="2356" cy="268" r="4.0" fill="#4a5c40" opacity="0.85"/><circle cx="2320" cy="223" r="6.5" fill="#a9b69a" opacity="0.85"/><circle cx="2296" cy="244" r="3.6" fill="#55684a" opacity="0.85"/><circle cx="2368" cy="284" r="4.0" fill="#4a5c40" opacity="0.85"/><circle cx="2329" cy="251" r="3.2" fill="#6f8360" opacity="0.85"/><circle cx="2327" cy="248" r="6.6" fill="#8a9b7a" opacity="0.85"/><circle cx="2362" cy="263" r="4.5" fill="#6f8360" opacity="0.85"/><circle cx="2379" cy="242" r="6.0" fill="#a0ae90" opacity="0.85"/><circle cx="2380" cy="270" r="5.0" fill="#6f8360" opacity="0.85"/><circle cx="2354" cy="225" r="3.5" fill="#8a9b7a" opacity="0.85"/><circle cx="2324" cy="243" r="4.0" fill="#6f8360" opacity="0.85"/><circle cx="2319" cy="261" r="4.1" fill="#a0ae90" opacity="0.85"/><circle cx="2343" cy="226" r="7.9" fill="#55684a" opacity="0.85"/><circle cx="2287" cy="281" r="7.7" fill="#a9b69a" opacity="0.85"/><circle cx="2286" cy="277" r="7.2" fill="#6f8360" opacity="0.85"/><circle cx="2355" cy="268" r="4.0" fill="#8a9b7a" opacity="0.85"/><circle cx="2315" cy="228" r="4.1" fill="#a9b69a" opacity="0.85"/><circle cx="2301" cy="243" r="3.2" fill="#6f8360" opacity="0.85"/><circle cx="2355" cy="239" r="7.6" fill="#55684a" opacity="0.85"/><circle cx="2290" cy="284" r="3.4" fill="#4a5c40" opacity="0.85"/><circle cx="2329" cy="225" r="7.0" fill="#4a5c40" opacity="0.85"/><circle cx="2347" cy="260" r="7.9" fill="#6f8360" opacity="0.85"/><circle cx="2370" cy="272" r="5.3" fill="#55684a" opacity="0.85"/><circle cx="2360" cy="232" r="6.9" fill="#a9b69a" opacity="0.85"/><circle cx="2324" cy="221" r="4.5" fill="#55684a" opacity="0.85"/><circle cx="2381" cy="277" r="4.8" fill="#a9b69a" opacity="0.85"/><circle cx="2334" cy="265" r="3.5" fill="#a0ae90" opacity="0.85"/><circle cx="2338" cy="212" r="6.5" fill="#4a5c40" opacity="0.85"/><circle cx="2373" cy="272" r="8.0" fill="#6f8360" opacity="0.85"/><circle cx="2374" cy="287" r="4.0" fill="#a0ae90" opacity="0.85"/><circle cx="2310" cy="229" r="8.0" fill="#55684a" opacity="0.85"/><circle cx="2356" cy="287" r="4.3" fill="#6f8360" opacity="0.85"/><circle cx="2359" cy="251" r="3.6" fill="#a9b69a" opacity="0.85"/><circle cx="2327" cy="258" r="7.6" fill="#a0ae90" opacity="0.85"/><circle cx="2317" cy="287" r="3.8" fill="#a9b69a" opacity="0.85"/><circle cx="2307" cy="284" r="5.5" fill="#8a9b7a" opacity="0.85"/><circle cx="2327" cy="229" r="6.7" fill="#8a9b7a" opacity="0.85"/><circle cx="2328" cy="235" r="4.6" fill="#6f8360" opacity="0.85"/><circle cx="2326" cy="246" r="5.2" fill="#a9b69a" opacity="0.85"/><circle cx="2318" cy="229" r="3.2" fill="#55684a" opacity="0.85"/><circle cx="2312" cy="232" r="7.2" fill="#4a5c40" opacity="0.85"/><circle cx="2341" cy="216" r="7.2" fill="#8a9b7a" opacity="0.85"/><circle cx="2373" cy="249" r="3.9" fill="#55684a" opacity="0.85"/><circle cx="2357" cy="289" r="6.5" fill="#8a9b7a" opacity="0.85"/><circle cx="2312" cy="246" r="6.2" fill="#8a9b7a" opacity="0.85"/><circle cx="2354" cy="264" r="3.1" fill="#4a5c40" opacity="0.85"/><circle cx="2314" cy="241" r="7.0" fill="#55684a" opacity="0.85"/><circle cx="2356" cy="262" r="7.9" fill="#4a5c40" opacity="0.85"/><circle cx="2296" cy="276" r="6.9" fill="#4a5c40" opacity="0.85"/><circle cx="2293" cy="268" r="3.0" fill="#a0ae90" opacity="0.85"/><circle cx="2359" cy="239" r="3.1" fill="#8a9b7a" opacity="0.85"/><circle cx="2346" cy="289" r="5.2" fill="#a0ae90" opacity="0.85"/><circle cx="2389" cy="289" r="3.3" fill="#6f8360" opacity="0.85"/><circle cx="2318" cy="232" r="7.4" fill="#a0ae90" opacity="0.85"/><circle cx="2361" cy="222" r="3.6" fill="#8a9b7a" opacity="0.85"/><circle cx="2335" cy="236" r="6.9" fill="#a0ae90" opacity="0.85"/><circle cx="2331" cy="265" r="7.3" fill="#a9b69a" opacity="0.85"/><circle cx="2369" cy="287" r="4.2" fill="#4a5c40" opacity="0.85"/><circle cx="2296" cy="238" r="4.9" fill="#55684a" opacity="0.85"/><circle cx="2357" cy="239" r="6.5" fill="#a0ae90" opacity="0.85"/><circle cx="2334" cy="244" r="7.5" fill="#4a5c40" opacity="0.85"/><circle cx="2345" cy="286" r="4.0" fill="#8a9b7a" opacity="0.85"/><circle cx="2355" cy="260" r="4.1" fill="#a9b69a" opacity="0.85"/><circle cx="2358" cy="262" r="7.9" fill="#a9b69a" opacity="0.85"/><circle cx="2347" cy="214" r="4.1" fill="#6f8360" opacity="0.85"/><circle cx="2325" cy="277" r="6.8" fill="#a0ae90" opacity="0.85"/><circle cx="2368" cy="237" r="3.0" fill="#6f8360" opacity="0.85"/><circle cx="2341" cy="263" r="6.6" fill="#a9b69a" opacity="0.85"/><circle cx="2340" cy="262" r="3.4" fill="#a0ae90" opacity="0.85"/><circle cx="2316" cy="273" r="3.2" fill="#a0ae90" opacity="0.85"/><circle cx="2320" cy="277" r="7.0" fill="#a9b69a" opacity="0.85"/><circle cx="2302" cy="288" r="7.0" fill="#8a9b7a" opacity="0.85"/><circle cx="2375" cy="284" r="6.0" fill="#a9b69a" opacity="0.85"/><circle cx="2341" cy="277" r="7.2" fill="#a0ae90" opacity="0.85"/><circle cx="2308" cy="221" r="7.0" fill="#a0ae90" opacity="0.85"/><circle cx="2361" cy="255" r="5.4" fill="#8a9b7a" opacity="0.85"/><circle cx="2340" cy="231" r="4.3" fill="#8a9b7a" opacity="0.85"/><circle cx="2297" cy="269" r="3.4" fill="#a0ae90" opacity="0.85"/><circle cx="2330" cy="221" r="7.9" fill="#8a9b7a" opacity="0.85"/><circle cx="2323" cy="235" r="4.4" fill="#a9b69a" opacity="0.85"/><circle cx="2333" cy="247" r="6.5" fill="#55684a" opacity="0.85"/><circle cx="2313" cy="280" r="8.0" fill="#a0ae90" opacity="0.85"/><circle cx="2310" cy="249" r="5.1" fill="#8a9b7a" opacity="0.85"/><circle cx="2334" cy="281" r="5.7" fill="#4a5c40" opacity="0.85"/><circle cx="2351" cy="287" r="6.0" fill="#a0ae90" opacity="0.85"/><circle cx="2361" cy="250" r="4.4" fill="#a9b69a" opacity="0.85"/><circle cx="2369" cy="232" r="4.5" fill="#8a9b7a" opacity="0.85"/><circle cx="2352" cy="264" r="5.8" fill="#a0ae90" opacity="0.85"/><circle cx="2361" cy="250" r="4.3" fill="#6f8360" opacity="0.85"/><circle cx="2280" cy="282" r="5.6" fill="#8a9b7a" opacity="0.85"/><circle cx="2292" cy="259" r="7.6" fill="#a9b69a" opacity="0.85"/><circle cx="2313" cy="275" r="5.5" fill="#a0ae90" opacity="0.85"/><circle cx="2322" cy="216" r="7.1" fill="#4a5c40" opacity="0.85"/><circle cx="2318" cy="225" r="6.7" fill="#8a9b7a" opacity="0.85"/><circle cx="2329" cy="275" r="5.4" fill="#55684a" opacity="0.85"/><circle cx="2320" cy="254" r="5.1" fill="#4a5c40" opacity="0.85"/><circle cx="2375" cy="243" r="4.8" fill="#6f8360" opacity="0.85"/><circle cx="2368" cy="262" r="5.4" fill="#8a9b7a" opacity="0.85"/><circle cx="2321" cy="272" r="4.9" fill="#6f8360" opacity="0.85"/><circle cx="2370" cy="229" r="7.6" fill="#55684a" opacity="0.85"/><circle cx="2348" cy="276" r="4.0" fill="#a0ae90" opacity="0.85"/><circle cx="2314" cy="236" r="4.4" fill="#6f8360" opacity="0.85"/><circle cx="2313" cy="235" r="5.8" fill="#6f8360" opacity="0.85"/><circle cx="2282" cy="290" r="5.5" fill="#6f8360" opacity="0.85"/><circle cx="2281" cy="279" r="7.7" fill="#a9b69a" opacity="0.85"/><circle cx="2335" cy="261" r="3.4" fill="#8a9b7a" opacity="0.85"/><circle cx="2356" cy="239" r="3.9" fill="#55684a" opacity="0.85"/><circle cx="2314" cy="258" r="3.6" fill="#a9b69a" opacity="0.85"/><circle cx="2306" cy="235" r="5.4" fill="#a9b69a" opacity="0.85"/><circle cx="2309" cy="229" r="6.7" fill="#55684a" opacity="0.85"/><circle cx="2305" cy="235" r="5.1" fill="#8a9b7a" opacity="0.85"/><circle cx="2338" cy="228" r="3.2" fill="#a0ae90" opacity="0.85"/><circle cx="2463" cy="279" r="6.7" fill="#4a5c40" opacity="0.85"/><circle cx="2424" cy="279" r="3.1" fill="#8a9b7a" opacity="0.85"/><circle cx="2471" cy="272" r="4.3" fill="#8a9b7a" opacity="0.85"/><circle cx="2433" cy="282" r="6.1" fill="#55684a" opacity="0.85"/><circle cx="2428" cy="266" r="3.4" fill="#55684a" opacity="0.85"/><circle cx="2430" cy="268" r="6.9" fill="#a0ae90" opacity="0.85"/><circle cx="2436" cy="278" r="6.5" fill="#a9b69a" opacity="0.85"/><circle cx="2438" cy="265" r="5.0" fill="#55684a" opacity="0.85"/><circle cx="2420" cy="286" r="5.2" fill="#4a5c40" opacity="0.85"/><circle cx="2444" cy="276" r="3.1" fill="#a0ae90" opacity="0.85"/><circle cx="2430" cy="263" r="3.5" fill="#a9b69a" opacity="0.85"/><circle cx="2464" cy="272" r="4.0" fill="#a0ae90" opacity="0.85"/><circle cx="2446" cy="266" r="3.8" fill="#a9b69a" opacity="0.85"/><circle cx="2445" cy="253" r="4.9" fill="#6f8360" opacity="0.85"/><circle cx="2456" cy="251" r="6.8" fill="#a9b69a" opacity="0.85"/><circle cx="2473" cy="268" r="6.7" fill="#a9b69a" opacity="0.85"/><circle cx="2465" cy="256" r="5.8" fill="#8a9b7a" opacity="0.85"/><circle cx="2435" cy="257" r="5.7" fill="#a9b69a" opacity="0.85"/><circle cx="2479" cy="277" r="5.7" fill="#55684a" opacity="0.85"/><circle cx="2475" cy="288" r="3.1" fill="#4a5c40" opacity="0.85"/><circle cx="2461" cy="252" r="5.2" fill="#4a5c40" opacity="0.85"/><circle cx="2422" cy="279" r="5.9" fill="#4a5c40" opacity="0.85"/><circle cx="2485" cy="275" r="5.4" fill="#a9b69a" opacity="0.85"/><circle cx="2467" cy="255" r="3.1" fill="#a0ae90" opacity="0.85"/><circle cx="2473" cy="271" r="4.7" fill="#55684a" opacity="0.85"/><circle cx="2440" cy="276" r="3.1" fill="#55684a" opacity="0.85"/><circle cx="2466" cy="259" r="3.0" fill="#8a9b7a" opacity="0.85"/><circle cx="2435" cy="286" r="4.7" fill="#a0ae90" opacity="0.85"/><circle cx="2447" cy="285" r="4.4" fill="#a9b69a" opacity="0.85"/><circle cx="2451" cy="266" r="5.1" fill="#4a5c40" opacity="0.85"/><circle cx="2437" cy="279" r="6.9" fill="#a0ae90" opacity="0.85"/><circle cx="2434" cy="269" r="6.4" fill="#8a9b7a" opacity="0.85"/><circle cx="2434" cy="289" r="6.6" fill="#8a9b7a" opacity="0.85"/><circle cx="2423" cy="283" r="4.6" fill="#8a9b7a" opacity="0.85"/><circle cx="2450" cy="261" r="6.1" fill="#a9b69a" opacity="0.85"/><circle cx="2441" cy="265" r="5.6" fill="#a9b69a" opacity="0.85"/><circle cx="2428" cy="278" r="3.5" fill="#55684a" opacity="0.85"/><circle cx="2461" cy="251" r="5.1" fill="#a0ae90" opacity="0.85"/><circle cx="2480" cy="275" r="6.3" fill="#a0ae90" opacity="0.85"/><circle cx="2453" cy="284" r="4.6" fill="#6f8360" opacity="0.85"/><circle cx="2463" cy="289" r="5.1" fill="#a9b69a" opacity="0.85"/><circle cx="2434" cy="270" r="6.5" fill="#8a9b7a" opacity="0.85"/><circle cx="2430" cy="284" r="3.1" fill="#a0ae90" opacity="0.85"/><circle cx="2461" cy="275" r="6.7" fill="#8a9b7a" opacity="0.85"/><circle cx="2455" cy="260" r="4.1" fill="#a0ae90" opacity="0.85"/><circle cx="2423" cy="278" r="3.9" fill="#55684a" opacity="0.85"/><circle cx="2448" cy="259" r="3.9" fill="#4a5c40" opacity="0.85"/><circle cx="2437" cy="285" r="3.2" fill="#a9b69a" opacity="0.85"/><circle cx="2436" cy="275" r="3.6" fill="#a0ae90" opacity="0.85"/><circle cx="2451" cy="250" r="3.0" fill="#6f8360" opacity="0.85"/><circle cx="2457" cy="276" r="5.7" fill="#55684a" opacity="0.85"/><circle cx="2445" cy="274" r="5.4" fill="#4a5c40" opacity="0.85"/><circle cx="2468" cy="284" r="3.8" fill="#a0ae90" opacity="0.85"/><circle cx="2456" cy="252" r="6.3" fill="#55684a" opacity="0.85"/><circle cx="2449" cy="275" r="5.4" fill="#a9b69a" opacity="0.85"/><circle cx="2478" cy="290" r="3.9" fill="#8a9b7a" opacity="0.85"/><circle cx="2456" cy="272" r="3.9" fill="#6f8360" opacity="0.85"/><circle cx="2448" cy="250" r="5.7" fill="#4a5c40" opacity="0.85"/><circle cx="2432" cy="257" r="6.3" fill="#4a5c40" opacity="0.85"/><circle cx="2442" cy="261" r="6.9" fill="#55684a" opacity="0.85"/><circle cx="2469" cy="275" r="5.9" fill="#55684a" opacity="0.85"/><circle cx="2456" cy="261" r="5.3" fill="#6f8360" opacity="0.85"/><circle cx="2428" cy="265" r="6.9" fill="#6f8360" opacity="0.85"/><circle cx="2474" cy="284" r="3.6" fill="#8a9b7a" opacity="0.85"/><circle cx="2481" cy="282" r="6.7" fill="#8a9b7a" opacity="0.85"/><circle cx="2485" cy="283" r="6.3" fill="#4a5c40" opacity="0.85"/><circle cx="2441" cy="281" r="6.3" fill="#a9b69a" opacity="0.85"/><circle cx="2442" cy="281" r="6.3" fill="#4a5c40" opacity="0.85"/><circle cx="2446" cy="259" r="3.5" fill="#a0ae90" opacity="0.85"/><circle cx="2456" cy="288" r="7.0" fill="#55684a" opacity="0.85"/></g></g>
<path d="M1698,81 Q1700,191 1713,284" fill="none" stroke="#56bde9" stroke-width="8"/>
</svg>
</div>
<div class="a" style="left:97.8px;top:302.3px;width:2445.2px;height:75.7px;border-radius:12px;background:#ebf7fd"></div>
<div class="a" style="left:898.4px;top:327px;width:25.8px;height:25.8px;border-radius:50%;background:#62b8dc"></div>
<div class="a" style="left:910.2px;top:333.2px;width:2.4px;height:2.6px;background:#fff"></div>
<div class="a" style="left:910.2px;top:337.4px;width:2.4px;height:8.6px;background:#fff"></div>
<div class="t" style="left:944.4px;top:330.6px;font-size:20px;font-weight:400;color:#234e5e;letter-spacing:0.335px;">Vous avez 14 demandes de PCF en attente de réponse</div>
<div class="a" style="left:1472px;top:321.6px;width:272.6px;height:36.7px;border-radius:10px;background:#5b87e6;box-shadow:0 2px 3px rgba(0,0,0,0.25)"></div>
<div class="t" style="left:1494.0px;top:331.1px;font-size:20px;font-weight:400;color:#fff;letter-spacing:-0.167px;-webkit-text-stroke:0.3px #fff">Mes demandes en attente</div>
<div class="a" style="left:97.4px;top:415px;width:398.7px;height:161px;border:1.3px solid #84a3ea;border-radius:24px;overflow:hidden;background:#fff"><div class="a" style="left:0;top:0;width:100%;height:62px;background:#f2f3f5"></div></div>
<div class="a" style="left:507.1px;top:415px;width:807.4px;height:161px;border:1.3px solid #84a3ea;border-radius:24px;overflow:hidden;background:#fff"><div class="a" style="left:0;top:0;width:100%;height:62px;background:#f2f3f5"></div></div>
<div class="a" style="left:1325.8px;top:415px;width:807.0px;height:161px;border:1.3px solid #84a3ea;border-radius:24px;overflow:hidden;background:#fff"><div class="a" style="left:0;top:0;width:100%;height:62px;background:#f2f3f5"></div></div>
<div class="a" style="left:2145.9px;top:415px;width:396.2px;height:161px;border:1.3px solid #84a3ea;border-radius:24px;overflow:hidden;background:#fff"><div class="a" style="left:0;top:0;width:100%;height:62px;background:#f2f3f5"></div></div>
<svg style="left:453.9px;top:431.8px" width="20.5" height="20.5" viewBox="0 0 20.5 20.5"><path d="M9.6,1.2 L3.2,1.2 Q1.2,1.2 1.2,3.2 L1.2,17.3 Q1.2,19.3 3.2,19.3 L17.3,19.3 Q19.3,19.3 19.3,17.3 L19.3,10.3" fill="none" stroke="#7b8596" stroke-width="2.2"/><path d="M12,1.2 L19.3,1.2 L19.3,7.8 M19.3,1.2 L6.4,13.6" fill="none" stroke="#7b8596" stroke-width="2.2"/></svg>
<svg style="left:1273.3px;top:431.7px" width="20.5" height="20.5" viewBox="0 0 20.5 20.5"><path d="M9.6,1.2 L3.2,1.2 Q1.2,1.2 1.2,3.2 L1.2,17.3 Q1.2,19.3 3.2,19.3 L17.3,19.3 Q19.3,19.3 19.3,17.3 L19.3,10.3" fill="none" stroke="#7b8596" stroke-width="2.2"/><path d="M12,1.2 L19.3,1.2 L19.3,7.8 M19.3,1.2 L6.4,13.6" fill="none" stroke="#7b8596" stroke-width="2.2"/></svg>
<svg style="left:2091.5px;top:431.8px" width="20.5" height="20.5" viewBox="0 0 20.5 20.5"><path d="M9.6,1.2 L3.2,1.2 Q1.2,1.2 1.2,3.2 L1.2,17.3 Q1.2,19.3 3.2,19.3 L17.3,19.3 Q19.3,19.3 19.3,17.3 L19.3,10.3" fill="none" stroke="#7b8596" stroke-width="2.2"/><path d="M12,1.2 L19.3,1.2 L19.3,7.8 M19.3,1.2 L6.4,13.6" fill="none" stroke="#7b8596" stroke-width="2.2"/></svg>
<svg style="left:2502px;top:431.8px" width="20.5" height="20.5" viewBox="0 0 20.5 20.5"><path d="M9.6,1.2 L3.2,1.2 Q1.2,1.2 1.2,3.2 L1.2,17.3 Q1.2,19.3 3.2,19.3 L17.3,19.3 Q19.3,19.3 19.3,17.3 L19.3,10.3" fill="none" stroke="#7b8596" stroke-width="2.2"/><path d="M12,1.2 L19.3,1.2 L19.3,7.8 M19.3,1.2 L6.4,13.6" fill="none" stroke="#7b8596" stroke-width="2.2"/></svg>
<svg style="left:128.5px;top:496.1px" width="19" height="19.2" viewBox="0 0 19 19.2"><circle cx="9.50" cy="9.60" r="2.9" fill="#8be287"/><circle cx="9.50" cy="3.20" r="2.9" fill="#8be287"/><circle cx="9.50" cy="16.00" r="2.9" fill="#8be287"/><circle cx="3.90" cy="6.40" r="2.9" fill="#8be287"/><circle cx="15.10" cy="6.40" r="2.9" fill="#8be287"/><circle cx="3.90" cy="12.80" r="2.9" fill="#8be287"/><circle cx="15.10" cy="12.80" r="2.9" fill="#8be287"/></svg>
<svg style="left:566.5px;top:495.8px" width="19" height="19.2" viewBox="0 0 19 19.2"><circle cx="9.50" cy="9.60" r="2.9" fill="#8be287"/><circle cx="9.50" cy="3.20" r="2.9" fill="#8be287"/><circle cx="9.50" cy="16.00" r="2.9" fill="#8be287"/><circle cx="3.90" cy="6.40" r="2.9" fill="#8be287"/><circle cx="15.10" cy="6.40" r="2.9" fill="#8be287"/><circle cx="3.90" cy="12.80" r="2.9" fill="#8be287"/><circle cx="15.10" cy="12.80" r="2.9" fill="#8be287"/></svg>
<svg style="left:941.6px;top:495.8px" width="19" height="19.2" viewBox="0 0 19 19.2"><circle cx="9.50" cy="9.60" r="2.9" fill="#8be287"/><circle cx="9.50" cy="3.20" r="2.9" fill="#8be287"/><circle cx="9.50" cy="16.00" r="2.9" fill="#8be287"/><circle cx="3.90" cy="6.40" r="2.9" fill="#8be287"/><circle cx="15.10" cy="6.40" r="2.9" fill="#8be287"/><circle cx="3.90" cy="12.80" r="2.9" fill="#8be287"/><circle cx="15.10" cy="12.80" r="2.9" fill="#8be287"/></svg>
<svg style="left:1384.4px;top:495.8px" width="19" height="19.2" viewBox="0 0 19 19.2"><circle cx="9.50" cy="9.60" r="2.9" fill="#8be287"/><circle cx="9.50" cy="3.20" r="2.9" fill="#8be287"/><circle cx="9.50" cy="16.00" r="2.9" fill="#8be287"/><circle cx="3.90" cy="6.40" r="2.9" fill="#8be287"/><circle cx="15.10" cy="6.40" r="2.9" fill="#8be287"/><circle cx="3.90" cy="12.80" r="2.9" fill="#8be287"/><circle cx="15.10" cy="12.80" r="2.9" fill="#8be287"/></svg>
<svg style="left:1760.8px;top:495.8px" width="19" height="19.2" viewBox="0 0 19 19.2"><circle cx="9.50" cy="9.60" r="2.9" fill="#8be287"/><circle cx="9.50" cy="3.20" r="2.9" fill="#8be287"/><circle cx="9.50" cy="16.00" r="2.9" fill="#8be287"/><circle cx="3.90" cy="6.40" r="2.9" fill="#8be287"/><circle cx="15.10" cy="6.40" r="2.9" fill="#8be287"/><circle cx="3.90" cy="12.80" r="2.9" fill="#8be287"/><circle cx="15.10" cy="12.80" r="2.9" fill="#8be287"/></svg>
<svg style="left:2175.9px;top:495.8px" width="19" height="19.2" viewBox="0 0 19 19.2"><circle cx="9.50" cy="9.60" r="2.9" fill="#8be287"/><circle cx="9.50" cy="3.20" r="2.9" fill="#8be287"/><circle cx="9.50" cy="16.00" r="2.9" fill="#8be287"/><circle cx="3.90" cy="6.40" r="2.9" fill="#8be287"/><circle cx="15.10" cy="6.40" r="2.9" fill="#8be287"/><circle cx="3.90" cy="12.80" r="2.9" fill="#8be287"/><circle cx="15.10" cy="12.80" r="2.9" fill="#8be287"/></svg>
<div class="t" style="left:127.4px;top:435.2px;font-size:22px;font-weight:700;color:#1e1e1e;letter-spacing:-0.399px;">Emissions déclarées</div>
<div class="t" style="left:536.3px;top:435.4px;font-size:22px;font-weight:700;color:#1e1e1e;letter-spacing:-0.339px;">Mes Fournisseurs</div>
<div class="t" style="left:1354.9px;top:435.4px;font-size:22px;font-weight:700;color:#1e1e1e;letter-spacing:-0.127px;">Mes Clients</div>
<div class="t" style="left:2174.9px;top:435.4px;font-size:22px;font-weight:700;color:#1e1e1e;letter-spacing:-0.502px;">PCF validés</div>
<div class="t" style="left:155.9px;top:496.5px;font-size:17px;font-weight:400;color:#333;letter-spacing:0.183px;">Emissions déclarées</div>
<div class="t" style="left:588.2px;top:495.8px;font-size:19px;font-weight:400;color:#333;letter-spacing:-1.043px;">PCF Reçus</div>
<div class="t" style="left:963.0px;top:495.8px;font-size:19px;font-weight:400;color:#333;letter-spacing:-0.501px;">PCF demandés</div>
<div class="t" style="left:1406.2px;top:495.8px;font-size:19px;font-weight:400;color:#333;letter-spacing:-0.645px;">PCF envoyés</div>
<div class="t" style="left:1781.6px;top:495.8px;font-size:19px;font-weight:400;color:#333;letter-spacing:-0.506px;">Demandes de PCF</div>
<div class="t" style="left:2203.6px;top:496.4px;font-size:17px;font-weight:400;color:#333;letter-spacing:-0.194px;">PCF validés</div>
<div class="t" style="left:127.9px;top:520.1px;font-size:34.5px;font-weight:700;color:#222;letter-spacing:0.000px;transform:scaleX(0.9119);transform-origin:0 0;">69,11</div>
<div class="t" style="left:216.6px;top:534.1px;font-size:18px;font-weight:400;color:#222;letter-spacing:-1.126px;">ktCO2e</div>
<div class="t" style="left:566.8px;top:521.3px;font-size:34.5px;font-weight:700;color:#222;letter-spacing:0.000px;transform:scaleX(0.9068);transform-origin:0 0;">10</div>
<div class="t" style="left:940.3px;top:521.3px;font-size:34.5px;font-weight:700;color:#222;letter-spacing:0.000px;transform:scaleX(0.9642);transform-origin:0 0;">24</div>
<div class="t" style="left:1384.4px;top:521.3px;font-size:34.5px;font-weight:700;color:#222;letter-spacing:0.000px;transform:scaleX(0.9459);transform-origin:0 0;">13</div>
<div class="t" style="left:1759.8px;top:521.3px;font-size:34.5px;font-weight:700;color:#222;letter-spacing:0.000px;transform:scaleX(0.9329);transform-origin:0 0;">6</div>
<div class="t" style="left:2176.6px;top:519.6px;font-size:34.5px;font-weight:700;color:#222;letter-spacing:0.000px;transform:scaleX(0.9251);transform-origin:0 0;">14</div>
<div class="a" style="left:909.8px;top:494.3px;width:2px;height:64px;background:#6b8fe0"></div>
<div class="a" style="left:1729.3px;top:494.3px;width:2px;height:64px;background:#6b8fe0"></div>
<div class="a" style="left:2470.4px;top:588.1px;width:72.6px;height:44.6px;border-radius:9px;background:#5b87e6;box-shadow:0 2px 4px rgba(0,0,0,0.28)"></div>
<svg style="left:2465px;top:583px" width="85" height="57" viewBox="2465 583 85 57">
<g fill="#fff">
<rect x="2497.2" y="601.4" width="10.9" height="2.3"/><rect x="2510.9" y="599" width="2.2" height="6.8"/><rect x="2512.9" y="601.4" width="5" height="2.3"/>
<rect x="2497.2" y="608.3" width="3.9" height="2.3"/><rect x="2501" y="606.2" width="2.7" height="6.5"/><rect x="2506.4" y="608.3" width="11.5" height="2.3"/>
<rect x="2497.2" y="615.3" width="6.5" height="2.3"/><rect x="2506" y="613.3" width="2.3" height="6.8"/><rect x="2508.2" y="615.3" width="9.7" height="2.3"/>
</g></svg>
<div class="a" style="left:106px;top:640.7px;width:798.0px;height:441.1px;border-radius:8px;background:#fff;box-shadow:0 1px 10px rgba(0,0,0,0.19),0 0 2px rgba(0,0,0,0.08)"></div>
<div class="a" style="left:922.2px;top:640.7px;width:796.8px;height:441.1px;border-radius:8px;background:#fff;box-shadow:0 1px 10px rgba(0,0,0,0.19),0 0 2px rgba(0,0,0,0.08)"></div>
<div class="a" style="left:1737.2px;top:640.7px;width:797.1px;height:441.1px;border-radius:8px;background:#fff;box-shadow:0 1px 10px rgba(0,0,0,0.19),0 0 2px rgba(0,0,0,0.08)"></div>
<div class="a" style="left:106px;top:1100px;width:2427.8px;height:400px;border-radius:8px;background:#fff;box-shadow:0 1px 10px rgba(0,0,0,0.19),0 0 2px rgba(0,0,0,0.08)"></div>
<div class="a" style="left:763.0px;top:650.7px;width:72.9px;height:44.9px;border-radius:9px;background:#5a86e6;box-shadow:0 2px 3px rgba(0,0,0,0.22)"></div><svg style="left:786.9px;top:663.1px" width="25.2" height="20" viewBox="0 0 25.2 20"><path d="M16.5,2.6 Q14,0.8 11.5,1.2 Q5.5,1.8 4.6,9" fill="none" stroke="#fff" stroke-width="2.6" stroke-linecap="round"/><path d="M0,9.8 L8.8,9.8 L4.4,14.8 Z" fill="#fff"/><path d="M8.5,17.6 Q11,19.2 13.5,18.8 Q19.5,18.2 20.4,11" fill="none" stroke="#fff" stroke-width="2.6" stroke-linecap="round"/><path d="M16,10.5 L25.2,10.5 L20.4,5 Z" fill="#fff"/></svg>
<div class="a" style="left:847.5px;top:650.7px;width:47.1px;height:44.9px;border-radius:9px;background:#7b899b;box-shadow:0 2px 3px rgba(0,0,0,0.22)"></div><svg style="left:860.1px;top:662.5px" width="21" height="21" viewBox="0 0 21 21"><circle cx="10.5" cy="10.5" r="10.5" fill="#fff"/><path d="M7,7.8 Q7,4 10.6,4 Q14.2,4.2 14.2,7.4 Q14.2,9.4 12.2,10.6 Q10.6,11.6 10.6,13.6" fill="none" stroke="#7b899b" stroke-width="2.1"/><circle cx="10.6" cy="16.3" r="1.3" fill="#7b899b"/></svg>
<div class="a" style="left:1578.0px;top:650.7px;width:72.9px;height:44.9px;border-radius:9px;background:#5a86e6;box-shadow:0 2px 3px rgba(0,0,0,0.22)"></div><svg style="left:1601.9px;top:663.1px" width="25.2" height="20" viewBox="0 0 25.2 20"><path d="M16.5,2.6 Q14,0.8 11.5,1.2 Q5.5,1.8 4.6,9" fill="none" stroke="#fff" stroke-width="2.6" stroke-linecap="round"/><path d="M0,9.8 L8.8,9.8 L4.4,14.8 Z" fill="#fff"/><path d="M8.5,17.6 Q11,19.2 13.5,18.8 Q19.5,18.2 20.4,11" fill="none" stroke="#fff" stroke-width="2.6" stroke-linecap="round"/><path d="M16,10.5 L25.2,10.5 L20.4,5 Z" fill="#fff"/></svg>
<div class="a" style="left:1662.5px;top:650.7px;width:47.1px;height:44.9px;border-radius:9px;background:#7b899b;box-shadow:0 2px 3px rgba(0,0,0,0.22)"></div><svg style="left:1675.1px;top:662.5px" width="21" height="21" viewBox="0 0 21 21"><circle cx="10.5" cy="10.5" r="10.5" fill="#fff"/><path d="M7,7.8 Q7,4 10.6,4 Q14.2,4.2 14.2,7.4 Q14.2,9.4 12.2,10.6 Q10.6,11.6 10.6,13.6" fill="none" stroke="#7b899b" stroke-width="2.1"/><circle cx="10.6" cy="16.3" r="1.3" fill="#7b899b"/></svg>
<div class="a" style="left:2393.3px;top:650.7px;width:72.9px;height:44.9px;border-radius:9px;background:#5a86e6;box-shadow:0 2px 3px rgba(0,0,0,0.22)"></div><svg style="left:2417.2px;top:663.1px" width="25.2" height="20" viewBox="0 0 25.2 20"><path d="M16.5,2.6 Q14,0.8 11.5,1.2 Q5.5,1.8 4.6,9" fill="none" stroke="#fff" stroke-width="2.6" stroke-linecap="round"/><path d="M0,9.8 L8.8,9.8 L4.4,14.8 Z" fill="#fff"/><path d="M8.5,17.6 Q11,19.2 13.5,18.8 Q19.5,18.2 20.4,11" fill="none" stroke="#fff" stroke-width="2.6" stroke-linecap="round"/><path d="M16,10.5 L25.2,10.5 L20.4,5 Z" fill="#fff"/></svg>
<div class="a" style="left:2477.8px;top:650.7px;width:47.1px;height:44.9px;border-radius:9px;background:#7b899b;box-shadow:0 2px 3px rgba(0,0,0,0.22)"></div><svg style="left:2490.4px;top:662.5px" width="21" height="21" viewBox="0 0 21 21"><circle cx="10.5" cy="10.5" r="10.5" fill="#fff"/><path d="M7,7.8 Q7,4 10.6,4 Q14.2,4.2 14.2,7.4 Q14.2,9.4 12.2,10.6 Q10.6,11.6 10.6,13.6" fill="none" stroke="#7b899b" stroke-width="2.1"/><circle cx="10.6" cy="16.3" r="1.3" fill="#7b899b"/></svg>
<div class="a" style="left:2392.8px;top:1109.5px;width:72.9px;height:44.9px;border-radius:9px;background:#5a86e6;box-shadow:0 2px 3px rgba(0,0,0,0.22)"></div><svg style="left:2416.7px;top:1121.9px" width="25.2" height="20" viewBox="0 0 25.2 20"><path d="M16.5,2.6 Q14,0.8 11.5,1.2 Q5.5,1.8 4.6,9" fill="none" stroke="#fff" stroke-width="2.6" stroke-linecap="round"/><path d="M0,9.8 L8.8,9.8 L4.4,14.8 Z" fill="#fff"/><path d="M8.5,17.6 Q11,19.2 13.5,18.8 Q19.5,18.2 20.4,11" fill="none" stroke="#fff" stroke-width="2.6" stroke-linecap="round"/><path d="M16,10.5 L25.2,10.5 L20.4,5 Z" fill="#fff"/></svg>
<div class="a" style="left:2477.3px;top:1109.5px;width:47.1px;height:44.9px;border-radius:9px;background:#7b899b;box-shadow:0 2px 3px rgba(0,0,0,0.22)"></div><svg style="left:2489.9px;top:1121.3px" width="21" height="21" viewBox="0 0 21 21"><circle cx="10.5" cy="10.5" r="10.5" fill="#fff"/><path d="M7,7.8 Q7,4 10.6,4 Q14.2,4.2 14.2,7.4 Q14.2,9.4 12.2,10.6 Q10.6,11.6 10.6,13.6" fill="none" stroke="#7b899b" stroke-width="2.1"/><circle cx="10.6" cy="16.3" r="1.3" fill="#7b899b"/></svg>
<div class="t" style="left:116.5px;top:653.9px;font-size:18px;font-weight:400;color:#222;letter-spacing:0.673px;">Résultats par Scope</div>
<div class="t" style="left:932.0px;top:653.9px;font-size:18px;font-weight:400;color:#222;letter-spacing:0.836px;">Répartition par catégorie</div>
<div class="t" style="left:1746.3px;top:653.9px;font-size:18px;font-weight:400;color:#222;letter-spacing:0.867px;">cascade unetdemi</div>
<div class="t" style="left:116.0px;top:1113.2px;font-size:18px;font-weight:400;color:#222;letter-spacing:0.395px;">SBTi, Réel et PA24</div>
<svg style="left:0;top:0" width="2560" height="1393"><path d="M509.51,725.98 A99.5,99.5 0 0 1 554.76,911.91 L539.45,884.95 A68.5,68.5 0 0 0 508.29,756.95 Z" fill="#d8817f" stroke="#d8817f" stroke-width="5" stroke-linejoin="round"/><path d="M547.82,915.50 A99.5,99.5 0 0 1 545.83,916.40 L533.30,888.05 A68.5,68.5 0 0 0 534.67,887.43 Z" fill="#7f7fe0" stroke="#7f7fe0" stroke-width="5" stroke-linejoin="round"/><path d="M538.57,919.28 A99.5,99.5 0 1 1 501.69,725.98 L502.91,756.95 A68.5,68.5 0 1 0 528.30,890.03 Z" fill="#98e08a" stroke="#98e08a" stroke-width="5" stroke-linejoin="round"/></svg>
<svg style="left:0;top:0" width="2560" height="1393"><path d="M1324.91,725.98 A99.5,99.5 0 0 1 1334.55,726.83 L1330.33,757.54 A68.5,68.5 0 0 0 1323.69,756.95 Z" fill="#d8817f" stroke="#d8817f" stroke-width="5" stroke-linejoin="round"/><line x1="1336.92" y1="760.00" x2="1344.81" y2="727.57" stroke="#8ab4e0" stroke-width="2.62" stroke-linecap="round"/><path d="M1351.60,730.72 A99.5,99.5 0 1 1 1317.09,725.98 L1318.31,756.95 A68.5,68.5 0 1 0 1342.07,760.22 Z" fill="#9ae0be" stroke="#9ae0be" stroke-width="5" stroke-linejoin="round"/></svg>
<div class="t" style="left:564.1px;top:799.3px;font-size:14.5px;font-weight:400;color:#222;letter-spacing:0.969px;">42.4%</div>
<div class="t" style="left:406.0px;top:834.2px;font-size:14.5px;font-weight:400;color:#222;letter-spacing:1.484px;">56%</div>
<div class="t" style="left:1310.5px;top:734.8px;font-size:14.5px;font-weight:400;color:#222;letter-spacing:1.312px;">2.8%</div>
<div class="t" style="left:1287.0px;top:902.1px;font-size:14.5px;font-weight:400;color:#222;letter-spacing:1.219px;">96.4%</div>
<div class="a" style="left:335.1px;top:953.4px;width:14px;height:14px;background:#d8817f"></div><div class="t" style="left:361.0px;top:950.0px;font-size:19px;font-weight:400;color:#333;letter-spacing:0.079px;">Scope 1: Emissions directes de GES</div>
<div class="a" style="left:267.2px;top:1001.8px;width:14px;height:14px;background:#7f7fe0"></div><div class="t" style="left:292.0px;top:998.4px;font-size:19px;font-weight:400;color:#333;letter-spacing:0.302px;">Scope 2: Emissions indirectes associées à l&#x27;énergie</div>
<div class="a" style="left:296px;top:1050.2px;width:14px;height:14px;background:#98e08a"></div><div class="t" style="left:321.4px;top:1046.8px;font-size:19px;font-weight:400;color:#333;letter-spacing:0.228px;">Scope 3: Autres émissions indirectes de GES</div>
<div class="a" style="left:1080.6px;top:953.4px;width:14px;height:14px;background:#d8817f"></div><div class="t" style="left:1106.0px;top:950.0px;font-size:19px;font-weight:400;color:#333;letter-spacing:-0.300px;">Énergie</div>
<div class="a" style="left:1193.6px;top:953.4px;width:14px;height:14px;background:#d680d6"></div><div class="t" style="left:1219.4px;top:950.0px;font-size:19px;font-weight:400;color:#333;letter-spacing:0.374px;">Autres émissions directes hors énergie</div>
<div class="a" style="left:984.6px;top:1001.8px;width:14px;height:14px;background:#9a7edd"></div><div class="t" style="left:1010.4px;top:998.4px;font-size:19px;font-weight:400;color:#333;letter-spacing:0.461px;">Actifs (Amortissements, Leasing, Participations, Aval)</div>
<div class="a" style="left:1506.8px;top:1001.8px;width:14px;height:14px;background:#8ab4e0"></div><div class="t" style="left:1532.2px;top:998.4px;font-size:19px;font-weight:400;color:#333;letter-spacing:0.241px;">Déplacements</div>
<div class="a" style="left:1020.5px;top:1050.2px;width:14px;height:14px;background:#9ae0be"></div><div class="t" style="left:1046.6px;top:1046.8px;font-size:19px;font-weight:400;color:#333;letter-spacing:0.381px;">Matériaux et services entrants</div>
<div class="a" style="left:1335.3px;top:1050.2px;width:14px;height:14px;background:#a8e080"></div><div class="t" style="left:1360.8px;top:1046.8px;font-size:19px;font-weight:400;color:#333;letter-spacing:-0.034px;">Déchets</div>
<div class="a" style="left:1453.9px;top:1050.2px;width:14px;height:14px;background:#e0d080"></div><div class="t" style="left:1480.0px;top:1046.8px;font-size:19px;font-weight:400;color:#333;letter-spacing:0.296px;">Produits vendus</div>
<svg style="left:0;top:0" width="2560" height="1393"><rect x="1830.7" y="1004.45" width="610" height="1.3" fill="#e2e2e2"/><rect x="1826.5" y="1004.45" width="4.2" height="1.3" fill="#777"/><rect x="1830.7" y="970.31" width="610" height="1.3" fill="#e2e2e2"/><rect x="1826.5" y="970.31" width="4.2" height="1.3" fill="#777"/><rect x="1830.7" y="936.17" width="610" height="1.3" fill="#e2e2e2"/><rect x="1826.5" y="936.17" width="4.2" height="1.3" fill="#777"/><rect x="1830.7" y="902.03" width="610" height="1.3" fill="#e2e2e2"/><rect x="1826.5" y="902.03" width="4.2" height="1.3" fill="#777"/><rect x="1830.7" y="867.89" width="610" height="1.3" fill="#e2e2e2"/><rect x="1826.5" y="867.89" width="4.2" height="1.3" fill="#777"/><rect x="1830.7" y="833.75" width="610" height="1.3" fill="#e2e2e2"/><rect x="1826.5" y="833.75" width="4.2" height="1.3" fill="#777"/><rect x="1830.7" y="799.61" width="610" height="1.3" fill="#e2e2e2"/><rect x="1826.5" y="799.61" width="4.2" height="1.3" fill="#777"/><rect x="1830.7" y="765.47" width="610" height="1.3" fill="#e2e2e2"/><rect x="1826.5" y="765.47" width="4.2" height="1.3" fill="#777"/><rect x="1830.7" y="731.33" width="610" height="1.3" fill="#e2e2e2"/><rect x="1826.5" y="731.33" width="4.2" height="1.3" fill="#777"/><rect x="1847.6" y="709.6" width="71.2" height="295.5" fill="#5585e9"/><rect x="1931.9" y="709.5" width="71.9" height="4.5" fill="#5ca65b"/><rect x="2100.8" y="713.4" width="71.9" height="4.9" fill="#5ca65b"/><rect x="2185" y="718.3" width="72" height="85.6" fill="#5ca65b"/><rect x="2354" y="803.9" width="71.8" height="201.2" fill="#5f739f"/><rect x="1883.45" y="1005.3" width="1.3" height="6.6" fill="#777"/><rect x="1967.85" y="1005.3" width="1.3" height="6.6" fill="#777"/><rect x="2052.05" y="1005.3" width="1.3" height="6.6" fill="#777"/><rect x="2136.75" y="1005.3" width="1.3" height="6.6" fill="#777"/><rect x="2221.05" y="1005.3" width="1.3" height="6.6" fill="#777"/><rect x="2305.35" y="1005.3" width="1.3" height="6.6" fill="#777"/><rect x="2389.95" y="1005.3" width="1.3" height="6.6" fill="#777"/></svg>
<div class="t" style="left:1812.3px;top:997.9px;font-size:14.8px;font-weight:400;color:#333;letter-spacing:0.000px;">0</div>
<div class="t" style="left:1798.8px;top:963.7px;font-size:14.8px;font-weight:400;color:#333;letter-spacing:1.375px;">5 k</div>
<div class="t" style="left:1790.0px;top:929.6px;font-size:14.8px;font-weight:400;color:#333;letter-spacing:1.110px;">10 k</div>
<div class="t" style="left:1790.0px;top:895.5px;font-size:14.8px;font-weight:400;color:#333;letter-spacing:1.110px;">15 k</div>
<div class="t" style="left:1790.0px;top:861.3px;font-size:14.8px;font-weight:400;color:#333;letter-spacing:1.110px;">20 k</div>
<div class="t" style="left:1790.0px;top:827.2px;font-size:14.8px;font-weight:400;color:#333;letter-spacing:1.110px;">25 k</div>
<div class="t" style="left:1790.0px;top:793.0px;font-size:14.8px;font-weight:400;color:#333;letter-spacing:1.110px;">30 k</div>
<div class="t" style="left:1790.0px;top:758.9px;font-size:14.8px;font-weight:400;color:#333;letter-spacing:1.110px;">35 k</div>
<div class="t" style="left:1790.0px;top:724.8px;font-size:14.8px;font-weight:400;color:#333;letter-spacing:1.110px;">40 k</div>
<div class="t" style="left:1770.8px;top:857px;font-size:18px;color:#333;transform:translate(-50%,-50%) rotate(-90deg);transform-origin:50% 50%">tCO<span style="font-size:10px;position:relative;top:4px">2</span>e</div>
<div class="t" style="left:1682.1px;top:1012px;width:200px;text-align:right;font-size:16px;color:#333;letter-spacing:0.3px;transform-origin:100% 0;transform:rotate(-15deg)">2021</div>
<div class="t" style="left:1766.5px;top:1012px;width:200px;text-align:right;font-size:16px;color:#333;letter-spacing:0.3px;transform-origin:100% 0;transform:rotate(-15deg)">Énergie</div>
<div class="t" style="left:1850.6999999999998px;top:1012px;width:200px;text-align:right;font-size:16px;color:#333;letter-spacing:0.3px;transform-origin:100% 0;transform:rotate(-15deg)">Actifs</div>
<div class="t" style="left:1935.4px;top:1012px;width:200px;text-align:right;font-size:16px;color:#333;letter-spacing:0.3px;transform-origin:100% 0;transform:rotate(-15deg)">Déplacements</div>
<div class="t" style="left:2019.6999999999998px;top:1012px;width:200px;text-align:right;font-size:16px;color:#333;letter-spacing:0.3px;transform-origin:100% 0;transform:rotate(-15deg)">Achats</div>
<div class="t" style="left:2104px;top:1012px;width:200px;text-align:right;font-size:16px;color:#333;letter-spacing:0.3px;transform-origin:100% 0;transform:rotate(-15deg)">Déchets</div>
<div class="t" style="left:2188.6px;top:1012px;width:200px;text-align:right;font-size:16px;color:#333;letter-spacing:0.3px;transform-origin:100% 0;transform:rotate(-15deg)">2023</div>
<svg style="left:0;top:0" width="2560" height="1393"><rect x="199.65" y="1196.4" width="1.3" height="140" fill="#e2e2e2"/><rect x="278.85" y="1196.4" width="1.3" height="140" fill="#e2e2e2"/><rect x="358.05" y="1196.4" width="1.3" height="140" fill="#e2e2e2"/><rect x="437.25" y="1196.4" width="1.3" height="140" fill="#e2e2e2"/><rect x="516.45" y="1196.4" width="1.3" height="140" fill="#e2e2e2"/><rect x="595.65" y="1196.4" width="1.3" height="140" fill="#e2e2e2"/><rect x="674.85" y="1196.4" width="1.3" height="140" fill="#e2e2e2"/><rect x="754.05" y="1196.4" width="1.3" height="140" fill="#e2e2e2"/><rect x="833.25" y="1196.4" width="1.3" height="140" fill="#e2e2e2"/><rect x="912.45" y="1196.4" width="1.3" height="140" fill="#e2e2e2"/><rect x="991.65" y="1196.4" width="1.3" height="140" fill="#e2e2e2"/><rect x="1070.85" y="1196.4" width="1.3" height="140" fill="#e2e2e2"/><rect x="1150.05" y="1196.4" width="1.3" height="140" fill="#e2e2e2"/><rect x="1229.25" y="1196.4" width="1.3" height="140" fill="#e2e2e2"/><rect x="1308.45" y="1196.4" width="1.3" height="140" fill="#e2e2e2"/><rect x="1387.65" y="1196.4" width="1.3" height="140" fill="#e2e2e2"/><rect x="1466.85" y="1196.4" width="1.3" height="140" fill="#e2e2e2"/><rect x="1546.05" y="1196.4" width="1.3" height="140" fill="#e2e2e2"/><rect x="1625.25" y="1196.4" width="1.3" height="140" fill="#e2e2e2"/><rect x="1704.45" y="1196.4" width="1.3" height="140" fill="#e2e2e2"/><rect x="1783.65" y="1196.4" width="1.3" height="140" fill="#e2e2e2"/><rect x="1862.85" y="1196.4" width="1.3" height="140" fill="#e2e2e2"/><rect x="1942.05" y="1196.4" width="1.3" height="140" fill="#e2e2e2"/><rect x="2021.25" y="1196.4" width="1.3" height="140" fill="#e2e2e2"/><rect x="2100.45" y="1196.4" width="1.3" height="140" fill="#e2e2e2"/><rect x="2179.65" y="1196.4" width="1.3" height="140" fill="#e2e2e2"/><rect x="2258.85" y="1196.4" width="1.3" height="140" fill="#e2e2e2"/><rect x="2338.05" y="1196.4" width="1.3" height="140" fill="#e2e2e2"/><rect x="2417.25" y="1196.4" width="1.3" height="140" fill="#e2e2e2"/><rect x="2496.45" y="1196.4" width="1.3" height="140" fill="#e2e2e2"/><rect x="200" y="1208.35" width="2297.5" height="1.3" fill="#e2e2e2"/><rect x="193.4" y="1208.35" width="6.8" height="1.3" fill="#777"/><rect x="200" y="1228.59" width="2297.5" height="1.3" fill="#e2e2e2"/><rect x="193.4" y="1228.59" width="6.8" height="1.3" fill="#777"/><rect x="200" y="1248.83" width="2297.5" height="1.3" fill="#e2e2e2"/><rect x="193.4" y="1248.83" width="6.8" height="1.3" fill="#777"/><rect x="200" y="1269.07" width="2297.5" height="1.3" fill="#e2e2e2"/><rect x="193.4" y="1269.07" width="6.8" height="1.3" fill="#777"/><rect x="200" y="1289.31" width="2297.5" height="1.3" fill="#e2e2e2"/><rect x="193.4" y="1289.31" width="6.8" height="1.3" fill="#777"/><rect x="200" y="1309.55" width="2297.5" height="1.3" fill="#e2e2e2"/><rect x="193.4" y="1309.55" width="6.8" height="1.3" fill="#777"/><rect x="200" y="1329.79" width="2297.5" height="1.3" fill="#e2e2e2"/><rect x="193.4" y="1329.79" width="6.8" height="1.3" fill="#777"/><polyline points="200.3,1196.5 279.5,1203.4 358.7,1212.1 437.9,1219.0 517.1,1227.3 596.3,1234.4 675.5,1242.7 754.7,1249.9 833.9,1258.2 913.1,1265.3 992.3,1269.7 1071.5,1272.8 1150.7,1276.5 1229.9,1280.7 1309.1,1285.0 1388.3,1288.0 1467.5,1291.7 1546.7,1296.0 1625.9,1299.0 1705.1,1303.3 1784.3,1307.0 1863.5,1310.0 1942.7,1314.3 2021.9,1318.5 2101.1,1321.6 2180.3,1325.8 2259.5,1330.0 2338.7,1334.0 2417.9,1338.0 2497.1,1342.0" fill="none" stroke="#e0533a" stroke-width="5.5" stroke-linejoin="round"/><polyline points="200.3,1196.5 279.5,1226.2 358.7,1251.1 437.9,1272.3" fill="none" stroke="#4a80bd" stroke-width="5.5" stroke-linejoin="round"/><path d="M437.9,1272.3 C467.9,1285 487.1,1300 517.1,1307.4 C542.1,1315 566.3,1320 596.3,1323.6 C626.3,1327 645.5,1330 675.5,1332" fill="none" stroke="#4e8a35" stroke-width="5.5"/><circle cx="200.3" cy="1196.5" r="5.2" fill="#fff" stroke="#5b86e8" stroke-width="2.2"/><circle cx="279.5" cy="1203.4" r="5.2" fill="#fff" stroke="#5b86e8" stroke-width="2.2"/><circle cx="358.7" cy="1212.1" r="5.2" fill="#fff" stroke="#5b86e8" stroke-width="2.2"/><circle cx="437.9" cy="1219.0" r="5.2" fill="#fff" stroke="#5b86e8" stroke-width="2.2"/><circle cx="517.1" cy="1227.3" r="5.2" fill="#fff" stroke="#5b86e8" stroke-width="2.2"/><circle cx="596.3" cy="1234.4" r="5.2" fill="#fff" stroke="#5b86e8" stroke-width="2.2"/><circle cx="675.5" cy="1242.7" r="5.2" fill="#fff" stroke="#5b86e8" stroke-width="2.2"/><circle cx="754.7" cy="1249.9" r="5.2" fill="#fff" stroke="#5b86e8" stroke-width="2.2"/><circle cx="833.9" cy="1258.2" r="5.2" fill="#fff" stroke="#5b86e8" stroke-width="2.2"/><circle cx="913.1" cy="1265.3" r="5.2" fill="#fff" stroke="#5b86e8" stroke-width="2.2"/><circle cx="992.3" cy="1269.7" r="5.2" fill="#fff" stroke="#5b86e8" stroke-width="2.2"/><circle cx="1071.5" cy="1272.8" r="5.2" fill="#fff" stroke="#5b86e8" stroke-width="2.2"/><circle cx="1150.7" cy="1276.5" r="5.2" fill="#fff" stroke="#5b86e8" stroke-width="2.2"/><circle cx="1229.9" cy="1280.7" r="5.2" fill="#fff" stroke="#5b86e8" stroke-width="2.2"/><circle cx="1309.1" cy="1285.0" r="5.2" fill="#fff" stroke="#5b86e8" stroke-width="2.2"/><circle cx="1388.3" cy="1288.0" r="5.2" fill="#fff" stroke="#5b86e8" stroke-width="2.2"/><circle cx="1467.5" cy="1291.7" r="5.2" fill="#fff" stroke="#5b86e8" stroke-width="2.2"/><circle cx="1546.7" cy="1296.0" r="5.2" fill="#fff" stroke="#5b86e8" stroke-width="2.2"/><circle cx="1625.9" cy="1299.0" r="5.2" fill="#fff" stroke="#5b86e8" stroke-width="2.2"/><circle cx="1705.1" cy="1303.3" r="5.2" fill="#fff" stroke="#5b86e8" stroke-width="2.2"/><circle cx="1784.3" cy="1307.0" r="5.2" fill="#fff" stroke="#5b86e8" stroke-width="2.2"/><circle cx="1863.5" cy="1310.0" r="5.2" fill="#fff" stroke="#5b86e8" stroke-width="2.2"/><circle cx="1942.7" cy="1314.3" r="5.2" fill="#fff" stroke="#5b86e8" stroke-width="2.2"/><circle cx="2021.9" cy="1318.5" r="5.2" fill="#fff" stroke="#5b86e8" stroke-width="2.2"/><circle cx="2101.1" cy="1321.6" r="5.2" fill="#fff" stroke="#5b86e8" stroke-width="2.2"/><circle cx="2180.3" cy="1325.8" r="5.2" fill="#fff" stroke="#5b86e8" stroke-width="2.2"/><circle cx="2259.5" cy="1330.0" r="5.2" fill="#fff" stroke="#5b86e8" stroke-width="2.2"/><circle cx="2338.7" cy="1334.0" r="5.2" fill="#fff" stroke="#5b86e8" stroke-width="2.2"/><circle cx="2417.9" cy="1338.0" r="5.2" fill="#fff" stroke="#5b86e8" stroke-width="2.2"/><circle cx="2497.1" cy="1342.0" r="5.2" fill="#fff" stroke="#5b86e8" stroke-width="2.2"/><circle cx="279.5" cy="1226.2" r="5.2" fill="#fff" stroke="#5b86e8" stroke-width="2.2"/><circle cx="358.7" cy="1251.1" r="5.2" fill="#fff" stroke="#5b86e8" stroke-width="2.2"/><circle cx="437.9" cy="1272.3" r="5.2" fill="#fff" stroke="#5b86e8" stroke-width="2.2"/><circle cx="517.1" cy="1307.4" r="5.2" fill="#fff" stroke="#5b86e8" stroke-width="2.2"/><circle cx="596.3" cy="1323.6" r="5.2" fill="#fff" stroke="#5b86e8" stroke-width="2.2"/><circle cx="675.5" cy="1332.0" r="5.2" fill="#fff" stroke="#5b86e8" stroke-width="2.2"/><circle cx="754.7" cy="1338.0" r="5.2" fill="#fff" stroke="#5b86e8" stroke-width="2.2"/></svg>
<div class="t" style="left:154.4px;top:1201.8px;font-size:14.5px;font-weight:400;color:#333;letter-spacing:1.126px;">40 k</div>
<div class="t" style="left:154.4px;top:1222.1px;font-size:14.5px;font-weight:400;color:#333;letter-spacing:1.126px;">35 k</div>
<div class="t" style="left:154.4px;top:1242.3px;font-size:14.5px;font-weight:400;color:#333;letter-spacing:1.126px;">30 k</div>
<div class="t" style="left:154.4px;top:1262.5px;font-size:14.5px;font-weight:400;color:#333;letter-spacing:1.126px;">25 k</div>
<div class="t" style="left:154.4px;top:1282.8px;font-size:14.5px;font-weight:400;color:#333;letter-spacing:1.126px;">20 k</div>
<div class="t" style="left:154.4px;top:1303.0px;font-size:14.5px;font-weight:400;color:#333;letter-spacing:1.126px;">15 k</div>
<div class="t" style="left:154.4px;top:1323.3px;font-size:14.5px;font-weight:400;color:#333;letter-spacing:1.126px;">10 k</div>
<div class="t" style="left:130.9px;top:1283.5px;font-size:18px;color:#333;transform:translate(-50%,-50%) rotate(-90deg);transform-origin:50% 50%">tCO2e</div>
<div class="a" style="left:79px;top:1327px;width:2481px;height:66px;background:#040817"></div>
<div class="t" style="left:113.7px;top:1352.2px;font-size:17.5px;font-weight:400;color:#e6e6ea;letter-spacing:-0.348px;">COPYRIGHT © 2026 GLOBAL CLIMATE INITIATIVES - All rights reserved</div>
<div class="t" style="left:2382.0px;top:1352.9px;font-size:19px;font-weight:400;color:#e6e6ea;letter-spacing:0.966px;">Open footer</div>
<div class="a" style="left:2465.1px;top:1287.7px;width:83.8px;height:83.8px;border-radius:50%;background:#5bb9e6;box-shadow:0 2px 6px rgba(0,0,0,0.25)"></div>
<svg style="left:2460px;top:1280px" width="100" height="100" viewBox="2460 1280 100 100">
<path d="M2499,1311.5 L2523,1311.5 Q2525,1311.5 2525,1313.5 L2525,1330" fill="none" stroke="#fff" stroke-width="2.4" stroke-linecap="round"/>
<path d="M2493,1318.8 L2517,1318.8 Q2519,1318.8 2519,1320.8 L2519,1336.6 Q2519,1338.6 2517,1338.6 L2499,1338.6 L2491.8,1345.6 L2491.8,1320.8 Q2491.8,1318.8 2493.8,1318.8 Z" fill="none" stroke="#fff" stroke-width="2.4" stroke-linejoin="round"/>
</svg></body></html>
